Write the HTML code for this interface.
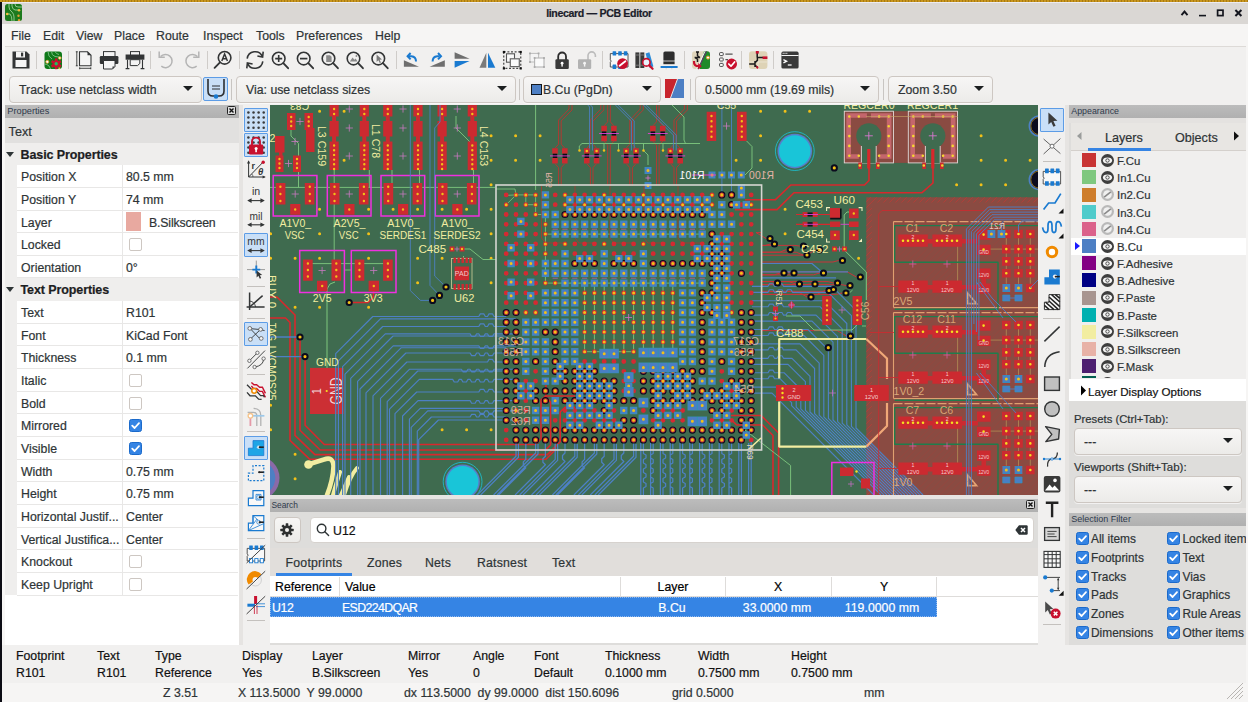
<!DOCTYPE html>
<html lang="en"><head><meta charset="utf-8"><title>linecard — PCB Editor</title>
<style>
*{box-sizing:border-box;margin:0;padding:0}
html,body{width:1248px;height:702px;overflow:hidden;background:#f0efee}
body{position:relative;font-family:"Liberation Sans",sans-serif;font-size:12.3px;color:#2e3436;line-height:1;-webkit-text-stroke:0.2px currentColor}
.a{position:absolute}
.t{position:absolute;white-space:nowrap;line-height:16px;height:16px;margin-top:1px}
.b{font-weight:bold}
.cap{position:absolute;height:12px;background:#b4b4b4;font-size:9.2px;color:#323c4e}
.cap span{position:absolute;left:3px;top:0;line-height:11px;white-space:nowrap}
.combo{position:absolute;height:27px;border:1px solid #cdc7c2;border-radius:4px;background:linear-gradient(#f7f6f5,#ecebe9);box-shadow:0 1px 0 rgba(255,255,255,.6)}
.combo .t{top:5px}
.arr{position:absolute;width:0;height:0;border-left:5px solid transparent;border-right:5px solid transparent;border-top:5px solid #1c1f20}
.sepv{position:absolute;width:1px;background:#c8c5c2}
.seph{position:absolute;height:1px;background:#c8c5c2}
.row{position:absolute;left:17px;width:221px;height:23px;background:#fff;border-bottom:1px solid #e8e7e6}
.row .k{position:absolute;left:4px;top:4px;line-height:16px;white-space:nowrap}
.row .v{position:absolute;left:109px;top:4px;line-height:16px;white-space:nowrap}
.row i{position:absolute;left:105px;top:0;width:1px;height:22px;background:#e8e7e6}
.cb{position:absolute;width:13px;height:13px;border:1px solid #cdc7c2;border-radius:2px;background:#fff}
.cbx{position:absolute;width:13px;height:13px;border-radius:2.5px;background:#3584e4;border:1px solid #1b6acb}
.tog{position:absolute;width:24px;height:24px;border:1px solid #5c9ce6;background:#c9dff7;border-radius:1px}
</style></head>
<body><div class="a" style="left:0px;top:0px;width:1248px;height:24px;background:#dad7d4;"></div>
<div class="a" style="left:0;top:0;width:1248px;height:2px;background:repeating-linear-gradient(90deg,#c8961e 0,#c8961e 2px,#a87a12 2px,#a87a12 3px)"></div>
<div class="a" style="left:0px;top:2px;width:1248px;height:1px;background:#ecebf2;"></div>
<svg class="a" style="left:5px;top:4px" width="17" height="17" viewBox="0 0 17 17"><rect width="17" height="17" rx="2.5" fill="#1d7a1d"/><path d="M4 0 V3 Q4 6 7 8 Q9 10 9 13 V17 M7 0 V2 Q7 5 10 6 H13 M10 0 Q10 3 13 3 H17 M2 10 H5 Q7 12 7 17" fill="none" stroke="#9ad09a" stroke-width="0.9"/><circle cx="14" cy="6.3" r="1.3" fill="#f0c040"/><circle cx="2.2" cy="10" r="1.3" fill="#f0c040"/><circle cx="13.5" cy="11.8" r="1.2" fill="#e0a030"/><circle cx="14" cy="16.3" r="1.2" fill="#e0a030"/></svg>
<div class="t b" style="left:499px;width:200px;text-align:center;top:3.6px;font-size:10.6px;color:#1b1d2a;letter-spacing:-0.35px">linecard — PCB Editor</div>
<svg class="a" style="left:1176px;top:6px" width="70" height="14" viewBox="1176 6 70 14" fill="none" stroke="#14161e" stroke-width="1.9"><path d="M1181.5 15.2 L1184.5 11.6 L1187.5 15.2"/><path d="M1199 15.6 H1206" stroke-width="1.6"/><rect x="1217.6" y="10.2" width="5.4" height="5.4" stroke-width="1.7"/><path d="M1235.4 10 L1241.4 16 M1241.4 10 L1235.4 16" stroke-width="2"/></svg>
<div class="a" style="left:0px;top:24px;width:1248px;height:23px;background:#f6f5f4;"></div>
<div class="a" style="left:4px;top:46px;width:1242px;height:1px;background:#dddad7;"></div>
<div class="t" style="left:11px;top:27px;">File</div>
<div class="t" style="left:43px;top:27px;">Edit</div>
<div class="t" style="left:76px;top:27px;">View</div>
<div class="t" style="left:114px;top:27px;">Place</div>
<div class="t" style="left:156px;top:27px;">Route</div>
<div class="t" style="left:203px;top:27px;">Inspect</div>
<div class="t" style="left:256px;top:27px;">Tools</div>
<div class="t" style="left:296px;top:27px;">Preferences</div>
<div class="t" style="left:375px;top:27px;">Help</div>
<div class="a" style="left:4px;top:47px;width:1242px;height:58px;background:#f1f0ef;"></div>
<svg class="a" style="left:8.5px;top:48px" width="24" height="24" viewBox="0 0 24 24"><path d="M3.5 3.5 H17.5 L20.5 6.5 V20.5 H3.5 Z" fill="#333536"/><rect x="7" y="3.5" width="9" height="6" fill="#f4f4f4"/><rect x="12" y="4.6" width="2.2" height="3.8" fill="#333536"/><rect x="6.5" y="12" width="11" height="7" fill="#f6f6f6"/></svg><div class="sepv" style="left:36px;top:51px;height:18px;background:#cfccc9"></div><svg class="a" style="left:40.5px;top:48px" width="24" height="24" viewBox="0 0 24 24"><rect x="3.5" y="3.5" width="17.5" height="17.5" rx="3" fill="#0f7a1a"/><path d="M7 3.5 Q7 9 11 11 M10.5 3.5 Q10.5 7.5 14 8.5 L18 9 M14 3.5 Q15 6 18 6.5 M3.5 16 Q6 16 8 18 L9.5 21" fill="none" stroke="#7fc088" stroke-width="0.9"/><circle cx="6.3" cy="13.8" r="1.5" fill="#fff" stroke="#f0a030" stroke-width="0.8"/><circle cx="18.8" cy="10" r="1.3" fill="#fff" stroke="#f0a030" stroke-width="0.8"/><circle cx="18.3" cy="20.3" r="1" fill="#f0c040"/><rect x="13.9" y="10.4" width="2.6" height="3" fill="#c8102e" transform="rotate(0 15.2 15.8)"/><rect x="13.9" y="10.4" width="2.6" height="3" fill="#c8102e" transform="rotate(60 15.2 15.8)"/><rect x="13.9" y="10.4" width="2.6" height="3" fill="#c8102e" transform="rotate(120 15.2 15.8)"/><rect x="13.9" y="10.4" width="2.6" height="3" fill="#c8102e" transform="rotate(180 15.2 15.8)"/><rect x="13.9" y="10.4" width="2.6" height="3" fill="#c8102e" transform="rotate(240 15.2 15.8)"/><rect x="13.9" y="10.4" width="2.6" height="3" fill="#c8102e" transform="rotate(300 15.2 15.8)"/><circle cx="15.2" cy="15.8" r="3.6" fill="#c8102e"/><circle cx="15.2" cy="15.8" r="1.7" fill="#20c060"/></svg><div class="sepv" style="left:68px;top:51px;height:18px;background:#cfccc9"></div><svg class="a" style="left:71.5px;top:48px" width="24" height="24" viewBox="0 0 24 24"><path d="M7.5 3.8 H15.5 L19 7.3 V17.8 H7.5 Z" fill="#f4f4f4" stroke="#333536" stroke-width="1.1"/><path d="M15.5 3.8 V7.3 H19 Z" fill="#333536"/><path d="M4.8 3.5 V18 M3.8 3.8 H5.8 M3.8 17.8 H5.8" stroke="#333536" stroke-width="0.9"/><path d="M7.5 20.3 H19 M7.7 19.3 V21.3 M18.8 19.3 V21.3" stroke="#333536" stroke-width="0.9"/></svg><svg class="a" style="left:97px;top:48px" width="24" height="24" viewBox="0 0 24 24"><rect x="6.5" y="3.6" width="11.5" height="5" fill="#f4f4f4" stroke="#333536" stroke-width="1"/><rect x="2.8" y="8" width="18.6" height="8" rx="1.2" fill="#333536"/><path d="M6.5 12.5 H18 V18.5 L15.5 21 H6.5 Z" fill="#f6f6f6" stroke="#333536" stroke-width="1"/><path d="M18 18.5 L15.5 21 V18.5 Z" fill="#333536"/></svg><svg class="a" style="left:122.5px;top:48px" width="24" height="24" viewBox="0 0 24 24"><rect x="7.5" y="3.6" width="9" height="4" fill="#f4f4f4" stroke="#333536" stroke-width="1"/><rect x="2.6" y="6.5" width="18.8" height="5.2" fill="#333536"/><path d="M7.2 11.7 H16.8 V15.5 L14.5 17.6 H7.2 Z" fill="#f4f4f4" stroke="#333536" stroke-width="1"/><path d="M4.5 11.7 V20.6 M19.5 11.7 V20.6 M2.6 20.6 H6.4 M17.6 20.6 H21.4" stroke="#333536" stroke-width="1.1"/></svg><div class="sepv" style="left:150px;top:51px;height:18px;background:#cfccc9"></div><svg class="a" style="left:153.5px;top:48px" width="24" height="24" viewBox="0 0 24 24"><path d="M6.6 8.6 A6.6 6.6 0 1 1 7.3 18.2" fill="none" stroke="#b4b4b4" stroke-width="1.5"/><path d="M5.2 3.6 V9.2 H10.8" fill="none" stroke="#b4b4b4" stroke-width="1.5"/></svg><svg class="a" style="left:180px;top:48px" width="24" height="24" viewBox="0 0 24 24"><path d="M17.4 8.6 A6.6 6.6 0 1 0 16.7 18.2" fill="none" stroke="#b4b4b4" stroke-width="1.5"/><path d="M18.8 3.6 V9.2 H13.2" fill="none" stroke="#b4b4b4" stroke-width="1.5"/></svg><div class="sepv" style="left:207px;top:51px;height:18px;background:#cfccc9"></div><svg class="a" style="left:211px;top:48px" width="24" height="24" viewBox="0 0 24 24"><circle cx="13.6" cy="9.8" r="6.3" fill="none" stroke="#333536" stroke-width="1.6"/><path d="M9 14.4 L3.6 19.8" stroke="#333536" stroke-width="1.9" stroke-linecap="round"/><path d="M10.8 13 L13.6 6 L16.4 13 M11.8 10.8 H15.4" fill="none" stroke="#333536" stroke-width="1.5"/></svg><div class="sepv" style="left:239px;top:51px;height:18px;background:#cfccc9"></div><svg class="a" style="left:243px;top:48px" width="24" height="24" viewBox="0 0 24 24"><path d="M4.2 10.6 A8 8 0 0 1 19.4 8.4" fill="none" stroke="#333536" stroke-width="1.6"/><path d="M20.2 3.6 L19.6 9 L14.4 8" fill="none" stroke="#333536" stroke-width="1.6"/><path d="M19.8 13.4 A8 8 0 0 1 4.6 15.6" fill="none" stroke="#333536" stroke-width="1.6"/><path d="M3.8 20.4 L4.4 15 L9.6 16" fill="none" stroke="#333536" stroke-width="1.6"/></svg><svg class="a" style="left:268px;top:48px" width="24" height="24" viewBox="0 0 24 24"><circle cx="10.7" cy="10.6" r="6.3" fill="none" stroke="#333536" stroke-width="1.6"/><path d="M15.299999999999999 15.2 L20.1 20.2" stroke="#333536" stroke-width="1.9" stroke-linecap="round"/><path d="M7.2 10.6 H14.2 M10.7 7.1 V14.1" stroke="#333536" stroke-width="1.6"/></svg><svg class="a" style="left:293px;top:48px" width="24" height="24" viewBox="0 0 24 24"><circle cx="10.7" cy="10.6" r="6.3" fill="none" stroke="#333536" stroke-width="1.6"/><path d="M15.299999999999999 15.2 L20.1 20.2" stroke="#333536" stroke-width="1.9" stroke-linecap="round"/><path d="M7 10.6 H14.4" stroke="#333536" stroke-width="1.7"/></svg><svg class="a" style="left:317.5px;top:48px" width="24" height="24" viewBox="0 0 24 24"><circle cx="10.5" cy="10.6" r="6.3" fill="none" stroke="#333536" stroke-width="1.6"/><path d="M15.1 15.2 L19.9 20.2" stroke="#333536" stroke-width="1.9" stroke-linecap="round"/><path d="M8.2 7.2 H12 L13.6 8.8 V14 H8.2 Z" fill="#8a8a8a"/></svg><svg class="a" style="left:342.5px;top:48px" width="24" height="24" viewBox="0 0 24 24"><circle cx="10.5" cy="10.6" r="6.3" fill="none" stroke="#333536" stroke-width="1.6"/><path d="M15.1 15.2 L19.9 20.2" stroke="#333536" stroke-width="1.9" stroke-linecap="round"/><path d="M6.8 13.6 L9.6 9.4 L11.4 11.8 L12.6 10.6 L14.6 13.6 Z" fill="#8a8a8a"/><circle cx="13.4" cy="8" r="0.9" fill="#8a8a8a"/></svg><svg class="a" style="left:367.5px;top:48px" width="24" height="24" viewBox="0 0 24 24"><circle cx="10.3" cy="10.6" r="6.3" fill="none" stroke="#333536" stroke-width="1.6"/><path d="M14.9 15.2 L19.700000000000003 20.2" stroke="#333536" stroke-width="1.9" stroke-linecap="round"/><path d="M8.6 6.6 L8.6 14 L10.4 12.2 L11.8 15 L13 14.4 L11.6 11.8 L14 11.6 Z" fill="#7a7a7a"/></svg><div class="sepv" style="left:396px;top:51px;height:18px;background:#cfccc9"></div><svg class="a" style="left:399px;top:48px" width="24" height="24" viewBox="0 0 24 24"><path d="M4.9 12.2 V18.8 H20 Z" fill="#6e6e6e"/><path d="M17 13.4 Q17 8.6 12.4 8.2 H10" fill="none" stroke="#1a7ad0" stroke-width="2"/><path d="M11.6 5 L8.6 8.2 L11.6 11.4" fill="none" stroke="#1a7ad0" stroke-width="2"/></svg><svg class="a" style="left:425px;top:48px" width="24" height="24" viewBox="0 0 24 24"><path d="M19.8 12.2 V18.8 H4.6 Z" fill="#6e6e6e"/><path d="M7.6 13.4 Q7.6 8.6 12.2 8.2 H14.6" fill="none" stroke="#1a7ad0" stroke-width="2"/><path d="M13 5 L16 8.2 L13 11.4" fill="none" stroke="#1a7ad0" stroke-width="2"/></svg><svg class="a" style="left:449.5px;top:48px" width="24" height="24" viewBox="0 0 24 24"><path d="M4.6 4.3 V10.8 H19.6 Z" fill="#6e6e6e"/><path d="M4.6 13 H19.6 L4.6 19.8 Z" fill="#1a7ad0"/></svg><svg class="a" style="left:474.5px;top:48px" width="24" height="24" viewBox="0 0 24 24"><path d="M11.3 4.7 V19.7 H4.5 Z" fill="#7a7a7a"/><path d="M13 4.7 V19.7 H20.3 Z" fill="#1a7ad0"/></svg><svg class="a" style="left:499.5px;top:48px" width="24" height="24" viewBox="0 0 24 24"><rect x="3.8" y="3.9" width="17" height="16.4" fill="none" stroke="#222" stroke-width="1" stroke-dasharray="2 1.6"/><rect x="6.5" y="5.8" width="8" height="8.4" fill="#fafafa" stroke="#555" stroke-width="1.1"/><rect x="10.3" y="10.8" width="9" height="7.8" fill="#fafafa" stroke="#666" stroke-width="1.2"/><rect x="2.8" y="2.9" width="2.2" height="2.2" fill="#111"/><rect x="19.6" y="2.9" width="2.2" height="2.2" fill="#111"/><rect x="2.8" y="19.3" width="2.2" height="2.2" fill="#111"/><rect x="19.6" y="19.3" width="2.2" height="2.2" fill="#111"/></svg><svg class="a" style="left:525px;top:48px" width="24" height="24" viewBox="0 0 24 24"><rect x="5" y="5.4" width="8.6" height="8.6" fill="#f4f4f4" stroke="#bdbdbd" stroke-width="1"/><rect x="9.6" y="10" width="9.4" height="9" fill="#fafafa" stroke="#b4b4b4" stroke-width="1.1"/><rect x="4.1" y="4.5" width="1.8" height="1.8" fill="#aaa"/><rect x="12.7" y="4.5" width="1.8" height="1.8" fill="#aaa"/><rect x="4.1" y="13.1" width="1.8" height="1.8" fill="#aaa"/><rect x="8.7" y="9.1" width="1.8" height="1.8" fill="#aaa"/><rect x="18.1" y="9.1" width="1.8" height="1.8" fill="#aaa"/><rect x="8.7" y="18.1" width="1.8" height="1.8" fill="#aaa"/><rect x="18.1" y="18.1" width="1.8" height="1.8" fill="#aaa"/></svg><svg class="a" style="left:549.5px;top:48px" width="24" height="24" viewBox="0 0 24 24"><path d="M8.2 12 V8.4 A3.9 3.9 0 0 1 16 8.4 V12" fill="none" stroke="#2c2c2c" stroke-width="1.8"/><rect x="5.4" y="11.2" width="13.4" height="9.8" rx="1.2" fill="#3a3a3a"/><circle cx="12.1" cy="15.2" r="1.4" fill="#fff"/><rect x="11.4" y="15.4" width="1.4" height="3.2" fill="#fff"/></svg><svg class="a" style="left:574.5px;top:48px" width="24" height="24" viewBox="0 0 24 24"><path d="M13 12 V7.6 A3.7 3.7 0 0 1 20.4 7.6 V9" fill="none" stroke="#bcbcbc" stroke-width="1.6"/><rect x="3" y="11.2" width="13.2" height="9.8" rx="1.2" fill="#b2b2b2"/><circle cx="9.6" cy="15.2" r="1.4" fill="#f4f4f4"/><rect x="8.9" y="15.4" width="1.4" height="3.2" fill="#f4f4f4"/></svg><div class="sepv" style="left:602px;top:51px;height:18px;background:#cfccc9"></div><svg class="a" style="left:606.5px;top:48px" width="24" height="24" viewBox="0 0 24 24"><path d="M3.3 5.6 H21 V19 H3.3 V14.2 Q5.2 13.2 3.3 11.8 Z" fill="#f8f8f8" stroke="#444" stroke-width="0.9"/><rect x="5.6" y="3.2" width="3.6" height="4.4" rx="0.6" fill="#1a7ad0"/><rect x="11.2" y="3.2" width="3.6" height="4.4" rx="0.6" fill="#1a7ad0"/><rect x="16.8" y="3.2" width="3.6" height="4.4" rx="0.6" fill="#1a7ad0"/><rect x="5.6" y="16.6" width="3.6" height="4.4" rx="0.6" fill="#1a7ad0"/><rect x="11.2" y="16.6" width="3.6" height="4.4" rx="0.6" fill="#1a7ad0"/><circle cx="15.6" cy="15.6" r="5.4" fill="#c8102e"/><path d="M12.6 17.8 L18.4 13.2" stroke="#fff" stroke-width="1.8" stroke-linecap="round"/></svg><svg class="a" style="left:631.5px;top:48px" width="24" height="24" viewBox="0 0 24 24"><rect x="3.4" y="4.4" width="4" height="15.6" fill="#3a3a3a"/><rect x="8.3" y="4.4" width="4" height="15.6" fill="#3a3a3a"/><path d="M13.6 5.6 L17.4 4.2 L21.4 18.4 L17.6 19.8 Z" fill="#2a8ad8"/><path d="M3.4 7 H7.4 M8.3 7 H12.3 M3.4 17.2 H7.4 M8.3 17.2 H12.3" stroke="#888" stroke-width="0.8"/><circle cx="14.4" cy="14.4" r="3.7" fill="#e8f2fb" stroke="#c8102e" stroke-width="1.7"/><path d="M17.2 17.4 L20.6 20.8" stroke="#c8102e" stroke-width="2.2" stroke-linecap="round"/></svg><svg class="a" style="left:656.5px;top:48px" width="24" height="24" viewBox="0 0 24 24"><path d="M6.4 5 Q6.4 3.4 8 3.4 H16 Q17.6 3.4 17.6 5 V12 H6.4 Z" fill="#2e2e2e"/><rect x="6.4" y="12" width="11.2" height="1.8" fill="#777"/><rect x="6.4" y="13.8" width="11.2" height="2.4" fill="#2e2e2e"/><path d="M9.2 18 V21.4 M14.8 18 V21.4" stroke="#d8d8d8" stroke-width="1"/><rect x="3.6" y="18" width="17" height="2" fill="#1a7ad0"/></svg><div class="sepv" style="left:684px;top:51px;height:18px;background:#cfccc9"></div><svg class="a" style="left:688.5px;top:48px" width="24" height="24" viewBox="0 0 24 24"><rect x="3" y="3.2" width="18" height="17.8" rx="3" fill="#e0d6bc"/><path d="M15 3.2 H18 Q21 3.2 21 6.2 V18 Q21 21 18 21 H10.5 Z" fill="#1f8a2a"/><path d="M17.4 3.2 L9 21" stroke="#5a3a6a" stroke-width="1.2"/><path d="M16 3.2 L7.6 21" stroke="#f4f4f4" stroke-width="1"/><path d="M7 4 H10 M8.5 4 V8 M8.5 11 V14 M5.6 9.6 H11 M8.5 8 L11 9.6 M8.5 11 L6 9.6" stroke="#1c1c1c" stroke-width="1.5" fill="none"/><circle cx="19" cy="9.6" r="1.5" fill="#fff" stroke="#f0a030" stroke-width="1"/><path d="M5 13 Q4.6 18.4 10 18.2" fill="none" stroke="#c8102e" stroke-width="2.2"/><path d="M9.2 15 L12.8 18.2 L9.2 21.4 Z" fill="#c8102e"/></svg><svg class="a" style="left:715.5px;top:48px" width="24" height="24" viewBox="0 0 24 24"><rect x="3.6" y="4.6" width="3.6" height="3" rx="0.6" fill="#fff" stroke="#4a4a4a" stroke-width="1"/><rect x="3.6" y="10" width="3.6" height="3" rx="0.6" fill="#fff" stroke="#4a4a4a" stroke-width="1"/><rect x="3.6" y="15.4" width="3.6" height="3" rx="0.6" fill="#fff" stroke="#4a4a4a" stroke-width="1"/><path d="M9.4 6.2 H16.6 M9.4 11.6 H12" stroke="#555" stroke-width="1.3"/><circle cx="15.6" cy="16" r="5.4" fill="#c8102e"/><path d="M12.8 16 L15 18.2 L18.6 14" fill="none" stroke="#fff" stroke-width="1.7" stroke-linecap="round" stroke-linejoin="round"/></svg><div class="sepv" style="left:741px;top:51px;height:18px;background:#cfccc9"></div><svg class="a" style="left:745.5px;top:48px" width="24" height="24" viewBox="0 0 24 24"><rect x="3" y="3.2" width="18.4" height="17.8" rx="3" fill="#ded3b6"/><path d="M3 14 H21.4 M12 3.2 V21" stroke="#efe8d6" stroke-width="0.8"/><path d="M11.2 5 V9.6 M11.2 9.6 H17 M3.2 16 H9 M9 13 V19 M9 14.6 L11.4 12.4 V9.6 M9 17.2 L11.6 19.4" stroke="#1c1c1c" stroke-width="1.5" fill="none"/><rect x="9.8" y="3" width="3" height="2.6" fill="#c8102e"/><rect x="16.6" y="8.4" width="4.8" height="2.6" fill="#c8102e"/><path d="M10.4 17.6 L12.6 19 L11.8 21 L10.4 20 Z" fill="#c8102e"/></svg><div class="sepv" style="left:773px;top:51px;height:18px;background:#cfccc9"></div><svg class="a" style="left:777.5px;top:48px" width="24" height="24" viewBox="0 0 24 24"><rect x="3.4" y="3.6" width="17.2" height="17" rx="1.6" fill="#3a3a3a"/><rect x="3.4" y="7" width="17.2" height="1" fill="#f4f4f4"/><path d="M4.6 5.3 H9.8" stroke="#e8e8e8" stroke-width="1" stroke-dasharray="1.2 0.6"/><path d="M5.4 11.6 L8.6 13.2 L5.4 14.8" fill="none" stroke="#fff" stroke-width="1.3"/><path d="M9.8 17 H13.6" stroke="#fff" stroke-width="1.3"/></svg>
<div class="combo" style="left:9px;top:75.6px;width:193px;height:27px"><div class="t" style="left:9px;top:4.2px">Track: use netclass width</div><div class="arr" style="right:8.5px;top:9.5px"></div></div>
<div class="tog" style="left:203px;top:77px;width:25px;height:24px;border-radius:2px"></div>
<svg class="a" style="left:204px;top:78px" width="24" height="22" viewBox="0 0 24 22"><path d="M4 1 V13 Q4 18 9 18 H15 Q20 18 20 13 V1" fill="none" stroke="#2b2d30" stroke-width="1.6"/><path d="M8 8 H16 M8 11 H16" stroke="#2b2d30" stroke-width="1"/><circle cx="12" cy="18.5" r="2.3" fill="#1a7ad0"/></svg>
<div class="sepv" style="left:231px;top:79px;height:21px"></div>
<div class="combo" style="left:236px;top:75.6px;width:280px;height:27px"><div class="t" style="left:9px;top:4.2px">Via: use netclass sizes</div><div class="arr" style="right:8.5px;top:9.5px"></div></div>
<div class="sepv" style="left:519px;top:79px;height:21px"></div>
<div class="combo" style="left:523px;top:75.6px;width:138px;height:27px"><div class="t" style="left:7px;top:4.2px"><span style="display:inline-block;width:11px;height:11px;background:#4d7fc4;border:1px solid #14171a;vertical-align:-1px;margin-right:1px"></span>B.Cu (PgDn)</div><div class="arr" style="right:8.5px;top:9.5px"></div></div>
<svg class="a" style="left:665px;top:79px" width="19" height="19" viewBox="0 0 19 19"><rect width="19" height="19" fill="#c8252d"/><path d="M12.5 0 H19 V19 H5.5 Z" fill="#4d7fc4"/><path d="M12.5 0 L5.5 19" stroke="#e8e8e8" stroke-width="1"/></svg>
<div class="sepv" style="left:690px;top:79px;height:21px"></div>
<div class="combo" style="left:695px;top:75.6px;width:184px;height:27px"><div class="t" style="left:9px;top:4.2px">0.5000 mm (19.69 mils)</div><div class="arr" style="right:8.5px;top:9.5px"></div></div>
<div class="sepv" style="left:883px;top:79px;height:21px"></div>
<div class="combo" style="left:888px;top:75.6px;width:105px;height:27px"><div class="t" style="left:9px;top:4.2px">Zoom 3.50</div><div class="arr" style="right:8.5px;top:9.5px"></div></div>
<div class="a" style="left:0px;top:2px;width:1.5px;height:700px;background:#0c0c14;"></div>
<div class="a" style="left:1.5px;top:24px;width:3.5px;height:621px;background:#f8f7f6;"></div>
<div class="a" style="left:5px;top:105px;width:234px;height:540px;background:#ffffff;"></div>
<div class="cap" style="left:5px;top:105px;width:234px;height:13px;background:linear-gradient(#bcbcbc,#b0b0b0)"><svg class="a" style="left:0;top:0" width="234" height="13"><text x="2.3" y="8.7" font-family="Liberation Sans, sans-serif" font-size="9.3" fill="#2f3a4c" textLength="42" lengthAdjust="spacingAndGlyphs">Properties</text></svg></div>
<svg class="a" style="left:227px;top:106px" width="9" height="9" viewBox="0 0 9 9"><rect x="0.5" y="0.5" width="8" height="8" rx="1" fill="#dcdcdc" stroke="#222" stroke-width="1"/><path d="M2.5 2.5 L6.5 6.5 M6.5 2.5 L2.5 6.5" stroke="#111" stroke-width="1.4"/></svg>
<div class="a" style="left:5px;top:118px;width:234px;height:25px;background:#e1e0df;"></div>
<div class="t" style="left:8.6px;top:122.7px;font-size:12.6px">Text</div>
<div class="a" style="left:5px;top:143px;width:12px;height:452px;background:#efeeed;"></div>
<div class="a" style="left:5px;top:143px;width:234px;height:22px;background:#efeeed;"></div>
<div class="arr" style="left:6px;top:152px;border-top-color:#2e3436;border-left-width:4.8px;border-right-width:4.8px"></div>
<div class="t b" style="left:20.5px;top:146px;font-size:12.5px;color:#1c2022;letter-spacing:-0.1px">Basic Properties</div>
<div class="row" style="top:165px;height:23px"><i style="height:22px"></i><div class="k">Position X</div><div class="v">80.5 mm</div></div>
<div class="row" style="top:188px;height:23px"><i style="height:22px"></i><div class="k">Position Y</div><div class="v">74 mm</div></div>
<div class="row" style="top:211px;height:22px"><i style="height:21px"></i><div class="k">Layer</div></div>
<div class="a" style="left:126px;top:212px;width:15px;height:19px;background:#e8a9a0;"></div>
<div class="t" style="left:149px;top:214px;letter-spacing:-0.15px">B.Silkscreen</div>
<div class="row" style="top:233px;height:23px"><i style="height:22px"></i><div class="k">Locked</div></div>
<div class="cb" style="left:128.5px;top:238px"></div>
<div class="row" style="top:256px;height:22px"><i style="height:21px"></i><div class="k">Orientation</div><div class="v">0°</div></div>
<div class="a" style="left:5px;top:278px;width:234px;height:23px;background:#efeeed;"></div>
<div class="arr" style="left:6px;top:287px;border-top-color:#2e3436;border-left-width:4.8px;border-right-width:4.8px"></div>
<div class="t b" style="left:20.5px;top:281px;font-size:12.5px;color:#1c2022;letter-spacing:-0.1px">Text Properties</div>
<div class="row" style="top:301px;height:23px"><i style="height:22px"></i><div class="k">Text</div><div class="v">R101</div></div>
<div class="row" style="top:324px;height:22px"><i style="height:21px"></i><div class="k">Font</div><div class="v">KiCad Font</div></div>
<div class="row" style="top:346px;height:23px"><i style="height:22px"></i><div class="k">Thickness</div><div class="v">0.1 mm</div></div>
<div class="row" style="top:369px;height:23px"><i style="height:22px"></i><div class="k">Italic</div></div>
<div class="cb" style="left:128.5px;top:374px"></div>
<div class="row" style="top:392px;height:22px"><i style="height:21px"></i><div class="k">Bold</div></div>
<div class="cb" style="left:128.5px;top:397px"></div>
<div class="row" style="top:414px;height:23px"><i style="height:22px"></i><div class="k">Mirrored</div></div>
<div class="cbx" style="left:128.5px;top:419px"><svg class="a" style="left:0;top:0" width="11" height="11" viewBox="0 0 11 11"><path d="M2.2 5.6 L4.6 8 L9 3.2" fill="none" stroke="#fff" stroke-width="1.8" stroke-linecap="round" stroke-linejoin="round"/></svg></div>
<div class="row" style="top:437px;height:23px"><i style="height:22px"></i><div class="k">Visible</div></div>
<div class="cbx" style="left:128.5px;top:442px"><svg class="a" style="left:0;top:0" width="11" height="11" viewBox="0 0 11 11"><path d="M2.2 5.6 L4.6 8 L9 3.2" fill="none" stroke="#fff" stroke-width="1.8" stroke-linecap="round" stroke-linejoin="round"/></svg></div>
<div class="row" style="top:460px;height:22px"><i style="height:21px"></i><div class="k">Width</div><div class="v">0.75 mm</div></div>
<div class="row" style="top:482px;height:23px"><i style="height:22px"></i><div class="k">Height</div><div class="v">0.75 mm</div></div>
<div class="row" style="top:505px;height:23px"><i style="height:22px"></i><div class="k">Horizontal Justif...</div><div class="v">Center</div></div>
<div class="row" style="top:528px;height:22px"><i style="height:21px"></i><div class="k">Vertical Justifica...</div><div class="v">Center</div></div>
<div class="row" style="top:550px;height:23px"><i style="height:22px"></i><div class="k">Knockout</div></div>
<div class="cb" style="left:128.5px;top:555px"></div>
<div class="row" style="top:573px;height:23px"><i style="height:22px"></i><div class="k">Keep Upright</div></div>
<div class="cb" style="left:128.5px;top:578px"></div>
<div class="a" style="left:239px;top:105px;width:4px;height:540px;background:#e6e4e2;"></div>
<div class="a" style="left:243px;top:105px;width:27px;height:540px;background:#f1f0ef;"></div>
<div class="tog" style="left:244px;top:108px"></div><svg class="a" style="left:244px;top:108.0px" width="24" height="24" viewBox="0 0 24 24"><circle cx="4.4" cy="4.4" r="1.25" fill="#3a3a3a"/><circle cx="4.4" cy="9.5" r="1.25" fill="#3a3a3a"/><circle cx="4.4" cy="14.6" r="1.25" fill="#3a3a3a"/><circle cx="4.4" cy="19.7" r="1.25" fill="#3a3a3a"/><circle cx="9.5" cy="4.4" r="1.25" fill="#3a3a3a"/><circle cx="9.5" cy="9.5" r="1.25" fill="#3a3a3a"/><circle cx="9.5" cy="14.6" r="1.25" fill="#3a3a3a"/><circle cx="9.5" cy="19.7" r="1.25" fill="#3a3a3a"/><circle cx="14.6" cy="4.4" r="1.25" fill="#3a3a3a"/><circle cx="14.6" cy="9.5" r="1.25" fill="#3a3a3a"/><circle cx="14.6" cy="14.6" r="1.25" fill="#3a3a3a"/><circle cx="14.6" cy="19.7" r="1.25" fill="#3a3a3a"/><circle cx="19.7" cy="4.4" r="1.25" fill="#3a3a3a"/><circle cx="19.7" cy="9.5" r="1.25" fill="#3a3a3a"/><circle cx="19.7" cy="14.6" r="1.25" fill="#3a3a3a"/><circle cx="19.7" cy="19.7" r="1.25" fill="#3a3a3a"/></svg><div class="tog" style="left:244px;top:133px"></div><svg class="a" style="left:244px;top:133.2px" width="24" height="24" viewBox="0 0 24 24"><circle cx="4.4" cy="4.4" r="1.25" fill="#3a3a3a"/><circle cx="4.4" cy="9.5" r="1.25" fill="#3a3a3a"/><circle cx="4.4" cy="14.6" r="1.25" fill="#3a3a3a"/><circle cx="4.4" cy="19.7" r="1.25" fill="#3a3a3a"/><circle cx="9.5" cy="4.4" r="1.25" fill="#3a3a3a"/><circle cx="9.5" cy="9.5" r="1.25" fill="#3a3a3a"/><circle cx="9.5" cy="14.6" r="1.25" fill="#3a3a3a"/><circle cx="9.5" cy="19.7" r="1.25" fill="#3a3a3a"/><circle cx="14.6" cy="4.4" r="1.25" fill="#3a3a3a"/><circle cx="14.6" cy="9.5" r="1.25" fill="#3a3a3a"/><circle cx="14.6" cy="14.6" r="1.25" fill="#3a3a3a"/><circle cx="14.6" cy="19.7" r="1.25" fill="#3a3a3a"/><circle cx="19.7" cy="4.4" r="1.25" fill="#3a3a3a"/><circle cx="19.7" cy="9.5" r="1.25" fill="#3a3a3a"/><circle cx="19.7" cy="14.6" r="1.25" fill="#3a3a3a"/><circle cx="19.7" cy="19.7" r="1.25" fill="#3a3a3a"/><path d="M8 12.4 V8.6 A4 4 0 0 1 16 8.6 V12.4" fill="none" stroke="#c8102e" stroke-width="1.9"/><rect x="5" y="11.6" width="14.2" height="9.8" rx="1.2" fill="#c8102e"/><circle cx="12.1" cy="15.6" r="1.5" fill="#fff"/><rect x="11.3" y="15.8" width="1.6" height="3.4" fill="#fff"/></svg><svg class="a" style="left:244px;top:158.0px" width="24" height="24" viewBox="0 0 24 24"><path d="M4.6 3.4 V19 H20.6" fill="none" stroke="#333536" stroke-width="1"/><path d="M4.6 2.2 L3 5.4 H6.2 Z M21.8 19 L18.6 17.4 V20.6 Z" fill="#333536"/><path d="M4.6 19 L18.6 4.6" stroke="#333536" stroke-width="1"/><circle cx="19.2" cy="4.2" r="1.7" fill="#c8102e"/><path d="M9 19 A4.4 4.4 0 0 0 7.8 16" fill="none" stroke="#333536" stroke-width="0.7"/><text x="9.3" y="11" font-family="Liberation Sans, sans-serif" font-size="9" fill="#333536" text-anchor="middle" font-weight="bold">r</text><text x="16.6" y="17" font-family="Liberation Sans, sans-serif" font-size="9.5" fill="#333536" text-anchor="middle" font-style="italic" font-weight="bold">θ</text></svg><svg class="a" style="left:244px;top:182.5px" width="24" height="24" viewBox="0 0 24 24"><text x="12" y="12.2" font-family="Liberation Sans, sans-serif" font-size="10.6" fill="#333536" text-anchor="middle" >in</text><path d="M4.6 17.6 H19.4" stroke="#333536" stroke-width="1.1"/><path d="M7.6 15.3 L3.2 17.6 L7.6 19.900000000000002 Z M16.4 15.3 L20.8 17.6 L16.4 19.900000000000002 Z" fill="#333536"/></svg><svg class="a" style="left:244px;top:207.5px" width="24" height="24" viewBox="0 0 24 24"><text x="12" y="11.6" font-family="Liberation Sans, sans-serif" font-size="10.2" fill="#333536" text-anchor="middle" >mil</text><path d="M4.6 16.8 H19.4" stroke="#333536" stroke-width="1.1"/><path d="M7.6 14.5 L3.2 16.8 L7.6 19.1 Z M16.4 14.5 L20.8 16.8 L16.4 19.1 Z" fill="#333536"/></svg><div class="tog" style="left:244px;top:233px"></div><svg class="a" style="left:244px;top:233.0px" width="24" height="24" viewBox="0 0 24 24"><text x="12" y="12.2" font-family="Liberation Sans, sans-serif" font-size="10.4" fill="#333536" text-anchor="middle" >mm</text><path d="M4.6 17.6 H19.4" stroke="#333536" stroke-width="1.1"/><path d="M7.6 15.3 L3.2 17.6 L7.6 19.900000000000002 Z M16.4 15.3 L20.8 17.6 L16.4 19.900000000000002 Z" fill="#333536"/></svg><svg class="a" style="left:244px;top:258.0px" width="24" height="24" viewBox="0 0 24 24"><path d="M12.3 2.6 V11 M3 11.6 H21" stroke="#777" stroke-width="0.7"/><path d="M8.4 11.6 H16.2 M12.3 7.6 V15.4" stroke="#1a7ad0" stroke-width="1.9"/><path d="M12.6 12.6 L12.6 19.6 L14.4 17.8 L15.8 20.8 L17.2 20.1 L15.8 17.2 L18.2 17 Z" fill="#333536"/></svg><div class="seph" style="left:247px;top:286px;width:18px;background:#c4c1be"></div><svg class="a" style="left:244px;top:289.5px" width="24" height="24" viewBox="0 0 24 24"><path d="M5.6 2.6 V20 M2.6 17 H20.6" stroke="#333536" stroke-width="1.5" fill="none"/><path d="M5.6 17 L18.6 5.6" stroke="#333536" stroke-width="1.5"/><path d="M5.6 11 Q10.6 11.6 11.6 17" fill="none" stroke="#333536" stroke-width="0.9"/></svg><div class="seph" style="left:247px;top:318px;width:18px;background:#c4c1be"></div><div class="tog" style="left:244px;top:322px"></div><svg class="a" style="left:244px;top:322.0px" width="24" height="24" viewBox="0 0 24 24"><path d="M6.2 6.6 L16.2 17 M5.8 17.6 L16.4 7.6 M6.2 6.6 L16.4 7.6 M16.4 7.6 L20.6 8.6" stroke="#333536" stroke-width="0.9" fill="none"/><circle cx="5.8" cy="6.4" r="1.9" fill="#f4f4f4" stroke="#555" stroke-width="0.8"/><circle cx="16.6" cy="7.4" r="1.9" fill="#f4f4f4" stroke="#555" stroke-width="0.8"/><circle cx="6.4" cy="17.4" r="1.9" fill="#f4f4f4" stroke="#555" stroke-width="0.8"/><circle cx="17.2" cy="16.4" r="1.9" fill="#f4f4f4" stroke="#555" stroke-width="0.8"/></svg><svg class="a" style="left:244px;top:347.5px" width="24" height="24" viewBox="0 0 24 24"><path d="M3.4 20.4 L21 2.6" stroke="#333536" stroke-width="0.9"/><path d="M5.6 12.6 L13.4 4.8 M10.8 19 Q19.4 17.6 19.6 11" stroke="#333536" stroke-width="0.9" fill="none"/><circle cx="13.4" cy="4.8" r="1.7" fill="#f4f4f4" stroke="#555" stroke-width="0.8"/><circle cx="5.4" cy="12.8" r="1.7" fill="#f4f4f4" stroke="#555" stroke-width="0.8"/><circle cx="19.6" cy="10.6" r="1.7" fill="#f4f4f4" stroke="#555" stroke-width="0.8"/><circle cx="10.6" cy="19" r="1.7" fill="#f4f4f4" stroke="#555" stroke-width="0.8"/></svg><div class="seph" style="left:247px;top:374px;width:18px;background:#c4c1be"></div><svg class="a" style="left:244px;top:378.5px" width="24" height="24" viewBox="0 0 24 24"><path d="M7.4 3.4 L10 5.8 L12.6 5.8 L15.6 8.2 L18.4 8.2 L21.4 14.4" fill="none" stroke="#c8102e" stroke-width="1.4"/><path d="M7.4 7 L9.4 9.4 L12.6 9.4 L15.6 12.4 L18.4 12.4 L21.4 18.4" fill="none" stroke="#c8102e" stroke-width="1.4"/><path d="M3 5.8 L8.6 11.4 L11.8 11.4 L16.6 16.6 L19.4 16.6 L20.4 18.2 M3 13.4 L6 16.8 L11.4 16.8 L14.6 20.2 L17.6 20.4" fill="none" stroke="#333536" stroke-width="1.3"/><circle cx="10.2" cy="11.8" r="2.4" fill="#fff" stroke="#f08a00" stroke-width="1.5"/></svg><svg class="a" style="left:244px;top:405.0px" width="24" height="24" viewBox="0 0 24 24"><path d="M3.6 7.4 H9.4 Q12.8 7.4 12.8 10.8 V21 M9.6 3.4 Q16.8 3.6 16.8 10.6 V21" fill="none" stroke="#b2b2b2" stroke-width="1.3"/><path d="M7 10.8 H20.4" stroke="#9cc8ea" stroke-width="1.7"/><path d="M6.4 12.8 V21" stroke="#e49aa8" stroke-width="1.8"/><circle cx="6.4" cy="10.8" r="2.3" fill="#fff" stroke="#f6c48c" stroke-width="1.3"/></svg><div class="seph" style="left:247px;top:431px;width:18px;background:#c4c1be"></div><div class="tog" style="left:244px;top:436px"></div><svg class="a" style="left:244px;top:435.5px" width="24" height="24" viewBox="0 0 24 24"><path d="M4.4 19.6 V12.2 H9 V4.6 H19.8 V19.6 Z" fill="#1ea5e6" stroke="#1a7ad0" stroke-width="0.8"/><circle cx="14.6" cy="11.2" r="1.9" fill="#f4f4f4" stroke="#1ea5e6" stroke-width="0.7"/><path d="M15.6 11.2 H19.8" stroke="#222" stroke-width="1.6"/><circle cx="15.6" cy="11.2" r="0.9" fill="#222"/></svg><svg class="a" style="left:244px;top:460.5px" width="24" height="24" viewBox="0 0 24 24"><path d="M4.4 19.6 V12.2 H9 V4.6 H19.8 V19.6 Z" fill="none" stroke="#1a7ad0" stroke-width="1.2" stroke-dasharray="2 1.6"/><path d="M14.6 11.2 H19.8" stroke="#222" stroke-width="1.6"/><circle cx="15.2" cy="11.2" r="1" fill="#222"/></svg><svg class="a" style="left:244px;top:485.5px" width="24" height="24" viewBox="0 0 24 24"><path d="M4.4 19.6 V12.2 H9 V4.6 H19.8 V19.6 Z" fill="#f8f8f8" stroke="#1a7ad0" stroke-width="1.2"/><path d="M12 8.4 H17 V14 H12 Z" fill="none" stroke="#1a7ad0" stroke-width="0.8"/><circle cx="14.6" cy="11.2" r="1.9" fill="#f4f4f4" stroke="#1a7ad0" stroke-width="0.7"/><path d="M15.6 11.2 H19.8" stroke="#222" stroke-width="1.6"/><circle cx="15.6" cy="11.2" r="0.9" fill="#222"/></svg><svg class="a" style="left:244px;top:510.5px" width="24" height="24" viewBox="0 0 24 24"><path d="M4.4 19.6 V12.2 H9 V4.6 H19.8 V19.6 Z" fill="#f8f8f8" stroke="#1a7ad0" stroke-width="1.2"/><path d="M4.4 19.6 L19.8 12.6 M4.4 19.6 L13 8 M9 12.2 L9 4.6 L14 9" fill="none" stroke="#1a7ad0" stroke-width="0.8"/><circle cx="14.6" cy="11.2" r="1.9" fill="#f4f4f4" stroke="#1a7ad0" stroke-width="0.7"/><path d="M15.6 11.2 H19.8" stroke="#222" stroke-width="1.6"/><circle cx="15.6" cy="11.2" r="0.9" fill="#222"/></svg><div class="seph" style="left:247px;top:538px;width:18px;background:#c4c1be"></div><svg class="a" style="left:244px;top:542.0px" width="24" height="24" viewBox="0 0 24 24"><path d="M3.2 6.4 H20.6 V19 H3.2 V14.4 Q5.2 13.2 3.2 11.8 Z" fill="#f8f8f8" stroke="#444" stroke-width="0.9"/><rect x="5.2" y="3.4" width="3.6" height="4.6" rx="0.4" fill="#1a7ad0"/><rect x="10.6" y="3.4" width="3.6" height="4.6" rx="0.4" fill="#1a7ad0"/><rect x="16" y="3.4" width="3.6" height="4.6" rx="0.4" fill="#1a7ad0"/><rect x="5.4" y="16.6" width="3.2" height="4.2" fill="#fff" stroke="#1a7ad0" stroke-width="0.9"/><rect x="10.8" y="16.6" width="3.2" height="4.2" fill="#fff" stroke="#1a7ad0" stroke-width="0.9"/><rect x="16.2" y="16.6" width="3.2" height="4.2" fill="#fff" stroke="#1a7ad0" stroke-width="0.9"/><path d="M2.6 21 L21.2 3.2" stroke="#444" stroke-width="1"/></svg><svg class="a" style="left:244px;top:567.5px" width="24" height="24" viewBox="0 0 24 24"><circle cx="11.4" cy="12" r="6" fill="none" stroke="#d0d0d0" stroke-width="1"/><circle cx="11.4" cy="12" r="2.4" fill="none" stroke="#d0d0d0" stroke-width="1"/><path d="M4.6 16.4 A8 8 0 0 1 17.4 6.2 L11.4 12 Z" fill="#f08a00"/><circle cx="11.4" cy="12" r="2.9" fill="#f4f4f4"/><path d="M2.6 21 L21.2 3.2" stroke="#444" stroke-width="1"/></svg><svg class="a" style="left:244px;top:592.5px" width="24" height="24" viewBox="0 0 24 24"><path d="M11.6 3 V11" stroke="#c8102e" stroke-width="3"/><path d="M3.4 12.2 H11" stroke="#1a7ad0" stroke-width="3"/><path d="M12 10.8 H21 M12 13.6 H21" stroke="#1a7ad0" stroke-width="0.8"/><path d="M10.4 12.4 V21 M13 12.4 V21" stroke="#c8102e" stroke-width="0.8"/><path d="M2.6 21 L21.2 3.2" stroke="#444" stroke-width="1"/></svg><div class="seph" style="left:247px;top:620px;width:18px;background:#c4c1be"></div>
<svg width="768" height="390" viewBox="270 105 768 390" style="position:absolute;left:270px;top:105px;overflow:hidden"><rect x="270" y="105" width="768" height="390" fill="#3f6b4f" /><path d="M866.3 197.2 H1038 V495 H866.3 Z" fill="#8a4b42"/><path d="M893.6 111.2 H908.3 V162.9 H893.6 Z" fill="#8a4b42"/><defs><pattern id="hz" width="6" height="6" patternUnits="userSpaceOnUse"><path d="M-1 7 L7 -1 M-4 4 L4 -4 M2 10 L10 2" stroke="#c03a34" stroke-width="0.9"/></pattern></defs><path d="M866.3 197.2 H1038 V202.6 H871.8 V495 H866.3 Z" fill="url(#hz)" opacity="0.75"/><path d="M319.6 111.2h0M344.1 111.2h0M760.6 111.2h0M785.1 111.2h0M809.6 111.2h0M491.1 135.7h0M515.6 135.7h0M540.1 135.7h0M760.6 135.7h0M981.1 135.7h0M344.1 160.2h0M491.1 160.2h0M515.6 160.2h0M540.1 160.2h0M736.1 160.2h0M760.6 160.2h0M981.1 160.2h0M1005.6 160.2h0M1030.1 160.2h0M491.1 184.7h0M956.6 184.7h0M981.1 184.7h0M1005.6 184.7h0M319.6 209.2h0M368.6 209.2h0M393.1 209.2h0M417.6 209.2h0M442.1 209.2h0M466.6 209.2h0M491.1 209.2h0M785.1 209.2h0M270.6 233.7h0M319.6 233.7h0M368.6 233.7h0M491.1 233.7h0M785.1 233.7h0M270.6 258.2h0M295.1 258.2h0M319.6 258.2h0M368.6 258.2h0M417.6 258.2h0M442.1 258.2h0M491.1 258.2h0M858.6 258.2h0M417.6 282.7h0M491.1 282.7h0M295.1 307.2h0M319.6 307.2h0M368.6 307.2h0M270.6 405.2h0M270.6 429.7h0M442.1 429.7h0M466.6 429.7h0M491.1 429.7h0M295.1 454.2h0M295.1 478.7h0" stroke="#f2c118" stroke-width="3" stroke-linecap="round" fill="none"/><circle cx="794.8" cy="151.1" r="19.4" fill="none" stroke="#19c5d8" stroke-width="0.8"/><circle cx="794.8" cy="151.1" r="17.3" fill="#5a7cc8" /><circle cx="794.8" cy="151.1" r="15.8" fill="#19c5d8" /><circle cx="462.6" cy="481.7" r="19.4" fill="none" stroke="#19c5d8" stroke-width="0.8"/><circle cx="462.6" cy="481.7" r="17.3" fill="#5a7cc8" /><circle cx="462.6" cy="481.7" r="15.8" fill="#19c5d8" /><circle cx="257.5" cy="478" r="22" fill="#8a6aa8" /><circle cx="257.5" cy="478" r="17.8" fill="#4d80c4" /><circle cx="1039.4" cy="126" r="10" fill="#0b0b1e" stroke="#4d80c4" stroke-width="1.7"/><circle cx="1039.4" cy="126" r="8.6" fill="none" stroke="#e0b020" stroke-width="0.6"/><circle cx="1039.4" cy="179.6" r="10" fill="#0b0b1e" stroke="#4d80c4" stroke-width="1.7"/><circle cx="1039.4" cy="179.6" r="8.6" fill="none" stroke="#e0b020" stroke-width="0.6"/><rect x="844.3" y="111.2" width="49.2" height="51.7" fill="#8a4b42" stroke="#e4d8d8" stroke-width="0.9"/><path d="M846.3 113.2 h45.2 v45.5 h-12.5 v-4.5 h7.8 v-36.5 h-35.8 v36.5 h7.8 v4.5 h-12.5 z" fill="#c4666c"/><rect x="866.9" y="113.2" width="4" height="4.5" fill="#8a4b42"/><circle cx="868.8" cy="135.8" r="12.6" fill="#3f6b4f" /><rect x="861.6" y="146" width="14.4" height="17" fill="#3f6b4f" /><path d="M861.4 146 V162.9 M876.2 146 V162.9" stroke="#e4d8d8" stroke-width="0.9"/><rect x="867.2" y="149" width="3.2" height="19.5" fill="#d8282c" /><path d="M858.3 162.5h3.6v6.5h-3.6zM876 162.5h3.6v6.5h-3.6z" fill="#cc2a30" /><path d="M849.3 116.5h0M858.8 116.5h0M879.1 116.5h0M888.7 116.5h0M849.3 126.3h0M849.3 136.1h0M849.3 145.9h0M849.3 155.7h0M888.7 126.3h0M888.7 136.1h0M888.7 145.9h0M888.7 155.7h0M858.8 155.8h0M879.1 155.8h0M859.8 165.5h0M878.3 165.5h0" stroke="#f6d830" stroke-width="2.6" stroke-linecap="round" fill="none"/><path d="M864.8 135.8h8M868.8 131.8v8" stroke="#d878d0" stroke-width="0.9" fill="none"/><rect x="908.3" y="111.2" width="49.2" height="51.7" fill="#8a4b42" stroke="#e4d8d8" stroke-width="0.9"/><path d="M910.3 113.2 h45.2 v45.5 h-12.5 v-4.5 h7.8 v-36.5 h-35.8 v36.5 h7.8 v4.5 h-12.5 z" fill="#c4666c"/><rect x="930.9" y="113.2" width="4" height="4.5" fill="#8a4b42"/><circle cx="932.8" cy="135.8" r="12.6" fill="#3f6b4f" /><rect x="925.6" y="146" width="14.4" height="17" fill="#3f6b4f" /><path d="M925.4 146 V162.9 M940.2 146 V162.9" stroke="#e4d8d8" stroke-width="0.9"/><rect x="931.2" y="149" width="3.2" height="19.5" fill="#d8282c" /><path d="M922.3 162.5h3.6v6.5h-3.6zM940 162.5h3.6v6.5h-3.6z" fill="#cc2a30" /><path d="M913.3 116.5h0M922.8 116.5h0M943.1 116.5h0M952.7 116.5h0M913.3 126.3h0M913.3 136.1h0M913.3 145.9h0M913.3 155.7h0M952.7 126.3h0M952.7 136.1h0M952.7 145.9h0M952.7 155.7h0M922.8 155.8h0M943.1 155.8h0M923.8 165.5h0M942.3 165.5h0" stroke="#f6d830" stroke-width="2.6" stroke-linecap="round" fill="none"/><path d="M928.8 135.8h8M932.8 131.8v8" stroke="#d878d0" stroke-width="0.9" fill="none"/><path d="M866 116.5 H958" stroke="#c8a868" stroke-width="0.6"/><path d="M270 318L285.5 318L290 322.5L290 440.4L309.8 459.3L546 459.3L555.4 449.7L555.4 447M270 297L277 297L295 315L295 435.4L314.9 454.6L547.4 454.6L560.2 441.7L560.2 412L565 407.4L575 407.4M300 337L300 430.3L320.2 450L545.8 450L550.6 444.8L550.6 402L546 397L546 385M305.1 356.6L305.1 425.3L324.3 444.5L535.4 444.5L541 439L541 400L545.5 396L575 396M349.2 302.5L368 302.5L373.5 297L373.5 291M745 199.7L775.5 199.7L790.8 185L864.5 185L869 180.5L869 150M735 209.6L777 209.6L794 192.7L922 192.7L933 183L933 150" stroke="#d8282c" stroke-width="1.6" fill="none" stroke-linejoin="round" /><path d="M731 415.5L761 415.5L778.6 433L778.6 495M731 419.5L736.7 425L762.7 425L773 435.5L773 495" stroke="#d8282c" stroke-width="1.6" fill="none" stroke-linejoin="round" /><path d="M270 187.4 L495 187.4" stroke="#7fc87f" stroke-width="0.9" fill="none" /><path d="M291 130 L291 136 L298.5 143.5 L298.5 187.4" stroke="#7fc87f" stroke-width="0.9" fill="none" /><path d="M334.2 170 L334.2 187.4" stroke="#7fc87f" stroke-width="0.9" fill="none" /><path d="M369.3 170 L369.3 187.4" stroke="#7fc87f" stroke-width="0.9" fill="none" /><path d="M392 170 L392 187.4" stroke="#7fc87f" stroke-width="0.9" fill="none" /><path d="M419.5 170 L419.5 187.4" stroke="#7fc87f" stroke-width="0.9" fill="none" /><path d="M473.5 170 L473.5 187.4" stroke="#7fc87f" stroke-width="0.9" fill="none" /><path d="M334.2 204 L334.2 263.6" stroke="#7fc87f" stroke-width="0.9" fill="none" /><path d="M311 263.6 L384 263.6" stroke="#7fc87f" stroke-width="0.9" fill="none" /><path d="M344.7 270 L351.3 270" stroke="#7fc87f" stroke-width="0.9" fill="none" /><path d="M335 282 L330 284 L327 289 L327 368" stroke="#7fc87f" stroke-width="1" fill="none" /><path d="M456 116 L456 128 L471 143" stroke="#7fc87f" stroke-width="0.9" fill="none" /><path d="M463 249 L470 249 L483 259.5 L496 259.5" stroke="#7fc87f" stroke-width="0.9" fill="none" /><path d="M463.5 256 L463.5 262" stroke="#7fc87f" stroke-width="0.9" fill="none" /><rect x="451.5" y="258.5" width="20.5" height="30" fill="none" stroke="#cfcf9a" stroke-width="0.8"/><path d="M275.8 183h9.6v21.5h-9.6zM304.8 183h9.6v21.5h-9.6zM290.2 204h10.2v10.8h-10.2zM329.5 105h9.2v11.5h-9.2zM359.7 105h9.2v11.5h-9.2zM329.5 121h9.2v15.5h-9.2zM359.7 121h9.2v15.5h-9.2zM332.1 116h4v6h-4zM362.3 116h4v6h-4zM332.1 136h4v6h-4zM362.3 136h4v6h-4zM329.5 141.5h9.2v28.5h-9.2zM359.7 141.5h9.2v28.5h-9.2zM329.9 183h9.6v21.5h-9.6zM358.9 183h9.6v21.5h-9.6zM344.3 204h10.2v10.8h-10.2zM383.2 105h9.2v11.5h-9.2zM413.4 105h9.2v11.5h-9.2zM383.2 121h9.2v15.5h-9.2zM413.4 121h9.2v15.5h-9.2zM385.8 116h4v6h-4zM416 116h4v6h-4zM385.8 136h4v6h-4zM416 136h4v6h-4zM383.2 141.5h9.2v28.5h-9.2zM413.4 141.5h9.2v28.5h-9.2zM383.6 183h9.6v21.5h-9.6zM412.6 183h9.6v21.5h-9.6zM398 204h10.2v10.8h-10.2zM437.5 105h9.2v11.5h-9.2zM467.7 105h9.2v11.5h-9.2zM437.5 121h9.2v15.5h-9.2zM467.7 121h9.2v15.5h-9.2zM440.1 116h4v6h-4zM470.3 116h4v6h-4zM440.1 136h4v6h-4zM470.3 136h4v6h-4zM437.5 141.5h9.2v28.5h-9.2zM467.7 141.5h9.2v28.5h-9.2zM437.9 183h9.6v21.5h-9.6zM466.9 183h9.6v21.5h-9.6zM452.3 204h10.2v10.8h-10.2zM287 113h8.5v17h-8.5zM304.5 113h8.5v17h-8.5zM275 136h9.5v16.5h-9.5zM306 128h8.5v24h-8.5zM275.5 155.5h8v16.5h-8zM293 155.5h8v16.5h-8zM279 152h3.5v4h-3.5zM303.1 259.4h9.6v21.4h-9.6zM331.5 259.4h9.6v21.4h-9.6zM317 280.8h10.4v10.4h-10.4zM354.7 259.4h9.6v21.4h-9.6zM383.1 259.4h9.6v21.4h-9.6zM368.6 280.8h10.4v10.4h-10.4z" fill="#cc2a30" /><path d="M454.6 266.6h14.4v13.6h-14.4zM453.5 257.5h2.4v5.5h-2.4zM457.5 257.5h2.4v5.5h-2.4zM461.5 257.5h2.4v5.5h-2.4zM465.5 257.5h2.4v5.5h-2.4zM469.2 257.5h2.4v5.5h-2.4zM453.5 284h2.4v6h-2.4zM457.5 284h2.4v6h-2.4zM461.5 284h2.4v6h-2.4zM465.5 284h2.4v6h-2.4zM469.2 284h2.4v6h-2.4zM449.5 246.5h5v5h-5zM459.5 246.5h5v5h-5z" fill="#cc2a30" /><text x="461.8" y="276" font-size="7" fill="#f0c8c8" text-anchor="middle" font-family="Liberation Sans, sans-serif" >PAD</text><path d="M280.4 186.8h0M280.4 194h0M280.4 201h0M309.8 186.8h0M309.8 194h0M309.8 201h0M295.2 209.5h0M334.1 109h0M334.1 114h0M334.1 145.5h0M334.1 150.2h0M334.1 154.9h0M334.1 159.6h0M334.1 164.3h0M334.1 169h0M364.3 109h0M364.3 114h0M364.3 145.5h0M364.3 150.2h0M364.3 154.9h0M364.3 159.6h0M364.3 164.3h0M364.3 169h0M334.5 186.8h0M334.5 194h0M334.5 201h0M363.9 186.8h0M363.9 194h0M363.9 201h0M349.3 209.5h0M387.8 109h0M387.8 114h0M387.8 145.5h0M387.8 150.2h0M387.8 154.9h0M387.8 159.6h0M387.8 164.3h0M387.8 169h0M418 109h0M418 114h0M418 145.5h0M418 150.2h0M418 154.9h0M418 159.6h0M418 164.3h0M418 169h0M388.2 186.8h0M388.2 194h0M388.2 201h0M417.6 186.8h0M417.6 194h0M417.6 201h0M403 209.5h0M442.1 109h0M442.1 114h0M442.1 145.5h0M442.1 150.2h0M442.1 154.9h0M442.1 159.6h0M442.1 164.3h0M442.1 169h0M472.3 109h0M472.3 114h0M472.3 145.5h0M472.3 150.2h0M472.3 154.9h0M472.3 159.6h0M472.3 164.3h0M472.3 169h0M442.5 186.8h0M442.5 194h0M442.5 201h0M471.9 186.8h0M471.9 194h0M471.9 201h0M457.3 209.5h0M291.2 117h0M291.2 121.5h0M291.2 126h0M308.7 117h0M308.7 121.5h0M308.7 126h0M279.5 159h0M279.5 163.5h0M279.5 168h0M297 159h0M297 163.5h0M297 168h0M307.9 263.5h0M307.9 270h0M307.9 276.5h0M336.3 263.5h0M336.3 270h0M336.3 276.5h0M322.2 286h0M359.5 263.5h0M359.5 270h0M359.5 276.5h0M387.9 263.5h0M387.9 270h0M387.9 276.5h0M373.8 286h0M452 249h0M462 249h0" stroke="#f2c118" stroke-width="2.4" stroke-linecap="round" fill="none"/><path d="M291.6 194h7.2M295.2 190.4v7.2M345.7 128h7.2M349.3 124.4v7.2M345.7 156h7.2M349.3 152.4v7.2M345.7 109h7.2M349.3 105.4v7.2M345.7 194h7.2M349.3 190.4v7.2M399.4 128h7.2M403 124.4v7.2M399.4 156h7.2M403 152.4v7.2M399.4 109h7.2M403 105.4v7.2M399.4 194h7.2M403 190.4v7.2M453.7 128h7.2M457.3 124.4v7.2M453.7 156h7.2M457.3 152.4v7.2M453.7 109h7.2M457.3 105.4v7.2M453.7 194h7.2M457.3 190.4v7.2M296.4 121.5h7.2M300 117.9v7.2M291.4 141.5h7.2M295 137.9v7.2M284.9 163.5h7.2M288.5 159.9v7.2M318.5 270.5h7.2M322.1 266.9v7.2M370.1 270.5h7.2M373.7 266.9v7.2" stroke="#c878c0" stroke-width="0.8" fill="none"/><path d="M454.5 249h5M457 246.5v5" stroke="#c878c0" stroke-width="0.8" fill="none"/><path d="M273.2 175.4h43.7v40.6h-43.7zM327.3 175.4h43.7v40.6h-43.7zM381 175.4h43.7v40.6h-43.7zM435.3 175.4h43.7v40.6h-43.7zM299.7 250.6h44.7v42h-44.7zM351.3 250.6h44.7v42h-44.7z" fill="none" stroke="#f030e0" stroke-width="1.5"/><path d="M555 148.2L558.6 144.2L558.6 120L569 109L569 105M564.8 148.2L561.2 144.2L561.2 121L572 110L572 105M555 163.6L558.6 167.6L558.6 186M564.8 163.6L561.2 167.6L561.2 186M586.8 148.2L590.4 144.2L590.4 120L600.8 109L600.8 105M596.6 148.2L593 144.2L593 121L603.8 110L603.8 105M586.8 163.6L590.4 167.6L590.4 186M596.6 163.6L593 167.6L593 186M604.1 125.8L607.7 121.8L607.7 105M613.9 125.8L610.3 121.8L610.3 105M604.1 141.2L607.7 145.2L607.7 186M613.9 141.2L610.3 145.2L610.3 186M626.2 148.2L629.8 144.2L629.8 120L640.2 109L640.2 105M636 148.2L632.4 144.2L632.4 121L643.2 110L643.2 105M626.2 163.6L629.8 167.6L629.8 186M636 163.6L632.4 167.6L632.4 186M652.9 125.8L656.5 121.8L656.5 105M662.7 125.8L659.1 121.8L659.1 105M652.9 141.2L656.5 145.2L656.5 186M662.7 141.2L659.1 145.2L659.1 186M670.4 148.2L674 144.2L674 120L684.4 109L684.4 105M680.2 148.2L676.6 144.2L676.6 121L687.4 110L687.4 105M670.4 163.6L674 167.6L674 186M680.2 163.6L676.6 167.6L676.6 186" stroke="#b03a32" stroke-width="1" fill="none" stroke-linejoin="round" /><path d="M535.6 105L535.6 190M579.3 150.5L579.3 146L582 143.5L700 143.5M604 143.5L604 150.5M618.5 143.5L618.5 150.5M643.5 143.5L643.5 150.5M663 143.5L663 150.5M643.5 150.5L648 155L648 165M672 105L684 117L684 140L685.5 143.5M746.6 141L752 146.5L752 168L745 175" stroke="#7fc87f" stroke-width="0.9" fill="none" stroke-linejoin="round" /><path d="M590.6 105L592.4 107L592.4 150.5M587.8 105L589.6 107L589.6 150.5M615.4 105L631.4 121L631.4 150.5M618.2 105L634.2 121L634.2 150.5M643.4 105L673.4 135L673.4 150.5M646.2 105L676.2 135L676.2 150.5M721.9 105L721.9 195M731.5 105L731.5 195M410.3 105L410.3 290.6L420.5 300.4L432.6 300.4M430 105L430 285.4L439.5 295.4M434.7 128L434.7 276L446 287M440 105L440 122L434.7 128" stroke="#4d80c4" stroke-width="0.9" fill="none" stroke-linejoin="round" /><path d="M552.2 148.2h5.6v5.6h-5.6zM552.2 158h5.6v5.6h-5.6zM562 148.2h5.6v5.6h-5.6zM562 158h5.6v5.6h-5.6zM584 148.2h5.6v5.6h-5.6zM584 158h5.6v5.6h-5.6zM593.8 148.2h5.6v5.6h-5.6zM593.8 158h5.6v5.6h-5.6zM601.3 125.8h5.6v5.6h-5.6zM601.3 135.6h5.6v5.6h-5.6zM611.1 125.8h5.6v5.6h-5.6zM611.1 135.6h5.6v5.6h-5.6zM623.4 148.2h5.6v5.6h-5.6zM623.4 158h5.6v5.6h-5.6zM633.2 148.2h5.6v5.6h-5.6zM633.2 158h5.6v5.6h-5.6zM650.1 125.8h5.6v5.6h-5.6zM650.1 135.6h5.6v5.6h-5.6zM659.9 125.8h5.6v5.6h-5.6zM659.9 135.6h5.6v5.6h-5.6zM667.6 148.2h5.6v5.6h-5.6zM667.6 158h5.6v5.6h-5.6zM677.4 148.2h5.6v5.6h-5.6zM677.4 158h5.6v5.6h-5.6z" fill="#cc2a30" /><path d="M552.8 153.8h4.4v4.2h-4.4zM562.6 153.8h4.4v4.2h-4.4zM584.6 153.8h4.4v4.2h-4.4zM594.4 153.8h4.4v4.2h-4.4zM601.9 131.4h4.4v4.2h-4.4zM611.7 131.4h4.4v4.2h-4.4zM624 153.8h4.4v4.2h-4.4zM633.8 153.8h4.4v4.2h-4.4zM650.7 131.4h4.4v4.2h-4.4zM660.5 131.4h4.4v4.2h-4.4zM668.2 153.8h4.4v4.2h-4.4zM678 153.8h4.4v4.2h-4.4z" fill="#0a0a14" /><path d="M550 155.9h19.8M581.8 155.9h19.8M599.1 133.5h19.8M621.2 155.9h19.8M647.9 133.5h19.8M665.4 155.9h19.8" stroke="#e040d0" stroke-width="0.9"/><path d="M579.5 150.5h0M604 150.5h0M618.5 150.5h0M643.5 150.5h0M663 150.5h0M586.8 151h0M596.6 151h0M626.2 151h0M636 151h0M670.4 151h0M680.2 151h0" stroke="#f2c118" stroke-width="2.6" stroke-linecap="round" fill="none"/><path d="M706.7 111.7h9.5v29.3h-9.5zM737 111.7h9.6v29.3h-9.6z" fill="#cc2a30" /><path d="M711.5 116h0M711.5 121.2h0M711.5 126.4h0M711.5 131.6h0M711.5 136.8h0M741.8 116h0M741.8 121.2h0M741.8 126.4h0M741.8 131.6h0M741.8 136.8h0" stroke="#f2c118" stroke-width="2.4" stroke-linecap="round" fill="none"/><path d="M722.9 126h7.2M726.5 122.4v7.2" stroke="#c878c0" stroke-width="0.8" fill="none"/><path d="M712 175h0M721.9 175h0M731.5 175h0M741.3 175h0M648 170.5h0M648 185.5h0" stroke="#3292b8" stroke-width="7.0" stroke-linecap="square" fill="none"/><path d="M712 175h0M721.9 175h0M731.5 175h0M741.3 175h0M648 170.5h0M648 185.5h0" stroke="#4a7ec4" stroke-width="5.8" stroke-linecap="square" fill="none"/><path d="M712 175h0M721.9 175h0M731.5 175h0M741.3 175h0M648 170.5h0M648 185.5h0" stroke="#f2c118" stroke-width="3" stroke-linecap="round" fill="none"/><path d="M692 175 H716" stroke="#e040d0" stroke-width="1"/><path d="M645.4 178h5.2M648 175.4v5.2" stroke="#e070d0" stroke-width="0.8" fill="none"/><rect x="310" y="367.9" width="33.6" height="46.1" fill="#cc2f34" /><text x="316.5" y="391.3" font-size="13" fill="#f0d4d4" text-anchor="middle" textLength="6" lengthAdjust="spacingAndGlyphs" font-family="Liberation Sans, sans-serif" transform="rotate(-90 316.5 391.3) translate(0 4.5)">1</text><text x="336.2" y="391" font-size="17" fill="#f0d4d4" text-anchor="middle" textLength="27" lengthAdjust="spacingAndGlyphs" font-family="Liberation Sans, sans-serif" transform="rotate(-90 336.2 391) translate(0 6.2)">GND</text><path d="M326.7 391h0" stroke="#f6e020" stroke-width="2.2" stroke-linecap="round" fill="none"/><g fill="none" stroke="#f2eda1" stroke-linecap="round" stroke-linejoin="round"><path d="M308 464.5 L324 459.5 Q333 456 333.5 466 Q333 480 327 495" stroke-width="4.6"/><path d="M308.5 464.5 h0" stroke-width="8.6"/><path d="M340 472 Q336 484 333 495 M357 468 Q350 476 344 495 M349 477 L341 495" stroke-width="4"/></g><path d="M844.2 215L847 212L852 212M844.2 215L844.2 250L866.3 272L866.3 300" stroke="#7fc87f" stroke-width="1" fill="none" stroke-linejoin="round" /><path d="M818 214.5L830 214.5M818 224.3L830 224.3M796 214.5L803 214.5M796 224.3L803 224.3" stroke="#d8282c" stroke-width="1.2" fill="none" stroke-linejoin="round" /><path d="M831 208.6h10.6v10h-10.6zM830.2 209.6h10.6v10h-10.6z" fill="#101018" /><path d="M829.8 207.9h10.2v9.8h-10.2zM849 208.6h9.6v9.6h-9.6zM830 221.6h10.2v5.4h-10.2zM849 221.6h9.6v5.4h-9.6zM830.2 230.4h9.6v9.6h-9.6zM849 230.4h9.6v9.6h-9.6zM802.6 212h5v5h-5zM812.6 212h5v5h-5zM802.6 221.8h5v5h-5zM812.6 221.8h5v5h-5zM832 246.5h5v5h-5zM842 246.5h5v5h-5z" fill="#cc2a30" /><path d="M807.6 212.4h5v4.2h-5zM807.6 222.2h5v4.2h-5z" fill="#101018" /><path d="M804 214.5 h14 M804 224.3 h14 M840.6 224.3 h8.4" stroke="#e040d0" stroke-width="0.9"/><path d="M853.8 213.5h0M835 235h0M853.8 235h0M834.5 249h0M844.5 249h0" stroke="#f2c118" stroke-width="2.4" stroke-linecap="round" fill="none"/><path d="M826.6 211 v-3.4 h3.4 M858.6 207.6 h3.4 v3.4 M826.6 238.6 v3.4 h3.4" fill="none" stroke="#f4f0c0" stroke-width="1.1"/><path d="M862 238.6 v3.4 h-3.4 z" fill="#f4f0c0"/><path d="M836.9 249h5.2M839.5 246.4v5.2" stroke="#d070c8" stroke-width="0.8" fill="none"/><path d="M762 232.6L756.1 232.6L766 238.5L770 238.5M762 245.4L765.1 245.4L770.5 244L774.5 244M762 252.2L779.7 252.2L786.3 249.6L790.3 249.6M762 245.4L794.9 245.4L799.5 246L803.5 246M762 252.2L796.2 252.2L803 255L807 255M762 255.2L806.3 255.2L815.5 250L819.5 250M762 262L833 262L838.5 260.5L842.5 260.5M762 274.8L774.2 274.8L780 273L784 273M762 271.8L784.8 271.8L790 273L794 273M762 274.8L813.7 274.8L819.5 273L823.5 273M762 271.8L847.1 271.8L856.3 277L860.3 277M762 284.6L767.9 284.6L773.5 283L777.5 283M762 281.6L789.1 281.6L795.5 284L799.5 284M762 284.6L806.4 284.6L811 284L815 284M762 281.6L828.1 281.6L833.5 283L837.5 283M762 284.6L841.1 284.6L846 285.5L850 285.5M762 291.4L823.6 291.4L829.5 289.5L833.5 289.5M762 294.4L836.6 294.4L842 293L846 293M762 291.4L797.4 291.4L807 297L811 297M762 294.4L817.1 294.4L825 290.5L829 290.5M762 330.6L837.1 330.6L846.5 336L850.5 336" stroke="#c8343a" stroke-width="1" fill="none" stroke-linejoin="round" /><path d="M762 263.5L812 263.5L823.5 273.5M762 271.9L848 271.9M762 277.9L836 277.9M752 286.3L762 286.3L768 286.3L769.5 283.7L773 283.7L774.5 286.3L777 286.3L778.5 283.7L782 283.7L783.5 286.3L832 286.3L856 310.3L856 428L923 495M752 292.3L762 292.3L768 292.3L769.5 289.7L773 289.7L774.5 292.3L777 292.3L778.5 289.7L782 289.7L783.5 292.3L786 292.3L787.5 289.7L791 289.7L792.5 292.3L828 292.3L851.4 315.7L851.4 426.4L920 495M752 300.7L762 300.7L824 300.7L846.8 323.5L846.8 424.8L917 495M752 306.7L762 306.7L768 306.7L769.5 304.1L773 304.1L774.5 306.7L777 306.7L778.5 304.1L782 304.1L783.5 306.7L820 306.7L842.2 328.9L842.2 423.2L914 495M752 315.1L762 315.1L768 315.1L769.5 312.5L773 312.5L774.5 315.1L777 315.1L778.5 312.5L782 312.5L783.5 315.1L786 315.1L787.5 312.5L791 312.5L792.5 315.1L816 315.1L837.6 336.7L837.6 421.6L911 495M752 321.1L762 321.1L812 321.1L833 342.1L833 420L908 495M752 329.5L762 329.5L768 329.5L769.5 326.9L773 326.9L774.5 329.5L777 329.5L778.5 326.9L782 326.9L783.5 329.5L808 329.5L828.4 349.9L828.4 418.4L905 495M752 335.5L762 335.5L768 335.5L769.5 332.9L773 332.9L774.5 335.5L777 335.5L778.5 332.9L782 332.9L783.5 335.5L786 335.5L787.5 332.9L791 332.9L792.5 335.5L804 335.5L823.8 355.3L823.8 416.8L902 495M752 343.9L762 343.9L800 343.9L819.2 363.1L819.2 415.2L899 495M752 349.9L762 349.9L768 349.9L769.5 347.3L773 347.3L774.5 349.9L777 349.9L778.5 347.3L782 347.3L783.5 349.9L796 349.9L814.6 368.5L814.6 413.6L896 495M752 358.3L762 358.3L768 358.3L769.5 355.7L773 355.7L774.5 358.3L777 358.3L778.5 355.7L782 355.7L783.5 358.3L792 358.3L810 376.3L810 412L893 495M752 364.3L762 364.3L788 364.3L805.4 381.7L805.4 410.4L890 495M752 372.7L762 372.7L768 372.7L769.5 370.1L773 370.1L774.5 372.7L784 372.7L800.8 389.5L800.8 408.8L887 495M752 378.7L762 378.7L768 378.7L769.5 376.1L773 376.1L774.5 378.7L780 378.7L796.2 394.9L796.2 407.2L884 495M752 387.1L762 387.1L776 387.1L791.6 402.7L791.6 405.6L881 495M752 393.1L762 393.1L772 393.1L787 408.1L787 408.1L873.9 495" stroke="#4d80c4" stroke-width="1.15" fill="none" stroke-linejoin="round" /><path d="M852.6 290L846 296M862 320L852 330L814 330L800 316L786 316M862 326L866 326M745 430L790.6 465.5L790.6 495" stroke="#7fc87f" stroke-width="0.9" fill="none" stroke-linejoin="round" /><path d="M822.2 296h9.5v29h-9.5zM852.6 296h9.4v29h-9.4z" fill="#cc2a30" /><path d="M827 300.5h0M827 305.4h0M827 310.3h0M827 315.2h0M827 320.1h0M857.3 300.5h0M857.3 305.4h0M857.3 310.3h0M857.3 315.2h0M857.3 320.1h0" stroke="#f2c118" stroke-width="2.4" stroke-linecap="round" fill="none"/><path d="M773 306.5h5v5h-5zM773 316h5v5h-5z" fill="#cc2a30" /><path d="M775.5 318.5h0" stroke="#f2c118" stroke-width="2.2" stroke-linecap="round" fill="none"/><path d="M791.5 301 l3.6 4 l-3.6 4 l-3.6 -4 z" fill="#d03048"/><path d="M838.6 310h6.8M842 306.6v6.8M788.1 305h6.8M791.5 301.6v6.8M772.1 313.5h6.8M775.5 310.1v6.8" stroke="#c070c0" stroke-width="0.8" fill="none"/><path d="M776 385h35.2v16h-35.2zM854.2 385h34.6v16h-34.6z" fill="#cc2a30" /><path d="M782.5 388.5h0M782.5 393h0M782.5 397.5h0" stroke="#f6e020" stroke-width="2.4" stroke-linecap="round" fill="none"/><text x="794" y="391.6" font-size="5.6" fill="#f4d0d0" text-anchor="middle" font-family="Liberation Sans, sans-serif" >2</text><text x="794" y="398.6" font-size="5.8" fill="#f4d0d0" text-anchor="middle" font-family="Liberation Sans, sans-serif" >GND</text><text x="871.5" y="391.6" font-size="5.6" fill="#f4d0d0" text-anchor="middle" font-family="Liberation Sans, sans-serif" >1</text><text x="871.5" y="398.6" font-size="5.8" fill="#f4d0d0" text-anchor="middle" font-family="Liberation Sans, sans-serif" >12V0</text><path d="M779.2 378.5L779.2 339L866.3 339M779.2 401.5L779.2 446.6L866.3 446.6" stroke="#f2eda1" stroke-width="2.2" fill="none" stroke-linejoin="round" /><path d="M866.3 339L887 358.5L887 379M887 403L887 426L866.3 446.6" stroke="#f0a878" stroke-width="2.2" fill="none" stroke-linejoin="round" /><path d="M829.1 393h6.8M832.5 389.6v6.8" stroke="#c070c0" stroke-width="0.8" fill="none"/><path d="M831.8 495 V462.5 H874 V495" fill="none" stroke="#f030e0" stroke-width="1.5"/><path d="M840 467.5h13.5v8.5h-13.5zM861 478.5h9v10h-9z" fill="#cc2a30" /><path d="M856.5 471.5h0" stroke="#f6e020" stroke-width="2.4" stroke-linecap="round" fill="none"/><path d="M848 484h6M851 481v6" stroke="#c070c0" stroke-width="0.8" fill="none"/><path d="M770 238.5h0M774.5 244h0M790.3 249.6h0M803.5 246h0M807 255h0M819.5 250h0M842.5 260.5h0M784 273h0M794 273h0M823.5 273h0M860.3 277h0M777.5 283h0M799.5 284h0M815 284h0M837.5 283h0M850 285.5h0M833.5 289.5h0M846 293h0M811 297h0M829 290.5h0M850.5 336h0M828.3 347.7h0M834.3 167.9h0" stroke="#0b0b1e" stroke-width="7.2" stroke-linecap="round" fill="none"/><path d="M770 238.5h0M774.5 244h0M790.3 249.6h0M803.5 246h0M807 255h0M819.5 250h0M842.5 260.5h0M784 273h0M794 273h0M823.5 273h0M860.3 277h0M777.5 283h0M799.5 284h0M815 284h0M837.5 283h0M850 285.5h0M833.5 289.5h0M846 293h0M811 297h0M829 290.5h0M850.5 336h0M828.3 347.7h0M834.3 167.9h0" stroke="#f2c118" stroke-width="3.2" stroke-linecap="round" fill="none"/><path d="M967.6 293 L976.6 303.6 H967.6 Z" fill="none" stroke="#e4a474" stroke-width="1.7"/><path d="M967.6 384 L976.6 394.6 H967.6 Z" fill="none" stroke="#e4a474" stroke-width="1.7"/><path d="M967.6 475 L976.6 485.6 H967.6 Z" fill="none" stroke="#e4a474" stroke-width="1.7"/><defs><pattern id="hz2" width="7" height="7" patternUnits="userSpaceOnUse"><path d="M-1 8 L8 -1 M-5 5 L5 -5 M2 12 L12 2" stroke="#b03a34" stroke-width="0.7"/></pattern></defs><path d="M893.5 221.6 H1038 V495 H893.5 Z" fill="url(#hz2)" opacity="0.3"/><path d="M957.6 246L957.6 281M1006.3 238L1006.3 284M1018.5 238L1018.5 284M1030.3 238L1030.3 284M990 249.1L1038 249.1M957.6 337L957.6 372M1006.3 329L1006.3 375M1018.5 329L1018.5 375M1030.3 329L1030.3 375M990 340.1L1038 340.1M957.6 428L957.6 463M1006.3 420L1006.3 466M1018.5 420L1018.5 466M1030.3 420L1030.3 466M990 431.1L1038 431.1" stroke="#b89858" stroke-width="0.7" fill="none" stroke-linejoin="round" /><path d="M893.5 221.6 H1038" stroke="#e0a070" stroke-width="1.1" stroke-dasharray="9 2"/><path d="M893.5 312.6 H1038" stroke="#e0a070" stroke-width="1.1" stroke-dasharray="9 2"/><path d="M893.5 403.6 H1038" stroke="#e0a070" stroke-width="1.1" stroke-dasharray="9 2"/><path d="M893.5 307.6L893.5 221.6M893.5 307.6L1038 307.6M893.5 398.6L893.5 312.6M893.5 398.6L1038 398.6M893.5 495L893.5 403.6" stroke="#e0a070" stroke-width="1.1" fill="none" stroke-linejoin="round" /><path d="M998 300L998 262.2L894.7 262.2L894.7 225.6L1038 225.6M894.7 309.2L998 309.2L998 300M998 391L998 353.2L894.7 353.2L894.7 316.6L1038 316.6M894.7 400.2L998 400.2L998 391M998 495L998 444.2L894.7 444.2L894.7 407.6L1038 407.6" stroke="#1f7d4c" stroke-width="1.4" fill="none" stroke-linejoin="round" /><path d="M985 210.5L882 210.5L878.7 214L878.7 495M878.7 286.5L898 286.5M878.7 377.5L898 377.5M870 332.5L894 332.5M878.7 468.5L898 468.5" stroke="#d0282e" stroke-width="0.8" fill="none" stroke-linejoin="round" /><path d="M898.3 234.5h29.5v12.3h-29.5zM932.4 234.5h29.6v12.3h-29.6zM927.8 239.1h4.6v4.4h-4.6zM962 239.1h16v4.4h-16zM898.3 280.5h29.5v12.3h-29.5zM932.4 280.5h29.6v12.3h-29.6zM927.8 285.1h4.6v4.4h-4.6zM962 285.1h16v4.4h-16zM977 229.6h13.6v10.2h-13.6zM977 244.8h13.6v10.2h-13.6zM977 268.4h13.6v10.4h-13.6zM977 283.4h13.6v10.4h-13.6zM981.5 278h4.6v6h-4.6zM1002 229.7h8.6v8.6h-8.6zM1002 244.8h8.6v8.6h-8.6zM1002 257.1h8.6v8.6h-8.6zM1002 268.9h8.6v8.6h-8.6zM1002 283.7h8.6v8.6h-8.6zM1014.2 229.7h8.6v8.6h-8.6zM1014.2 244.8h8.6v8.6h-8.6zM1014.2 257.1h8.6v8.6h-8.6zM1014.2 268.9h8.6v8.6h-8.6zM1014.2 283.7h8.6v8.6h-8.6zM1026 229.7h8.6v8.6h-8.6zM1026 244.8h8.6v8.6h-8.6zM1026 257.1h8.6v8.6h-8.6zM1026 268.9h8.6v8.6h-8.6zM1026 283.7h8.6v8.6h-8.6zM898.3 325.5h29.5v12.3h-29.5zM932.4 325.5h29.6v12.3h-29.6zM927.8 330.1h4.6v4.4h-4.6zM962 330.1h16v4.4h-16zM898.3 371.5h29.5v12.3h-29.5zM932.4 371.5h29.6v12.3h-29.6zM927.8 376.1h4.6v4.4h-4.6zM962 376.1h16v4.4h-16zM977 320.6h13.6v10.2h-13.6zM977 335.8h13.6v10.2h-13.6zM977 359.4h13.6v10.4h-13.6zM977 374.4h13.6v10.4h-13.6zM981.5 369h4.6v6h-4.6zM1002 320.7h8.6v8.6h-8.6zM1002 335.8h8.6v8.6h-8.6zM1002 348.1h8.6v8.6h-8.6zM1002 359.9h8.6v8.6h-8.6zM1002 374.7h8.6v8.6h-8.6zM1014.2 320.7h8.6v8.6h-8.6zM1014.2 335.8h8.6v8.6h-8.6zM1014.2 348.1h8.6v8.6h-8.6zM1014.2 359.9h8.6v8.6h-8.6zM1014.2 374.7h8.6v8.6h-8.6zM1026 320.7h8.6v8.6h-8.6zM1026 335.8h8.6v8.6h-8.6zM1026 348.1h8.6v8.6h-8.6zM1026 359.9h8.6v8.6h-8.6zM1026 374.7h8.6v8.6h-8.6zM898.3 416.5h29.5v12.3h-29.5zM932.4 416.5h29.6v12.3h-29.6zM927.8 421.1h4.6v4.4h-4.6zM962 421.1h16v4.4h-16zM898.3 462.5h29.5v12.3h-29.5zM932.4 462.5h29.6v12.3h-29.6zM927.8 467.1h4.6v4.4h-4.6zM962 467.1h16v4.4h-16zM977 411.6h13.6v10.2h-13.6zM977 426.8h13.6v10.2h-13.6zM977 450.4h13.6v10.4h-13.6zM977 465.4h13.6v10.4h-13.6zM981.5 460h4.6v6h-4.6zM1002 411.7h8.6v8.6h-8.6zM1002 426.8h8.6v8.6h-8.6zM1002 439.1h8.6v8.6h-8.6zM1002 450.9h8.6v8.6h-8.6zM1002 465.7h8.6v8.6h-8.6zM1014.2 411.7h8.6v8.6h-8.6zM1014.2 426.8h8.6v8.6h-8.6zM1014.2 439.1h8.6v8.6h-8.6zM1014.2 450.9h8.6v8.6h-8.6zM1014.2 465.7h8.6v8.6h-8.6zM1026 411.7h8.6v8.6h-8.6zM1026 426.8h8.6v8.6h-8.6zM1026 439.1h8.6v8.6h-8.6zM1026 450.9h8.6v8.6h-8.6zM1026 465.7h8.6v8.6h-8.6z" fill="#cc2a30" /><path d="M1002.7 295h7.2v6h-7.2zM1014.9 295h7.2v6h-7.2zM1002.7 386h7.2v6h-7.2zM1014.9 386h7.2v6h-7.2zM1002.7 477h7.2v6h-7.2zM1014.9 477h7.2v6h-7.2z" fill="#4a7ec4" stroke="#2a9cc0" stroke-width="0.6"/><path d="M1006.3 288h0M1018.5 288h0M1006.3 379h0M1018.5 379h0M1006.3 470h0M1018.5 470h0M991.4 234h0M1001.5 234h0" stroke="#3292b8" stroke-width="7.8" stroke-linecap="square" fill="none"/><path d="M1006.3 288h0M1018.5 288h0M1006.3 379h0M1018.5 379h0M1006.3 470h0M1018.5 470h0M991.4 234h0M1001.5 234h0" stroke="#4a7ec4" stroke-width="6.6" stroke-linecap="square" fill="none"/><path d="M1006.3 288h0M1018.5 288h0M1006.3 379h0M1018.5 379h0M1006.3 470h0M1018.5 470h0M991.4 234h0M1001.5 234h0" stroke="#f2c118" stroke-width="3" stroke-linecap="round" fill="none"/><path d="M903 240.8h0M908 240.8h0M913 240.8h0M918 240.8h0M923 240.8h0M937 240.8h0M942 240.8h0M947 240.8h0M952 240.8h0M957 240.8h0M983.6 234.6h0M983.6 249.6h0M1006.3 234h0M1006.3 249.1h0M1006.3 261.4h0M1006.3 273.2h0M1018.5 234h0M1018.5 249.1h0M1018.5 261.4h0M1018.5 273.2h0M1030.3 234h0M1030.3 249.1h0M1030.3 261.4h0M1030.3 273.2h0M1030.3 288h0M903 331.8h0M908 331.8h0M913 331.8h0M918 331.8h0M923 331.8h0M937 331.8h0M942 331.8h0M947 331.8h0M952 331.8h0M957 331.8h0M983.6 325.6h0M983.6 340.6h0M1006.3 325h0M1006.3 340.1h0M1006.3 352.4h0M1006.3 364.2h0M1018.5 325h0M1018.5 340.1h0M1018.5 352.4h0M1018.5 364.2h0M1030.3 325h0M1030.3 340.1h0M1030.3 352.4h0M1030.3 364.2h0M1030.3 379h0M903 422.8h0M908 422.8h0M913 422.8h0M918 422.8h0M923 422.8h0M937 422.8h0M942 422.8h0M947 422.8h0M952 422.8h0M957 422.8h0M983.6 416.6h0M983.6 431.6h0M1006.3 416h0M1006.3 431.1h0M1006.3 443.4h0M1006.3 455.2h0M1018.5 416h0M1018.5 431.1h0M1018.5 443.4h0M1018.5 455.2h0M1030.3 416h0M1030.3 431.1h0M1030.3 443.4h0M1030.3 455.2h0M1030.3 470h0" stroke="#f6e020" stroke-width="2.6" stroke-linecap="round" fill="none"/><path d="M909.2 264h7.2M912.8 260.4v7.2M943.4 264h7.2M947 260.4v7.2M909.2 355h7.2M912.8 351.4v7.2M943.4 355h7.2M947 351.4v7.2M909.2 446h7.2M912.8 442.4v7.2M943.4 446h7.2M947 442.4v7.2" stroke="#d060a0" stroke-width="0.8" fill="none"/><text x="913" y="239.3" font-size="5.2" fill="#f4d0d0" text-anchor="middle" font-family="Liberation Sans, sans-serif" >2</text><text x="913" y="285.4" font-size="5.2" fill="#f4d0d0" text-anchor="middle" font-family="Liberation Sans, sans-serif" >1</text><text x="913" y="291.6" font-size="5.4" fill="#f4d0d0" text-anchor="middle" font-family="Liberation Sans, sans-serif" >12V0</text><text x="947.2" y="239.3" font-size="5.2" fill="#f4d0d0" text-anchor="middle" font-family="Liberation Sans, sans-serif" >2</text><text x="947.2" y="285.4" font-size="5.2" fill="#f4d0d0" text-anchor="middle" font-family="Liberation Sans, sans-serif" >1</text><text x="947.2" y="291.6" font-size="5.4" fill="#f4d0d0" text-anchor="middle" font-family="Liberation Sans, sans-serif" >12V0</text><text x="983.8" y="276.6" font-size="4.6" fill="#f4d0d0" text-anchor="middle" font-family="Liberation Sans, sans-serif" >12V0</text><text x="983.8" y="292" font-size="4.6" fill="#f4d0d0" text-anchor="middle" font-family="Liberation Sans, sans-serif" >12V0</text><text x="983.8" y="253.6" font-size="4.6" fill="#f4d0d0" text-anchor="middle" font-family="Liberation Sans, sans-serif" >GND</text><text x="913" y="330.3" font-size="5.2" fill="#f4d0d0" text-anchor="middle" font-family="Liberation Sans, sans-serif" >2</text><text x="913" y="376.4" font-size="5.2" fill="#f4d0d0" text-anchor="middle" font-family="Liberation Sans, sans-serif" >1</text><text x="913" y="382.6" font-size="5.4" fill="#f4d0d0" text-anchor="middle" font-family="Liberation Sans, sans-serif" >12V0</text><text x="947.2" y="330.3" font-size="5.2" fill="#f4d0d0" text-anchor="middle" font-family="Liberation Sans, sans-serif" >2</text><text x="947.2" y="376.4" font-size="5.2" fill="#f4d0d0" text-anchor="middle" font-family="Liberation Sans, sans-serif" >1</text><text x="947.2" y="382.6" font-size="5.4" fill="#f4d0d0" text-anchor="middle" font-family="Liberation Sans, sans-serif" >12V0</text><text x="983.8" y="367.6" font-size="4.6" fill="#f4d0d0" text-anchor="middle" font-family="Liberation Sans, sans-serif" >12V0</text><text x="983.8" y="383" font-size="4.6" fill="#f4d0d0" text-anchor="middle" font-family="Liberation Sans, sans-serif" >12V0</text><text x="983.8" y="344.6" font-size="4.6" fill="#f4d0d0" text-anchor="middle" font-family="Liberation Sans, sans-serif" >GND</text><text x="913" y="421.3" font-size="5.2" fill="#f4d0d0" text-anchor="middle" font-family="Liberation Sans, sans-serif" >2</text><text x="913" y="467.4" font-size="5.2" fill="#f4d0d0" text-anchor="middle" font-family="Liberation Sans, sans-serif" >1</text><text x="913" y="473.6" font-size="5.4" fill="#f4d0d0" text-anchor="middle" font-family="Liberation Sans, sans-serif" >12V0</text><text x="947.2" y="421.3" font-size="5.2" fill="#f4d0d0" text-anchor="middle" font-family="Liberation Sans, sans-serif" >2</text><text x="947.2" y="467.4" font-size="5.2" fill="#f4d0d0" text-anchor="middle" font-family="Liberation Sans, sans-serif" >1</text><text x="947.2" y="473.6" font-size="5.4" fill="#f4d0d0" text-anchor="middle" font-family="Liberation Sans, sans-serif" >12V0</text><text x="983.8" y="458.6" font-size="4.6" fill="#f4d0d0" text-anchor="middle" font-family="Liberation Sans, sans-serif" >12V0</text><text x="983.8" y="474" font-size="4.6" fill="#f4d0d0" text-anchor="middle" font-family="Liberation Sans, sans-serif" >12V0</text><text x="983.8" y="435.6" font-size="4.6" fill="#f4d0d0" text-anchor="middle" font-family="Liberation Sans, sans-serif" >GND</text><path d="M1038 207L988.4 207L966.4 229L966.4 495M1038 209.6L989.6 209.6L968.9 230.3L968.9 495M1038 212.1L990.8 212.1L971.4 231.5L971.4 495M1038 214.7L992 214.7L973.9 232.8L973.9 324M1038 217.2L993.2 217.2L976.4 234L976.4 332M1038 219.8L994.4 219.8L978.9 235.2L978.9 340M1038 221L1022 221L1018.5 225L1018.5 232M1003.5 221L1001.5 224L1001.5 232M976.4 282L1003 318M980 282L992 298L1006 312L1016 322M1038 280L1030 288M976.4 373L1003 409M980 373L1016 413M1006.3 298L1018.5 298M1006.3 389L1018.5 389" stroke="#4d80c4" stroke-width="0.9" fill="none" stroke-linejoin="round" /><path d="M506.2 316.5L500 316.5L494 316.5L492.5 313.9L489 313.9L487.5 316.5L485.3 316.5L483.8 313.9L480.3 313.9L478.8 316.5L372.8 316.5L335.7 353.6L335.7 495M516 318.8L500 318.8L380.4 318.8L338.4 360.8L338.4 495M506.2 326.5L500 326.5L494 326.5L492.5 323.9L489 323.9L487.5 326.5L485.3 326.5L483.8 323.9L480.3 323.9L478.8 326.5L382.7 326.5L342.6 366.6L342.6 495M516 333.8L500 333.8L494 333.8L492.5 336.4L489 336.4L487.5 333.8L485.3 333.8L483.8 336.4L480.3 336.4L478.8 333.8L476.6 333.8L475.1 336.4L471.6 336.4L470.1 333.8L385.3 333.8L345 374.1L345 495M506.2 336L500 336L393.1 336L350.7 378.4L350.7 495M516 345.8L500 345.8L494 345.8L492.5 348.4L489 348.4L487.5 345.8L485.3 345.8L483.8 348.4L480.3 348.4L478.8 345.8L393.2 345.8L357.6 381.4L357.6 495M506.2 347.7L500 347.7L401.3 347.7L360 389L360 495M516 353L500 353L494 353L492.5 355.6L489 355.6L487.5 353L485.3 353L483.8 355.6L480.3 355.6L478.8 353L476.6 353L475.1 355.6L471.6 355.6L470.1 353L405.9 353L366 392.9L366 495M506.2 362L500 362L494 362L492.5 359.4L489 359.4L487.5 362L406.9 362L373 395.9L373 495M516 369.2L500 369.2L494 369.2L492.5 371.8L489 371.8L487.5 369.2L485.3 369.2L483.8 371.8L480.3 371.8L478.8 369.2L476.6 369.2L475.1 371.8L471.6 371.8L470.1 369.2L467.9 369.2L466.4 371.8L462.9 371.8L461.4 369.2L409.6 369.2L380.5 398.3L380.5 495M506.2 371L500 371L417.8 371L387.2 401.6L387.2 495M516 379.4L500 379.4L494 379.4L492.5 382L489 382L487.5 379.4L485.3 379.4L483.8 382L480.3 382L478.8 379.4L476.6 379.4L475.1 382L471.6 382L470.1 379.4L467.9 379.4L466.4 382L462.9 382L461.4 379.4L459.2 379.4L457.7 382L454.2 382L452.7 379.4L419.3 379.4L389.5 409.2L389.5 495M506.2 392L500 392L494 392L492.5 389.4L489 389.4L487.5 392L485.3 392L483.8 389.4L480.3 389.4L478.8 392L416.7 392L395 413.7L395 495M516 400.6L500 400.6L494 400.6L492.5 403.2L489 403.2L487.5 400.6L485.3 400.6L483.8 403.2L480.3 403.2L478.8 400.6L476.6 400.6L475.1 403.2L471.6 403.2L470.1 400.6L418 400.6L402.6 416L402.6 495M506.2 408.3L500 408.3L420.2 408.3L409.4 419.1L409.4 495M516 410.8L500 410.8L494 410.8L492.5 413.4L489 413.4L487.5 410.8L485.3 410.8L483.8 413.4L480.3 413.4L478.8 410.8L427.7 410.8L411.2 427.3L411.2 495M506.2 417L500 417L494 417L492.5 414.4L489 414.4L487.5 417L485.3 417L483.8 414.4L480.3 414.4L478.8 417L476.6 417L475.1 414.4L471.6 414.4L470.1 417L431.4 417L417.3 431.1L417.3 495M516 420L500 420L438.4 420L418.7 439.7L418.7 495" stroke="#4d80c4" stroke-width="1.15" fill="none" stroke-linejoin="round" /><path d="M270 337L300 337M270 356.6L305 356.6" stroke="#4d80c4" stroke-width="1.3" fill="none" stroke-linejoin="round" /><path d="M446 287h0M439.5 295.4h0M432.6 300.4h0M349.2 302.5h0M300 337h0M305 356.6h0" stroke="#0b0b1e" stroke-width="7.2" stroke-linecap="round" fill="none"/><path d="M446 287h0M439.5 295.4h0M432.6 300.4h0M349.2 302.5h0M300 337h0M305 356.6h0" stroke="#f2c118" stroke-width="3.2" stroke-linecap="round" fill="none"/><path d="M516 439.9L516 456.2L477.2 495M518.4 443.9L518.4 457.2L480.6 495M525.8 439.9L525.8 459.4L523.3 461.9L523.3 465.4L525.8 467.9L498.7 495M535.6 439.9L535.6 453L493.6 495M538 443.9L538 454L497 495M545.4 439.9L545.4 456.2L542.9 458.7L542.9 462.2L545.4 464.7L515.1 495M555.2 439.9L555.2 459.4L519.6 495M557.6 443.9L557.6 460.4L523 495M565 439.9L565 453L562.5 455.5L562.5 459L565 461.5L531.5 495M574.8 439.9L574.8 456.2L536 495M577.2 443.9L577.2 457.2L539.4 495M584.6 439.9L584.6 459.4L582.1 461.9L582.1 465.4L584.6 467.9L557.5 495M594.4 439.9L594.4 453L552.4 495M596.8 443.9L596.8 454L555.8 495M604.2 439.9L604.2 456.2L601.7 458.7L601.7 462.2L604.2 464.7L573.9 495M614 439.9L614 459.4L578.4 495M616.4 443.9L616.4 460.4L581.8 495M623.8 439.9L623.8 453L621.3 455.5L621.3 459L623.8 461.5L590.3 495M633.6 439.9L633.6 456.2L594.8 495M636 443.9L636 457.2L598.2 495M643.4 439.9L643.4 452L643.4 453.5L646 455L646 458L643.4 459.5L643.4 463L646 464.5L646 467.5L643.4 469L643.4 472.5L646 474L646 477L643.4 478.5L643.4 482L646 483.5L646 486.5L643.4 488L643.4 495M640.8 442.9L640.8 495M653.2 439.9L653.2 452L653.2 453.5L650.6 455L650.6 458L653.2 459.5L653.2 463L650.6 464.5L650.6 467.5L653.2 469L653.2 472.5L650.6 474L650.6 477L653.2 478.5L653.2 482L650.6 483.5L650.6 486.5L653.2 488L653.2 495M650.6 442.9L650.6 495M663 439.9L663 452L663 453.5L665.6 455L665.6 458L663 459.5L663 463L665.6 464.5L665.6 467.5L663 469L663 472.5L665.6 474L665.6 477L663 478.5L663 482L665.6 483.5L665.6 486.5L663 488L663 495M660.4 442.9L660.4 495M672.8 439.9L672.8 452L672.8 453.5L670.2 455L670.2 458L672.8 459.5L672.8 463L670.2 464.5L670.2 467.5L672.8 469L672.8 472.5L670.2 474L670.2 477L672.8 478.5L672.8 482L670.2 483.5L670.2 486.5L672.8 488L672.8 495M670.2 442.9L670.2 495M682.6 439.9L682.6 452L682.6 453.5L685.2 455L685.2 458L682.6 459.5L682.6 463L685.2 464.5L685.2 467.5L682.6 469L682.6 472.5L685.2 474L685.2 477L682.6 478.5L682.6 482L685.2 483.5L685.2 486.5L682.6 488L682.6 495M680 442.9L680 495M692.4 439.9L692.4 452L692.4 453.5L689.8 455L689.8 458L692.4 459.5L692.4 463L689.8 464.5L689.8 467.5L692.4 469L692.4 472.5L689.8 474L689.8 477L692.4 478.5L692.4 482L689.8 483.5L689.8 486.5L692.4 488L692.4 495M689.8 442.9L689.8 495M702.2 439.9L702.2 452L702.2 453.5L704.8 455L704.8 458L702.2 459.5L702.2 463L704.8 464.5L704.8 467.5L702.2 469L702.2 472.5L704.8 474L704.8 477L702.2 478.5L702.2 482L704.8 483.5L704.8 486.5L702.2 488L702.2 495M699.6 442.9L699.6 495M712 439.9L712 452L712 453.5L709.4 455L709.4 458L712 459.5L712 463L709.4 464.5L709.4 467.5L712 469L712 472.5L709.4 474L709.4 477L712 478.5L712 482L709.4 483.5L709.4 486.5L712 488L712 495M709.4 442.9L709.4 495M721.8 439.9L721.8 452L721.8 453.5L724.4 455L724.4 458L721.8 459.5L721.8 463L724.4 464.5L724.4 467.5L721.8 469L721.8 472.5L724.4 474L724.4 477L721.8 478.5L721.8 482L724.4 483.5L724.4 486.5L721.8 488L721.8 495M719.2 442.9L719.2 495M731.6 439.9L731.6 452L731.6 453.5L729 455L729 458L731.6 459.5L731.6 463L729 464.5L729 467.5L731.6 469L731.6 472.5L729 474L729 477L731.6 478.5L731.6 482L729 483.5L729 486.5L731.6 488L731.6 495M729 442.9L729 495M741.4 439.9L741.4 452L741.4 495M738.8 442.9L738.8 495M751.2 439.9L751.2 452L751.2 495M748.6 442.9L748.6 495" stroke="#4d80c4" stroke-width="1.25" fill="none" stroke-linejoin="round" /><path d="M584.6 283.1 L584.6 351.7" stroke="#7fc87f" stroke-width="0.9" fill="none" /><path d="M594.4 283.1 L594.4 351.7" stroke="#7fc87f" stroke-width="0.9" fill="none" /><path d="M604.2 283.1 L604.2 351.7" stroke="#7fc87f" stroke-width="0.9" fill="none" /><path d="M614 283.1 L614 351.7" stroke="#7fc87f" stroke-width="0.9" fill="none" /><path d="M623.8 283.1 L623.8 351.7" stroke="#7fc87f" stroke-width="0.9" fill="none" /><path d="M633.6 283.1 L633.6 351.7" stroke="#7fc87f" stroke-width="0.9" fill="none" /><path d="M643.4 283.1 L643.4 351.7" stroke="#7fc87f" stroke-width="0.9" fill="none" /><path d="M653.2 283.1 L653.2 351.7" stroke="#7fc87f" stroke-width="0.9" fill="none" /><path d="M663 283.1 L663 351.7" stroke="#7fc87f" stroke-width="0.9" fill="none" /><path d="M672.8 283.1 L672.8 351.7" stroke="#7fc87f" stroke-width="0.9" fill="none" /><path d="M545.4 283.1 L702.2 283.1" stroke="#7fc87f" stroke-width="0.8" fill="none" /><path d="M545.4 234.1 L702.2 234.1" stroke="#7fc87f" stroke-width="0.8" fill="none" /><path d="M584.6 351.7 L633.6 351.7" stroke="#7fc87f" stroke-width="0.8" fill="none" /><path d="M545.4 214.5 L545.4 283.1" stroke="#7fc87f" stroke-width="0.9" fill="none" /><path d="M506.2 195.4 L516 194.9" stroke="#7fc87f" stroke-width="0.8" fill="none" /><path d="M496 189 L515 189 L516 194.9 L535.6 194.9 L535.6 214.5 L545.4 214.5" stroke="#7fc87f" stroke-width="0.8" fill="none" /><path d="M516 194.9 L506.2 204.7" stroke="#7fc87f" stroke-width="0.8" fill="none" /><path d="M525.8 194.9 L525.8 204.7 L535.6 204.7" stroke="#7fc87f" stroke-width="0.8" fill="none" /><path d="M541.5 186 L541.5 238 L545.5 243 L563.5 243" stroke="#a83a30" stroke-width="0.8" fill="none" /><path d="M575 186 L575 238 L579 243 L597 243" stroke="#a83a30" stroke-width="0.8" fill="none" /><path d="M610 186 L610 238 L614 243 L632 243" stroke="#a83a30" stroke-width="0.8" fill="none" /><path d="M644 186 L644 238 L648 243 L666 243" stroke="#a83a30" stroke-width="0.8" fill="none" /><path d="M678 186 L678 238 L682 243 L700 243" stroke="#a83a30" stroke-width="0.8" fill="none" /><path d="M506.2 194.9h0M516 194.9h0M525.8 194.9h0M535.6 194.9h0M555.2 194.9h0M565 194.9h0M574.8 194.9h0M584.6 194.9h0M594.4 194.9h0M604.2 194.9h0M614 194.9h0M623.8 194.9h0M633.6 194.9h0M643.4 194.9h0M653.2 194.9h0M663 194.9h0M672.8 194.9h0M682.6 194.9h0M692.4 194.9h0M702.2 194.9h0M712 194.9h0M751.2 194.9h0M506.2 204.7h0M516 204.7h0M525.8 204.7h0M535.6 204.7h0M555.2 204.7h0M565 204.7h0M574.8 204.7h0M584.6 204.7h0M594.4 204.7h0M604.2 204.7h0M614 204.7h0M623.8 204.7h0M633.6 204.7h0M643.4 204.7h0M653.2 204.7h0M663 204.7h0M672.8 204.7h0M682.6 204.7h0M692.4 204.7h0M702.2 204.7h0M712 204.7h0M741.4 204.7h0M751.2 204.7h0M506.2 214.5h0M516 214.5h0M525.8 214.5h0M535.6 214.5h0M731.6 214.5h0M741.4 214.5h0M751.2 214.5h0M506.2 224.3h0M516 224.3h0M525.8 224.3h0M535.6 224.3h0M545.4 224.3h0M741.4 224.3h0M751.2 224.3h0M506.2 234.1h0M516 234.1h0M525.8 234.1h0M535.6 234.1h0M545.4 234.1h0M721.8 234.1h0M731.6 234.1h0M741.4 234.1h0M751.2 234.1h0M506.2 243.9h0M516 243.9h0M525.8 243.9h0M535.6 243.9h0M545.4 243.9h0M555.2 243.9h0M565 243.9h0M574.8 243.9h0M584.6 243.9h0M594.4 243.9h0M604.2 243.9h0M614 243.9h0M623.8 243.9h0M633.6 243.9h0M643.4 243.9h0M653.2 243.9h0M663 243.9h0M672.8 243.9h0M682.6 243.9h0M692.4 243.9h0M702.2 243.9h0M721.8 243.9h0M731.6 243.9h0M741.4 243.9h0M751.2 243.9h0M506.2 253.7h0M516 253.7h0M525.8 253.7h0M535.6 253.7h0M545.4 253.7h0M555.2 253.7h0M574.8 253.7h0M584.6 253.7h0M594.4 253.7h0M614 253.7h0M623.8 253.7h0M633.6 253.7h0M653.2 253.7h0M663 253.7h0M672.8 253.7h0M682.6 253.7h0M692.4 253.7h0M702.2 253.7h0M731.6 253.7h0M741.4 253.7h0M751.2 253.7h0M506.2 263.5h0M516 263.5h0M525.8 263.5h0M535.6 263.5h0M731.6 263.5h0M741.4 263.5h0M751.2 263.5h0M506.2 273.3h0M516 273.3h0M525.8 273.3h0M535.6 273.3h0M731.6 273.3h0M751.2 273.3h0M506.2 283.1h0M516 283.1h0M525.8 283.1h0M535.6 283.1h0M545.4 283.1h0M555.2 283.1h0M731.6 283.1h0M741.4 283.1h0M751.2 283.1h0M506.2 292.9h0M516 292.9h0M525.8 292.9h0M535.6 292.9h0M584.6 292.9h0M594.4 292.9h0M604.2 292.9h0M614 292.9h0M623.8 292.9h0M633.6 292.9h0M643.4 292.9h0M653.2 292.9h0M663 292.9h0M672.8 292.9h0M731.6 292.9h0M741.4 292.9h0M751.2 292.9h0M506.2 302.7h0M516 302.7h0M525.8 302.7h0M535.6 302.7h0M584.6 302.7h0M594.4 302.7h0M604.2 302.7h0M614 302.7h0M623.8 302.7h0M633.6 302.7h0M643.4 302.7h0M653.2 302.7h0M663 302.7h0M672.8 302.7h0M731.6 302.7h0M741.4 302.7h0M751.2 302.7h0M525.8 312.5h0M535.6 312.5h0M584.6 312.5h0M594.4 312.5h0M604.2 312.5h0M614 312.5h0M623.8 312.5h0M633.6 312.5h0M643.4 312.5h0M653.2 312.5h0M663 312.5h0M672.8 312.5h0M731.6 312.5h0M584.6 322.3h0M594.4 322.3h0M604.2 322.3h0M614 322.3h0M623.8 322.3h0M633.6 322.3h0M643.4 322.3h0M653.2 322.3h0M663 322.3h0M672.8 322.3h0M584.6 332.1h0M594.4 332.1h0M604.2 332.1h0M614 332.1h0M623.8 332.1h0M633.6 332.1h0M643.4 332.1h0M653.2 332.1h0M663 332.1h0M672.8 332.1h0M584.6 341.9h0M594.4 341.9h0M604.2 341.9h0M614 341.9h0M623.8 341.9h0M633.6 341.9h0M643.4 341.9h0M653.2 341.9h0M663 341.9h0M672.8 341.9h0M584.6 351.7h0M594.4 351.7h0M623.8 351.7h0M633.6 351.7h0M584.6 361.5h0M594.4 361.5h0M604.2 361.5h0M614 361.5h0M623.8 361.5h0M633.6 361.5h0M535.6 371.3h0M623.8 371.3h0M633.6 371.3h0M721.8 371.3h0M525.8 381.1h0M535.6 381.1h0M623.8 381.1h0M633.6 381.1h0M721.8 381.1h0M525.8 390.9h0M623.8 390.9h0M633.6 390.9h0M731.6 390.9h0M525.8 400.7h0M516 410.5h0M525.8 410.5h0M565 410.5h0M574.8 410.5h0M584.6 410.5h0M594.4 410.5h0M614 410.5h0M643.4 410.5h0M663 410.5h0M672.8 410.5h0M682.6 410.5h0M731.6 410.5h0M525.8 420.3h0M555.2 420.3h0M565 420.3h0M574.8 420.3h0M584.6 420.3h0M594.4 420.3h0M604.2 420.3h0M614 420.3h0M653.2 420.3h0M663 420.3h0M672.8 420.3h0M682.6 420.3h0M712 420.3h0M721.8 420.3h0M731.6 420.3h0M506.2 430.1h0M506.2 439.9h0M751.2 439.9h0" stroke="#d42a32" stroke-width="4.8" stroke-linecap="round" fill="none"/><path d="M516 194.9h0M525.8 194.9h0M535.6 194.9h0M565 194.9h0M604.2 194.9h0M643.4 194.9h0M712 194.9h0M506.2 204.7h0M525.8 204.7h0M535.6 204.7h0M565 204.7h0M584.6 204.7h0M604.2 204.7h0M623.8 204.7h0M643.4 204.7h0M663 204.7h0M682.6 204.7h0M702.2 204.7h0M712 204.7h0M751.2 204.7h0M535.6 214.5h0M545.4 224.3h0M545.4 234.1h0M545.4 243.9h0M565 243.9h0M604.2 243.9h0M643.4 243.9h0M545.4 253.7h0M545.4 283.1h0M555.2 283.1h0M584.6 292.9h0M594.4 292.9h0M604.2 292.9h0M614 292.9h0M623.8 292.9h0M633.6 292.9h0M643.4 292.9h0M653.2 292.9h0M663 292.9h0M672.8 292.9h0M584.6 302.7h0M594.4 302.7h0M604.2 302.7h0M614 302.7h0M623.8 302.7h0M633.6 302.7h0M643.4 302.7h0M653.2 302.7h0M663 302.7h0M672.8 302.7h0M525.8 312.5h0M535.6 312.5h0M584.6 312.5h0M594.4 312.5h0M604.2 312.5h0M614 312.5h0M623.8 312.5h0M633.6 312.5h0M643.4 312.5h0M653.2 312.5h0M663 312.5h0M672.8 312.5h0M731.6 312.5h0M584.6 322.3h0M594.4 322.3h0M604.2 322.3h0M614 322.3h0M623.8 322.3h0M633.6 322.3h0M643.4 322.3h0M653.2 322.3h0M663 322.3h0M672.8 322.3h0M584.6 332.1h0M594.4 332.1h0M604.2 332.1h0M614 332.1h0M623.8 332.1h0M633.6 332.1h0M643.4 332.1h0M653.2 332.1h0M663 332.1h0M672.8 332.1h0M584.6 341.9h0M594.4 341.9h0M604.2 341.9h0M614 341.9h0M623.8 341.9h0M633.6 341.9h0M643.4 341.9h0M653.2 341.9h0M663 341.9h0M672.8 341.9h0M584.6 351.7h0M594.4 351.7h0M623.8 351.7h0M633.6 351.7h0M516 410.5h0" stroke="#f2c118" stroke-width="3" stroke-linecap="round" fill="none"/><path d="M552.6 229.2h5.2M552.6 278.2h5.2M562.4 229.2h5.2M562.4 278.2h5.2M572.2 229.2h5.2M572.2 278.2h5.2M582 229.2h5.2M582 278.2h5.2M591.8 229.2h5.2M591.8 278.2h5.2M601.6 229.2h5.2M601.6 278.2h5.2M611.4 229.2h5.2M611.4 278.2h5.2M621.2 229.2h5.2M621.2 278.2h5.2M631 229.2h5.2M631 278.2h5.2M640.8 229.2h5.2M640.8 278.2h5.2M650.6 229.2h5.2M650.6 278.2h5.2M660.4 229.2h5.2M660.4 278.2h5.2M670.2 229.2h5.2M670.2 278.2h5.2M680 229.2h5.2M680 278.2h5.2M689.8 229.2h5.2M689.8 278.2h5.2M699.6 229.2h5.2M699.6 278.2h5.2" stroke="#c060b0" stroke-width="0.8"/><path d="M721.8 194.9h0M731.6 194.9h0M731.6 204.7h0M565 214.5h0M574.8 214.5h0M584.6 214.5h0M594.4 214.5h0M604.2 214.5h0M614 214.5h0M623.8 214.5h0M633.6 214.5h0M643.4 214.5h0M653.2 214.5h0M663 214.5h0M672.8 214.5h0M682.6 214.5h0M692.4 214.5h0M702.2 214.5h0M712 234.1h0M712 243.9h0M712 253.7h0M721.8 253.7h0M574.8 263.5h0M584.6 263.5h0M594.4 263.5h0M614 263.5h0M623.8 263.5h0M633.6 263.5h0M653.2 263.5h0M663 263.5h0M672.8 263.5h0M682.6 263.5h0M692.4 263.5h0M702.2 263.5h0M712 263.5h0M721.8 263.5h0M712 273.3h0M721.8 273.3h0M741.4 273.3h0M712 283.1h0M702.2 292.9h0M712 292.9h0M702.2 302.7h0M506.2 312.5h0M516 312.5h0M702.2 312.5h0M712 312.5h0M741.4 312.5h0M751.2 312.5h0M506.2 322.3h0M516 322.3h0M702.2 322.3h0M741.4 322.3h0M751.2 322.3h0M506.2 332.1h0M516 332.1h0M545.4 332.1h0M555.2 332.1h0M702.2 332.1h0M741.4 332.1h0M751.2 332.1h0M506.2 341.9h0M516 341.9h0M555.2 341.9h0M702.2 341.9h0M741.4 341.9h0M751.2 341.9h0M506.2 351.7h0M516 351.7h0M555.2 351.7h0M702.2 351.7h0M741.4 351.7h0M751.2 351.7h0M506.2 361.5h0M516 361.5h0M535.6 361.5h0M555.2 361.5h0M702.2 361.5h0M721.8 361.5h0M741.4 361.5h0M751.2 361.5h0M506.2 371.3h0M516 371.3h0M555.2 371.3h0M565 371.3h0M574.8 371.3h0M584.6 371.3h0M594.4 371.3h0M643.4 371.3h0M653.2 371.3h0M663 371.3h0M672.8 371.3h0M682.6 371.3h0M692.4 371.3h0M702.2 371.3h0M741.4 371.3h0M751.2 371.3h0M506.2 381.1h0M516 381.1h0M565 381.1h0M574.8 381.1h0M584.6 381.1h0M594.4 381.1h0M604.2 381.1h0M614 381.1h0M643.4 381.1h0M653.2 381.1h0M663 381.1h0M672.8 381.1h0M682.6 381.1h0M692.4 381.1h0M731.6 381.1h0M741.4 381.1h0M751.2 381.1h0M506.2 390.9h0M516 390.9h0M535.6 390.9h0M545.4 390.9h0M555.2 390.9h0M565 390.9h0M574.8 390.9h0M584.6 390.9h0M594.4 390.9h0M604.2 390.9h0M614 390.9h0M643.4 390.9h0M653.2 390.9h0M663 390.9h0M672.8 390.9h0M682.6 390.9h0M692.4 390.9h0M702.2 390.9h0M712 390.9h0M721.8 390.9h0M741.4 390.9h0M751.2 390.9h0M506.2 400.7h0M516 400.7h0M535.6 400.7h0M545.4 400.7h0M565 400.7h0M574.8 400.7h0M584.6 400.7h0M594.4 400.7h0M604.2 400.7h0M614 400.7h0M623.8 400.7h0M633.6 400.7h0M653.2 400.7h0M663 400.7h0M672.8 400.7h0M682.6 400.7h0M692.4 400.7h0M702.2 400.7h0M712 400.7h0M721.8 400.7h0M731.6 400.7h0M741.4 400.7h0M751.2 400.7h0M506.2 410.5h0M604.2 410.5h0M653.2 410.5h0M712 410.5h0M721.8 410.5h0M741.4 410.5h0M751.2 410.5h0M506.2 420.3h0M516 420.3h0M623.8 420.3h0M633.6 420.3h0M741.4 420.3h0M751.2 420.3h0M516 430.1h0M525.8 430.1h0M535.6 430.1h0M545.4 430.1h0M555.2 430.1h0M565 430.1h0M574.8 430.1h0M584.6 430.1h0M594.4 430.1h0M604.2 430.1h0M614 430.1h0M623.8 430.1h0M633.6 430.1h0M643.4 430.1h0M653.2 430.1h0M663 430.1h0M672.8 430.1h0M682.6 430.1h0M692.4 430.1h0M702.2 430.1h0M712 430.1h0M721.8 430.1h0M731.6 430.1h0M741.4 430.1h0M751.2 430.1h0M516 439.9h0M525.8 439.9h0M535.6 439.9h0M545.4 439.9h0M555.2 439.9h0M565 439.9h0M574.8 439.9h0M584.6 439.9h0M594.4 439.9h0M604.2 439.9h0M614 439.9h0M623.8 439.9h0M633.6 439.9h0M643.4 439.9h0M653.2 439.9h0M663 439.9h0M672.8 439.9h0M682.6 439.9h0M692.4 439.9h0M702.2 439.9h0M712 439.9h0M721.8 439.9h0M731.6 439.9h0M741.4 439.9h0" stroke="#0b0b1e" stroke-width="7.2" stroke-linecap="round" fill="none"/><path d="M721.8 194.9h0M731.6 194.9h0M731.6 204.7h0M565 214.5h0M574.8 214.5h0M584.6 214.5h0M594.4 214.5h0M604.2 214.5h0M614 214.5h0M623.8 214.5h0M633.6 214.5h0M643.4 214.5h0M653.2 214.5h0M663 214.5h0M672.8 214.5h0M682.6 214.5h0M692.4 214.5h0M702.2 214.5h0M712 234.1h0M712 243.9h0M712 253.7h0M721.8 253.7h0M574.8 263.5h0M584.6 263.5h0M594.4 263.5h0M614 263.5h0M623.8 263.5h0M633.6 263.5h0M653.2 263.5h0M663 263.5h0M672.8 263.5h0M682.6 263.5h0M692.4 263.5h0M702.2 263.5h0M712 263.5h0M721.8 263.5h0M712 273.3h0M721.8 273.3h0M741.4 273.3h0M712 283.1h0M702.2 292.9h0M712 292.9h0M702.2 302.7h0M506.2 312.5h0M516 312.5h0M702.2 312.5h0M712 312.5h0M741.4 312.5h0M751.2 312.5h0M506.2 322.3h0M516 322.3h0M702.2 322.3h0M741.4 322.3h0M751.2 322.3h0M506.2 332.1h0M516 332.1h0M545.4 332.1h0M555.2 332.1h0M702.2 332.1h0M741.4 332.1h0M751.2 332.1h0M506.2 341.9h0M516 341.9h0M555.2 341.9h0M702.2 341.9h0M741.4 341.9h0M751.2 341.9h0M506.2 351.7h0M516 351.7h0M555.2 351.7h0M702.2 351.7h0M741.4 351.7h0M751.2 351.7h0M506.2 361.5h0M516 361.5h0M535.6 361.5h0M555.2 361.5h0M702.2 361.5h0M721.8 361.5h0M741.4 361.5h0M751.2 361.5h0M506.2 371.3h0M516 371.3h0M555.2 371.3h0M565 371.3h0M574.8 371.3h0M584.6 371.3h0M594.4 371.3h0M643.4 371.3h0M653.2 371.3h0M663 371.3h0M672.8 371.3h0M682.6 371.3h0M692.4 371.3h0M702.2 371.3h0M741.4 371.3h0M751.2 371.3h0M506.2 381.1h0M516 381.1h0M565 381.1h0M574.8 381.1h0M584.6 381.1h0M594.4 381.1h0M604.2 381.1h0M614 381.1h0M643.4 381.1h0M653.2 381.1h0M663 381.1h0M672.8 381.1h0M682.6 381.1h0M692.4 381.1h0M731.6 381.1h0M741.4 381.1h0M751.2 381.1h0M506.2 390.9h0M516 390.9h0M535.6 390.9h0M545.4 390.9h0M555.2 390.9h0M565 390.9h0M574.8 390.9h0M584.6 390.9h0M594.4 390.9h0M604.2 390.9h0M614 390.9h0M643.4 390.9h0M653.2 390.9h0M663 390.9h0M672.8 390.9h0M682.6 390.9h0M692.4 390.9h0M702.2 390.9h0M712 390.9h0M721.8 390.9h0M741.4 390.9h0M751.2 390.9h0M506.2 400.7h0M516 400.7h0M535.6 400.7h0M545.4 400.7h0M565 400.7h0M574.8 400.7h0M584.6 400.7h0M594.4 400.7h0M604.2 400.7h0M614 400.7h0M623.8 400.7h0M633.6 400.7h0M653.2 400.7h0M663 400.7h0M672.8 400.7h0M682.6 400.7h0M692.4 400.7h0M702.2 400.7h0M712 400.7h0M721.8 400.7h0M731.6 400.7h0M741.4 400.7h0M751.2 400.7h0M506.2 410.5h0M604.2 410.5h0M653.2 410.5h0M712 410.5h0M721.8 410.5h0M741.4 410.5h0M751.2 410.5h0M506.2 420.3h0M516 420.3h0M623.8 420.3h0M633.6 420.3h0M741.4 420.3h0M751.2 420.3h0M516 430.1h0M525.8 430.1h0M535.6 430.1h0M545.4 430.1h0M555.2 430.1h0M565 430.1h0M574.8 430.1h0M584.6 430.1h0M594.4 430.1h0M604.2 430.1h0M614 430.1h0M623.8 430.1h0M633.6 430.1h0M643.4 430.1h0M653.2 430.1h0M663 430.1h0M672.8 430.1h0M682.6 430.1h0M692.4 430.1h0M702.2 430.1h0M712 430.1h0M721.8 430.1h0M731.6 430.1h0M741.4 430.1h0M751.2 430.1h0M516 439.9h0M525.8 439.9h0M535.6 439.9h0M545.4 439.9h0M555.2 439.9h0M565 439.9h0M574.8 439.9h0M584.6 439.9h0M594.4 439.9h0M604.2 439.9h0M614 439.9h0M623.8 439.9h0M633.6 439.9h0M643.4 439.9h0M653.2 439.9h0M663 439.9h0M672.8 439.9h0M682.6 439.9h0M692.4 439.9h0M702.2 439.9h0M712 439.9h0M721.8 439.9h0M731.6 439.9h0M741.4 439.9h0" stroke="#c0303a" stroke-width="5" stroke-linecap="round" fill="none"/><path d="M721.8 194.9h0M731.6 194.9h0M731.6 204.7h0M565 214.5h0M574.8 214.5h0M584.6 214.5h0M594.4 214.5h0M604.2 214.5h0M614 214.5h0M623.8 214.5h0M633.6 214.5h0M643.4 214.5h0M653.2 214.5h0M663 214.5h0M672.8 214.5h0M682.6 214.5h0M692.4 214.5h0M702.2 214.5h0M712 234.1h0M712 243.9h0M712 253.7h0M721.8 253.7h0M574.8 263.5h0M584.6 263.5h0M594.4 263.5h0M614 263.5h0M623.8 263.5h0M633.6 263.5h0M653.2 263.5h0M663 263.5h0M672.8 263.5h0M682.6 263.5h0M692.4 263.5h0M702.2 263.5h0M712 263.5h0M721.8 263.5h0M712 273.3h0M721.8 273.3h0M741.4 273.3h0M712 283.1h0M702.2 292.9h0M712 292.9h0M702.2 302.7h0M506.2 312.5h0M516 312.5h0M702.2 312.5h0M712 312.5h0M741.4 312.5h0M751.2 312.5h0M506.2 322.3h0M516 322.3h0M702.2 322.3h0M741.4 322.3h0M751.2 322.3h0M506.2 332.1h0M516 332.1h0M545.4 332.1h0M555.2 332.1h0M702.2 332.1h0M741.4 332.1h0M751.2 332.1h0M506.2 341.9h0M516 341.9h0M555.2 341.9h0M702.2 341.9h0M741.4 341.9h0M751.2 341.9h0M506.2 351.7h0M516 351.7h0M555.2 351.7h0M702.2 351.7h0M741.4 351.7h0M751.2 351.7h0M506.2 361.5h0M516 361.5h0M535.6 361.5h0M555.2 361.5h0M702.2 361.5h0M721.8 361.5h0M741.4 361.5h0M751.2 361.5h0M506.2 371.3h0M516 371.3h0M555.2 371.3h0M565 371.3h0M574.8 371.3h0M584.6 371.3h0M594.4 371.3h0M643.4 371.3h0M653.2 371.3h0M663 371.3h0M672.8 371.3h0M682.6 371.3h0M692.4 371.3h0M702.2 371.3h0M741.4 371.3h0M751.2 371.3h0M506.2 381.1h0M516 381.1h0M565 381.1h0M574.8 381.1h0M584.6 381.1h0M594.4 381.1h0M604.2 381.1h0M614 381.1h0M643.4 381.1h0M653.2 381.1h0M663 381.1h0M672.8 381.1h0M682.6 381.1h0M692.4 381.1h0M731.6 381.1h0M741.4 381.1h0M751.2 381.1h0M506.2 390.9h0M516 390.9h0M535.6 390.9h0M545.4 390.9h0M555.2 390.9h0M565 390.9h0M574.8 390.9h0M584.6 390.9h0M594.4 390.9h0M604.2 390.9h0M614 390.9h0M643.4 390.9h0M653.2 390.9h0M663 390.9h0M672.8 390.9h0M682.6 390.9h0M692.4 390.9h0M702.2 390.9h0M712 390.9h0M721.8 390.9h0M741.4 390.9h0M751.2 390.9h0M506.2 400.7h0M516 400.7h0M535.6 400.7h0M545.4 400.7h0M565 400.7h0M574.8 400.7h0M584.6 400.7h0M594.4 400.7h0M604.2 400.7h0M614 400.7h0M623.8 400.7h0M633.6 400.7h0M653.2 400.7h0M663 400.7h0M672.8 400.7h0M682.6 400.7h0M692.4 400.7h0M702.2 400.7h0M712 400.7h0M721.8 400.7h0M731.6 400.7h0M741.4 400.7h0M751.2 400.7h0M506.2 410.5h0M604.2 410.5h0M653.2 410.5h0M712 410.5h0M721.8 410.5h0M741.4 410.5h0M751.2 410.5h0M506.2 420.3h0M516 420.3h0M623.8 420.3h0M633.6 420.3h0M741.4 420.3h0M751.2 420.3h0M516 430.1h0M525.8 430.1h0M535.6 430.1h0M545.4 430.1h0M555.2 430.1h0M565 430.1h0M574.8 430.1h0M584.6 430.1h0M594.4 430.1h0M604.2 430.1h0M614 430.1h0M623.8 430.1h0M633.6 430.1h0M643.4 430.1h0M653.2 430.1h0M663 430.1h0M672.8 430.1h0M682.6 430.1h0M692.4 430.1h0M702.2 430.1h0M712 430.1h0M721.8 430.1h0M731.6 430.1h0M741.4 430.1h0M751.2 430.1h0M516 439.9h0M525.8 439.9h0M535.6 439.9h0M545.4 439.9h0M555.2 439.9h0M565 439.9h0M574.8 439.9h0M584.6 439.9h0M594.4 439.9h0M604.2 439.9h0M614 439.9h0M623.8 439.9h0M633.6 439.9h0M643.4 439.9h0M653.2 439.9h0M663 439.9h0M672.8 439.9h0M682.6 439.9h0M692.4 439.9h0M702.2 439.9h0M712 439.9h0M721.8 439.9h0M731.6 439.9h0M741.4 439.9h0" stroke="#f2c118" stroke-width="3.1" stroke-linecap="round" fill="none"/><path d="M545.4 194.9h0M741.4 194.9h0M545.4 204.7h0M721.8 204.7h0M545.4 214.5h0M555.2 214.5h0M712 214.5h0M721.8 214.5h0M555.2 224.3h0M565 224.3h0M574.8 224.3h0M584.6 224.3h0M594.4 224.3h0M604.2 224.3h0M614 224.3h0M623.8 224.3h0M633.6 224.3h0M643.4 224.3h0M653.2 224.3h0M663 224.3h0M672.8 224.3h0M682.6 224.3h0M692.4 224.3h0M702.2 224.3h0M712 224.3h0M721.8 224.3h0M731.6 224.3h0M555.2 234.1h0M565 234.1h0M574.8 234.1h0M584.6 234.1h0M594.4 234.1h0M604.2 234.1h0M614 234.1h0M623.8 234.1h0M633.6 234.1h0M643.4 234.1h0M653.2 234.1h0M663 234.1h0M672.8 234.1h0M682.6 234.1h0M692.4 234.1h0M702.2 234.1h0M565 253.7h0M604.2 253.7h0M643.4 253.7h0M545.4 263.5h0M555.2 263.5h0M565 263.5h0M604.2 263.5h0M643.4 263.5h0M545.4 273.3h0M555.2 273.3h0M565 273.3h0M574.8 273.3h0M584.6 273.3h0M594.4 273.3h0M604.2 273.3h0M614 273.3h0M623.8 273.3h0M633.6 273.3h0M643.4 273.3h0M653.2 273.3h0M663 273.3h0M672.8 273.3h0M682.6 273.3h0M692.4 273.3h0M702.2 273.3h0M565 283.1h0M574.8 283.1h0M584.6 283.1h0M594.4 283.1h0M604.2 283.1h0M614 283.1h0M623.8 283.1h0M633.6 283.1h0M643.4 283.1h0M653.2 283.1h0M663 283.1h0M672.8 283.1h0M682.6 283.1h0M692.4 283.1h0M702.2 283.1h0M545.4 292.9h0M555.2 292.9h0M565 292.9h0M574.8 292.9h0M682.6 292.9h0M692.4 292.9h0M545.4 302.7h0M555.2 302.7h0M565 302.7h0M574.8 302.7h0M682.6 302.7h0M692.4 302.7h0M545.4 312.5h0M555.2 312.5h0M565 312.5h0M574.8 312.5h0M682.6 312.5h0M692.4 312.5h0M525.8 322.3h0M535.6 322.3h0M545.4 322.3h0M555.2 322.3h0M565 322.3h0M574.8 322.3h0M682.6 322.3h0M692.4 322.3h0M712 322.3h0M721.8 322.3h0M731.6 322.3h0M525.8 332.1h0M535.6 332.1h0M565 332.1h0M574.8 332.1h0M682.6 332.1h0M692.4 332.1h0M712 332.1h0M721.8 332.1h0M731.6 332.1h0M525.8 341.9h0M535.6 341.9h0M545.4 341.9h0M565 341.9h0M574.8 341.9h0M682.6 341.9h0M692.4 341.9h0M712 341.9h0M721.8 341.9h0M731.6 341.9h0M525.8 351.7h0M535.6 351.7h0M545.4 351.7h0M565 351.7h0M574.8 351.7h0M682.6 351.7h0M692.4 351.7h0M712 351.7h0M721.8 351.7h0M731.6 351.7h0M525.8 361.5h0M545.4 361.5h0M565 361.5h0M574.8 361.5h0M682.6 361.5h0M692.4 361.5h0M712 361.5h0M731.6 361.5h0M525.8 371.3h0M545.4 371.3h0M712 371.3h0M731.6 371.3h0M545.4 381.1h0M555.2 381.1h0M702.2 381.1h0M712 381.1h0M555.2 400.7h0M535.6 410.5h0M545.4 410.5h0M555.2 410.5h0M623.8 410.5h0M633.6 410.5h0M535.6 420.3h0M545.4 420.3h0M569.9 199.8h0M569.9 209.6h0M579.7 199.8h0M579.7 209.6h0M589.5 199.8h0M589.5 209.6h0M599.3 199.8h0M599.3 209.6h0M609.1 199.8h0M609.1 209.6h0M618.9 199.8h0M618.9 209.6h0M628.7 199.8h0M628.7 209.6h0M638.5 199.8h0M638.5 209.6h0M648.3 199.8h0M648.3 209.6h0M658.1 199.8h0M658.1 209.6h0M667.9 199.8h0M667.9 209.6h0M677.7 199.8h0M677.7 209.6h0M687.5 199.8h0M687.5 209.6h0M697.3 199.8h0M697.3 209.6h0M707.1 199.8h0M707.1 209.6h0M520.9 221.4h0M520.9 234.1h0M511.1 247.8h0M530.7 247.8h0M511.1 263.5h0M530.7 263.5h0M511.1 282.1h0M530.7 282.1h0M511.1 295.8h0M530.7 295.8h0M579.7 258.6h0M589.5 258.6h0M618.9 258.6h0M628.7 258.6h0M716.9 239h0M726.7 239h0M697.3 248.8h0M707.1 248.8h0M716.9 248.8h0M726.7 248.8h0M697.3 258.6h0M707.1 258.6h0M716.9 258.6h0M726.7 258.6h0M716.9 268.4h0M726.7 268.4h0M716.9 278.2h0M726.7 278.2h0M716.9 288h0M726.7 288h0M716.9 297.8h0M726.7 297.8h0M707.1 297.8h0M707.1 307.6h0M716.9 307.6h0M726.7 307.6h0M716.9 315.4h0M726.7 315.4h0M736.5 204.7h0M746.3 204.7h0M741.4 188h0M520.9 386h0M530.7 386h0M520.9 395.8h0M530.7 395.8h0M560.1 366.4h0M560.1 376.2h0M579.7 366.4h0M589.5 366.4h0M579.7 376.2h0M589.5 376.2h0M579.7 386h0M589.5 386h0M599.3 386h0M609.1 386h0M579.7 395.8h0M589.5 395.8h0M599.3 395.8h0M609.1 395.8h0M569.9 405.6h0M579.7 405.6h0M589.5 405.6h0M609.1 405.6h0M569.9 415.4h0M579.7 415.4h0M589.5 415.4h0M599.3 415.4h0M609.1 415.4h0M569.9 425.2h0M579.7 425.2h0M599.3 425.2h0M609.1 425.2h0M618.9 425.2h0M628.7 376.2h0M628.7 386h0M658.1 376.2h0M667.9 376.2h0M677.7 376.2h0M687.5 376.2h0M658.1 386h0M667.9 386h0M677.7 386h0M687.5 386h0M658.1 395.8h0M677.7 395.8h0M687.5 395.8h0M707.1 395.8h0M716.9 395.8h0M726.7 395.8h0M736.5 395.8h0M726.7 386h0M736.5 386h0M658.1 405.6h0M667.9 405.6h0M677.7 405.6h0M726.7 405.6h0M736.5 405.6h0M658.1 415.4h0M667.9 415.4h0M677.7 415.4h0M716.9 415.4h0M726.7 415.4h0M658.1 425.2h0M716.9 425.2h0M726.7 425.2h0M746.3 425.2h0M746.3 435h0" stroke="#3292b8" stroke-width="7.3999999999999995" stroke-linecap="square" fill="none"/><path d="M545.4 194.9h0M741.4 194.9h0M545.4 204.7h0M721.8 204.7h0M545.4 214.5h0M555.2 214.5h0M712 214.5h0M721.8 214.5h0M555.2 224.3h0M565 224.3h0M574.8 224.3h0M584.6 224.3h0M594.4 224.3h0M604.2 224.3h0M614 224.3h0M623.8 224.3h0M633.6 224.3h0M643.4 224.3h0M653.2 224.3h0M663 224.3h0M672.8 224.3h0M682.6 224.3h0M692.4 224.3h0M702.2 224.3h0M712 224.3h0M721.8 224.3h0M731.6 224.3h0M555.2 234.1h0M565 234.1h0M574.8 234.1h0M584.6 234.1h0M594.4 234.1h0M604.2 234.1h0M614 234.1h0M623.8 234.1h0M633.6 234.1h0M643.4 234.1h0M653.2 234.1h0M663 234.1h0M672.8 234.1h0M682.6 234.1h0M692.4 234.1h0M702.2 234.1h0M565 253.7h0M604.2 253.7h0M643.4 253.7h0M545.4 263.5h0M555.2 263.5h0M565 263.5h0M604.2 263.5h0M643.4 263.5h0M545.4 273.3h0M555.2 273.3h0M565 273.3h0M574.8 273.3h0M584.6 273.3h0M594.4 273.3h0M604.2 273.3h0M614 273.3h0M623.8 273.3h0M633.6 273.3h0M643.4 273.3h0M653.2 273.3h0M663 273.3h0M672.8 273.3h0M682.6 273.3h0M692.4 273.3h0M702.2 273.3h0M565 283.1h0M574.8 283.1h0M584.6 283.1h0M594.4 283.1h0M604.2 283.1h0M614 283.1h0M623.8 283.1h0M633.6 283.1h0M643.4 283.1h0M653.2 283.1h0M663 283.1h0M672.8 283.1h0M682.6 283.1h0M692.4 283.1h0M702.2 283.1h0M545.4 292.9h0M555.2 292.9h0M565 292.9h0M574.8 292.9h0M682.6 292.9h0M692.4 292.9h0M545.4 302.7h0M555.2 302.7h0M565 302.7h0M574.8 302.7h0M682.6 302.7h0M692.4 302.7h0M545.4 312.5h0M555.2 312.5h0M565 312.5h0M574.8 312.5h0M682.6 312.5h0M692.4 312.5h0M525.8 322.3h0M535.6 322.3h0M545.4 322.3h0M555.2 322.3h0M565 322.3h0M574.8 322.3h0M682.6 322.3h0M692.4 322.3h0M712 322.3h0M721.8 322.3h0M731.6 322.3h0M525.8 332.1h0M535.6 332.1h0M565 332.1h0M574.8 332.1h0M682.6 332.1h0M692.4 332.1h0M712 332.1h0M721.8 332.1h0M731.6 332.1h0M525.8 341.9h0M535.6 341.9h0M545.4 341.9h0M565 341.9h0M574.8 341.9h0M682.6 341.9h0M692.4 341.9h0M712 341.9h0M721.8 341.9h0M731.6 341.9h0M525.8 351.7h0M535.6 351.7h0M545.4 351.7h0M565 351.7h0M574.8 351.7h0M682.6 351.7h0M692.4 351.7h0M712 351.7h0M721.8 351.7h0M731.6 351.7h0M525.8 361.5h0M545.4 361.5h0M565 361.5h0M574.8 361.5h0M682.6 361.5h0M692.4 361.5h0M712 361.5h0M731.6 361.5h0M525.8 371.3h0M545.4 371.3h0M712 371.3h0M731.6 371.3h0M545.4 381.1h0M555.2 381.1h0M702.2 381.1h0M712 381.1h0M555.2 400.7h0M535.6 410.5h0M545.4 410.5h0M555.2 410.5h0M623.8 410.5h0M633.6 410.5h0M535.6 420.3h0M545.4 420.3h0M569.9 199.8h0M569.9 209.6h0M579.7 199.8h0M579.7 209.6h0M589.5 199.8h0M589.5 209.6h0M599.3 199.8h0M599.3 209.6h0M609.1 199.8h0M609.1 209.6h0M618.9 199.8h0M618.9 209.6h0M628.7 199.8h0M628.7 209.6h0M638.5 199.8h0M638.5 209.6h0M648.3 199.8h0M648.3 209.6h0M658.1 199.8h0M658.1 209.6h0M667.9 199.8h0M667.9 209.6h0M677.7 199.8h0M677.7 209.6h0M687.5 199.8h0M687.5 209.6h0M697.3 199.8h0M697.3 209.6h0M707.1 199.8h0M707.1 209.6h0M520.9 221.4h0M520.9 234.1h0M511.1 247.8h0M530.7 247.8h0M511.1 263.5h0M530.7 263.5h0M511.1 282.1h0M530.7 282.1h0M511.1 295.8h0M530.7 295.8h0M579.7 258.6h0M589.5 258.6h0M618.9 258.6h0M628.7 258.6h0M716.9 239h0M726.7 239h0M697.3 248.8h0M707.1 248.8h0M716.9 248.8h0M726.7 248.8h0M697.3 258.6h0M707.1 258.6h0M716.9 258.6h0M726.7 258.6h0M716.9 268.4h0M726.7 268.4h0M716.9 278.2h0M726.7 278.2h0M716.9 288h0M726.7 288h0M716.9 297.8h0M726.7 297.8h0M707.1 297.8h0M707.1 307.6h0M716.9 307.6h0M726.7 307.6h0M716.9 315.4h0M726.7 315.4h0M736.5 204.7h0M746.3 204.7h0M741.4 188h0M520.9 386h0M530.7 386h0M520.9 395.8h0M530.7 395.8h0M560.1 366.4h0M560.1 376.2h0M579.7 366.4h0M589.5 366.4h0M579.7 376.2h0M589.5 376.2h0M579.7 386h0M589.5 386h0M599.3 386h0M609.1 386h0M579.7 395.8h0M589.5 395.8h0M599.3 395.8h0M609.1 395.8h0M569.9 405.6h0M579.7 405.6h0M589.5 405.6h0M609.1 405.6h0M569.9 415.4h0M579.7 415.4h0M589.5 415.4h0M599.3 415.4h0M609.1 415.4h0M569.9 425.2h0M579.7 425.2h0M599.3 425.2h0M609.1 425.2h0M618.9 425.2h0M628.7 376.2h0M628.7 386h0M658.1 376.2h0M667.9 376.2h0M677.7 376.2h0M687.5 376.2h0M658.1 386h0M667.9 386h0M677.7 386h0M687.5 386h0M658.1 395.8h0M677.7 395.8h0M687.5 395.8h0M707.1 395.8h0M716.9 395.8h0M726.7 395.8h0M736.5 395.8h0M726.7 386h0M736.5 386h0M658.1 405.6h0M667.9 405.6h0M677.7 405.6h0M726.7 405.6h0M736.5 405.6h0M658.1 415.4h0M667.9 415.4h0M677.7 415.4h0M716.9 415.4h0M726.7 415.4h0M658.1 425.2h0M716.9 425.2h0M726.7 425.2h0M746.3 425.2h0M746.3 435h0" stroke="#4a7ec4" stroke-width="6.199999999999999" stroke-linecap="square" fill="none"/><path d="M545.4 194.9h0M741.4 194.9h0M545.4 204.7h0M721.8 204.7h0M545.4 214.5h0M555.2 214.5h0M712 214.5h0M721.8 214.5h0M555.2 224.3h0M565 224.3h0M574.8 224.3h0M584.6 224.3h0M594.4 224.3h0M604.2 224.3h0M614 224.3h0M623.8 224.3h0M633.6 224.3h0M643.4 224.3h0M653.2 224.3h0M663 224.3h0M672.8 224.3h0M682.6 224.3h0M692.4 224.3h0M702.2 224.3h0M712 224.3h0M721.8 224.3h0M731.6 224.3h0M555.2 234.1h0M565 234.1h0M574.8 234.1h0M584.6 234.1h0M594.4 234.1h0M604.2 234.1h0M614 234.1h0M623.8 234.1h0M633.6 234.1h0M643.4 234.1h0M653.2 234.1h0M663 234.1h0M672.8 234.1h0M682.6 234.1h0M692.4 234.1h0M702.2 234.1h0M565 253.7h0M604.2 253.7h0M643.4 253.7h0M545.4 263.5h0M555.2 263.5h0M565 263.5h0M604.2 263.5h0M643.4 263.5h0M545.4 273.3h0M555.2 273.3h0M565 273.3h0M574.8 273.3h0M584.6 273.3h0M594.4 273.3h0M604.2 273.3h0M614 273.3h0M623.8 273.3h0M633.6 273.3h0M643.4 273.3h0M653.2 273.3h0M663 273.3h0M672.8 273.3h0M682.6 273.3h0M692.4 273.3h0M702.2 273.3h0M565 283.1h0M574.8 283.1h0M584.6 283.1h0M594.4 283.1h0M604.2 283.1h0M614 283.1h0M623.8 283.1h0M633.6 283.1h0M643.4 283.1h0M653.2 283.1h0M663 283.1h0M672.8 283.1h0M682.6 283.1h0M692.4 283.1h0M702.2 283.1h0M545.4 292.9h0M555.2 292.9h0M565 292.9h0M574.8 292.9h0M682.6 292.9h0M692.4 292.9h0M545.4 302.7h0M555.2 302.7h0M565 302.7h0M574.8 302.7h0M682.6 302.7h0M692.4 302.7h0M545.4 312.5h0M555.2 312.5h0M565 312.5h0M574.8 312.5h0M682.6 312.5h0M692.4 312.5h0M525.8 322.3h0M535.6 322.3h0M545.4 322.3h0M555.2 322.3h0M565 322.3h0M574.8 322.3h0M682.6 322.3h0M692.4 322.3h0M712 322.3h0M721.8 322.3h0M731.6 322.3h0M525.8 332.1h0M535.6 332.1h0M565 332.1h0M574.8 332.1h0M682.6 332.1h0M692.4 332.1h0M712 332.1h0M721.8 332.1h0M731.6 332.1h0M525.8 341.9h0M535.6 341.9h0M545.4 341.9h0M565 341.9h0M574.8 341.9h0M682.6 341.9h0M692.4 341.9h0M712 341.9h0M721.8 341.9h0M731.6 341.9h0M525.8 351.7h0M535.6 351.7h0M545.4 351.7h0M565 351.7h0M574.8 351.7h0M682.6 351.7h0M692.4 351.7h0M712 351.7h0M721.8 351.7h0M731.6 351.7h0M525.8 361.5h0M545.4 361.5h0M565 361.5h0M574.8 361.5h0M682.6 361.5h0M692.4 361.5h0M712 361.5h0M731.6 361.5h0M525.8 371.3h0M545.4 371.3h0M712 371.3h0M731.6 371.3h0M545.4 381.1h0M555.2 381.1h0M702.2 381.1h0M712 381.1h0M555.2 400.7h0M535.6 410.5h0M545.4 410.5h0M555.2 410.5h0M623.8 410.5h0M633.6 410.5h0M535.6 420.3h0M545.4 420.3h0M569.9 199.8h0M569.9 209.6h0M579.7 199.8h0M579.7 209.6h0M589.5 199.8h0M589.5 209.6h0M599.3 199.8h0M599.3 209.6h0M609.1 199.8h0M609.1 209.6h0M618.9 199.8h0M618.9 209.6h0M628.7 199.8h0M628.7 209.6h0M638.5 199.8h0M638.5 209.6h0M648.3 199.8h0M648.3 209.6h0M658.1 199.8h0M658.1 209.6h0M667.9 199.8h0M667.9 209.6h0M677.7 199.8h0M677.7 209.6h0M687.5 199.8h0M687.5 209.6h0M697.3 199.8h0M697.3 209.6h0M707.1 199.8h0M707.1 209.6h0M520.9 221.4h0M520.9 234.1h0M511.1 247.8h0M530.7 247.8h0M511.1 263.5h0M530.7 263.5h0M511.1 282.1h0M530.7 282.1h0M511.1 295.8h0M530.7 295.8h0M579.7 258.6h0M589.5 258.6h0M618.9 258.6h0M628.7 258.6h0M716.9 239h0M726.7 239h0M697.3 248.8h0M707.1 248.8h0M716.9 248.8h0M726.7 248.8h0M697.3 258.6h0M707.1 258.6h0M716.9 258.6h0M726.7 258.6h0M716.9 268.4h0M726.7 268.4h0M716.9 278.2h0M726.7 278.2h0M716.9 288h0M726.7 288h0M716.9 297.8h0M726.7 297.8h0M707.1 297.8h0M707.1 307.6h0M716.9 307.6h0M726.7 307.6h0M716.9 315.4h0M726.7 315.4h0M736.5 204.7h0M746.3 204.7h0M741.4 188h0M520.9 386h0M530.7 386h0M520.9 395.8h0M530.7 395.8h0M560.1 366.4h0M560.1 376.2h0M579.7 366.4h0M589.5 366.4h0M579.7 376.2h0M589.5 376.2h0M579.7 386h0M589.5 386h0M599.3 386h0M609.1 386h0M579.7 395.8h0M589.5 395.8h0M599.3 395.8h0M609.1 395.8h0M569.9 405.6h0M579.7 405.6h0M589.5 405.6h0M609.1 405.6h0M569.9 415.4h0M579.7 415.4h0M589.5 415.4h0M599.3 415.4h0M609.1 415.4h0M569.9 425.2h0M579.7 425.2h0M599.3 425.2h0M609.1 425.2h0M618.9 425.2h0M628.7 376.2h0M628.7 386h0M658.1 376.2h0M667.9 376.2h0M677.7 376.2h0M687.5 376.2h0M658.1 386h0M667.9 386h0M677.7 386h0M687.5 386h0M658.1 395.8h0M677.7 395.8h0M687.5 395.8h0M707.1 395.8h0M716.9 395.8h0M726.7 395.8h0M736.5 395.8h0M726.7 386h0M736.5 386h0M658.1 405.6h0M667.9 405.6h0M677.7 405.6h0M726.7 405.6h0M736.5 405.6h0M658.1 415.4h0M667.9 415.4h0M677.7 415.4h0M716.9 415.4h0M726.7 415.4h0M658.1 425.2h0M716.9 425.2h0M726.7 425.2h0M746.3 425.2h0M746.3 435h0" stroke="#f2c118" stroke-width="3" stroke-linecap="round" fill="none"/><path d="M604.2 353.7h0M614 353.7h0M643.4 352.7h0M653.2 352.7h0M663 352.7h0M672.8 352.7h0M643.4 367.4h0M653.2 367.4h0M663 367.4h0M672.8 367.4h0M604.2 368.4h0M614 368.4h0M643.4 402.7h0M643.4 419.3h0M692.4 405.6h0M702.2 405.6h0M692.4 421.3h0M702.2 421.3h0M628.7 377.2h0M628.7 391.9h0" stroke="#3292b8" stroke-width="9.8" stroke-linecap="square" fill="none"/><path d="M604.2 353.7h0M614 353.7h0M643.4 352.7h0M653.2 352.7h0M663 352.7h0M672.8 352.7h0M643.4 367.4h0M653.2 367.4h0M663 367.4h0M672.8 367.4h0M604.2 368.4h0M614 368.4h0M643.4 402.7h0M643.4 419.3h0M692.4 405.6h0M702.2 405.6h0M692.4 421.3h0M702.2 421.3h0M628.7 377.2h0M628.7 391.9h0" stroke="#4a7ec4" stroke-width="8.6" stroke-linecap="square" fill="none"/><path d="M604.2 353.7h0M614 353.7h0M643.4 352.7h0M653.2 352.7h0M663 352.7h0M672.8 352.7h0M643.4 367.4h0M653.2 367.4h0M663 367.4h0M672.8 367.4h0M604.2 368.4h0M614 368.4h0M643.4 402.7h0M643.4 419.3h0M692.4 405.6h0M702.2 405.6h0M692.4 421.3h0M702.2 421.3h0M628.7 377.2h0M628.7 391.9h0" stroke="#f2c118" stroke-width="3" stroke-linecap="round" fill="none"/><rect x="496" y="185" width="265.6" height="265" fill="none" stroke="#d6d6d2" stroke-width="1.6"/><path d="M749 449 L761 438" stroke="#f2eda1" stroke-width="1.6" fill="none" /><path d="M625.1 317.5 H632.1 M628.6 314 V321" stroke="#d070c8" stroke-width="0.8"/><text x="279.5" y="227.1" font-size="10.7" fill="#f2eda1" text-anchor="start" textLength="31.6" lengthAdjust="spacingAndGlyphs" font-family="Liberation Sans, sans-serif" >A1V0_</text><text x="333.6" y="227.1" font-size="10.7" fill="#f2eda1" text-anchor="start" textLength="31.9" lengthAdjust="spacingAndGlyphs" font-family="Liberation Sans, sans-serif" >A2V5_</text><text x="387.2" y="227.1" font-size="10.7" fill="#f2eda1" text-anchor="start" textLength="32.3" lengthAdjust="spacingAndGlyphs" font-family="Liberation Sans, sans-serif" >A1V0_</text><text x="441.3" y="227.1" font-size="10.7" fill="#f2eda1" text-anchor="start" textLength="31.9" lengthAdjust="spacingAndGlyphs" font-family="Liberation Sans, sans-serif" >A1V0_</text><text x="284.7" y="238.5" font-size="10.7" fill="#f2eda1" text-anchor="start" textLength="19.8" lengthAdjust="spacingAndGlyphs" font-family="Liberation Sans, sans-serif" >VSC</text><text x="338.8" y="238.5" font-size="10.7" fill="#f2eda1" text-anchor="start" textLength="19.8" lengthAdjust="spacingAndGlyphs" font-family="Liberation Sans, sans-serif" >VSC</text><text x="379.5" y="238.5" font-size="10.7" fill="#f2eda1" text-anchor="start" textLength="46.8" lengthAdjust="spacingAndGlyphs" font-family="Liberation Sans, sans-serif" >SERDES1</text><text x="433.6" y="238.5" font-size="10.7" fill="#f2eda1" text-anchor="start" textLength="46.9" lengthAdjust="spacingAndGlyphs" font-family="Liberation Sans, sans-serif" >SERDES2</text><text x="418.4" y="252.9" font-size="10.7" fill="#f2eda1" text-anchor="start" textLength="27.7" lengthAdjust="spacingAndGlyphs" font-family="Liberation Sans, sans-serif" >C485</text><text x="312.8" y="301.9" font-size="10.7" fill="#f2eda1" text-anchor="start" textLength="18.7" lengthAdjust="spacingAndGlyphs" font-family="Liberation Sans, sans-serif" >2V5</text><text x="363.8" y="301.9" font-size="10.7" fill="#f2eda1" text-anchor="start" textLength="18.8" lengthAdjust="spacingAndGlyphs" font-family="Liberation Sans, sans-serif" >3V3</text><text x="454" y="301.9" font-size="10.7" fill="#f2eda1" text-anchor="start" textLength="20.3" lengthAdjust="spacingAndGlyphs" font-family="Liberation Sans, sans-serif" >U62</text><text x="316" y="365.9" font-size="10.7" fill="#f2eda1" text-anchor="start" textLength="22.5" lengthAdjust="spacingAndGlyphs" font-family="Liberation Sans, sans-serif" >GND</text><text x="795.6" y="207.9" font-size="10.7" fill="#f2eda1" text-anchor="start" textLength="27.4" lengthAdjust="spacingAndGlyphs" font-family="Liberation Sans, sans-serif" >C453</text><text x="833.5" y="203.9" font-size="10.7" fill="#f2eda1" text-anchor="start" textLength="21.5" lengthAdjust="spacingAndGlyphs" font-family="Liberation Sans, sans-serif" >U60</text><text x="796.5" y="237.9" font-size="10.7" fill="#f2eda1" text-anchor="start" textLength="27.5" lengthAdjust="spacingAndGlyphs" font-family="Liberation Sans, sans-serif" >C454</text><text x="801" y="252.5" font-size="10.7" fill="#f2eda1" text-anchor="start" textLength="27.5" lengthAdjust="spacingAndGlyphs" font-family="Liberation Sans, sans-serif" >C452</text><text x="776" y="336.9" font-size="10.7" fill="#f2eda1" text-anchor="start" textLength="27.5" lengthAdjust="spacingAndGlyphs" font-family="Liberation Sans, sans-serif" >C488</text><text x="317.5" y="146" font-size="10.6" fill="#f2eda1" text-anchor="middle" font-family="Liberation Sans, sans-serif" transform="rotate(90 317.5 146)">L3 C159</text><text x="371.5" y="141" font-size="10.6" fill="#f2eda1" text-anchor="middle" font-family="Liberation Sans, sans-serif" transform="rotate(90 371.5 141)">L1 C78</text><text x="479.5" y="146" font-size="10.6" fill="#f2eda1" text-anchor="middle" font-family="Liberation Sans, sans-serif" transform="rotate(90 479.5 146)">L4 C153</text><text x="299.5" y="108.6" font-size="10.6" fill="#f2eda1" text-anchor="middle" font-family="Liberation Sans, sans-serif" transform="rotate(180 299.5 105.5)">C83</text><text x="272.5" y="142" font-size="10.6" fill="#f2eda1" text-anchor="middle" font-family="Liberation Sans, sans-serif" >2</text><text x="267.6" y="275" font-size="10.7" fill="#f2eda1" text-anchor="start" textLength="33.3" lengthAdjust="spacingAndGlyphs" font-family="Liberation Sans, sans-serif" transform="rotate(90 267.6 275)">BUY 0</text><text x="267.6" y="322.7" font-size="10.7" fill="#f2eda1" text-anchor="start" textLength="18.3" lengthAdjust="spacingAndGlyphs" font-family="Liberation Sans, sans-serif" transform="rotate(90 267.6 322.7)">TAG</text><text x="267.6" y="345.8" font-size="10.7" fill="#f2eda1" text-anchor="start" textLength="54.8" lengthAdjust="spacingAndGlyphs" font-family="Liberation Sans, sans-serif" transform="rotate(90 267.6 345.8)">LVCMOS25</text><text x="869" y="109" font-size="10.6" fill="#f2eda1" text-anchor="middle" font-family="Liberation Sans, sans-serif" >REGCER0</text><text x="932.5" y="109" font-size="10.6" fill="#f2eda1" text-anchor="middle" font-family="Liberation Sans, sans-serif" >REGCER1</text><text x="726.5" y="109" font-size="10.6" fill="#f2eda1" text-anchor="middle" font-family="Liberation Sans, sans-serif" >C55</text><text x="-692" y="178.8" font-size="10.4" fill="#ffffff" text-anchor="middle" font-family="Liberation Sans, sans-serif" transform="scale(-1 1)">R101</text><text x="-761.5" y="178.8" font-size="10.4" fill="#e4b4a8" text-anchor="middle" font-family="Liberation Sans, sans-serif" transform="scale(-1 1)">R100</text><text x="-997" y="228.5" font-size="8.6" fill="#e8c8c0" text-anchor="middle" font-family="Liberation Sans, sans-serif" transform="scale(-1 1)">R21</text><text x="-524" y="344.7" font-size="10.4" fill="#e6c2b4" text-anchor="start" textLength="26" lengthAdjust="spacingAndGlyphs" font-family="Liberation Sans, sans-serif" transform="scale(-1 1)" opacity="0.8">C213</text><text x="-523" y="356.1" font-size="10.4" fill="#e6c2b4" text-anchor="start" textLength="20" lengthAdjust="spacingAndGlyphs" font-family="Liberation Sans, sans-serif" transform="scale(-1 1)" opacity="0.8">R58</text><text x="-530.8" y="413.7" font-size="10.4" fill="#e6c2b4" text-anchor="start" textLength="20" lengthAdjust="spacingAndGlyphs" font-family="Liberation Sans, sans-serif" transform="scale(-1 1)" opacity="0.8">R59</text><text x="-530.8" y="424.7" font-size="10.4" fill="#e6c2b4" text-anchor="start" textLength="20" lengthAdjust="spacingAndGlyphs" font-family="Liberation Sans, sans-serif" transform="scale(-1 1)" opacity="0.8">R62</text><text x="-759" y="344.7" font-size="10.4" fill="#e6c2b4" text-anchor="start" textLength="26" lengthAdjust="spacingAndGlyphs" font-family="Liberation Sans, sans-serif" transform="scale(-1 1)" opacity="0.8">C217</text><text x="-754" y="356.1" font-size="10.4" fill="#e6c2b4" text-anchor="start" textLength="20" lengthAdjust="spacingAndGlyphs" font-family="Liberation Sans, sans-serif" transform="scale(-1 1)" opacity="0.8">R56</text><text x="-754" y="392.7" font-size="10.4" fill="#e6c2b4" text-anchor="start" textLength="20" lengthAdjust="spacingAndGlyphs" font-family="Liberation Sans, sans-serif" transform="scale(-1 1)" opacity="0.8">R54</text><text x="545.5" y="180" font-size="8.4" fill="#e4b4a8" text-anchor="middle" font-family="Liberation Sans, sans-serif" transform="rotate(90 545.5 180) scale(1 -1) translate(0 -354)">R55</text><text x="912.5" y="231.8" font-size="10.6" fill="#d8a272" text-anchor="middle" font-family="Liberation Sans, sans-serif" >C1</text><text x="946.5" y="231.8" font-size="10.6" fill="#d8a272" text-anchor="middle" font-family="Liberation Sans, sans-serif" >C2</text><text x="912.5" y="323" font-size="10.6" fill="#d8a272" text-anchor="middle" font-family="Liberation Sans, sans-serif" >C12</text><text x="946.5" y="323" font-size="10.6" fill="#d8a272" text-anchor="middle" font-family="Liberation Sans, sans-serif" >C11</text><text x="912.5" y="414" font-size="10.6" fill="#d8a272" text-anchor="middle" font-family="Liberation Sans, sans-serif" >C7</text><text x="946.5" y="414" font-size="10.6" fill="#d8a272" text-anchor="middle" font-family="Liberation Sans, sans-serif" >C6</text><text x="893.6" y="304.6" font-size="10.6" fill="#dca878" text-anchor="start" font-family="Liberation Sans, sans-serif" >2V5</text><text x="893.6" y="395.4" font-size="10.6" fill="#dca878" text-anchor="start" font-family="Liberation Sans, sans-serif" >1V0_2</text><text x="893.6" y="486.4" font-size="10.6" fill="#dca878" text-anchor="start" font-family="Liberation Sans, sans-serif" >1V0</text><text x="869" y="311" font-size="10.2" fill="#dca878" text-anchor="middle" font-family="Liberation Sans, sans-serif" transform="rotate(-90 869 311)">C56</text><text x="776" y="298" font-size="8.2" fill="#e8d8b0" text-anchor="middle" font-family="Liberation Sans, sans-serif" transform="rotate(90 776 298)">R51</text><text x="747" y="452" font-size="8.2" fill="#e8d8b0" text-anchor="middle" font-family="Liberation Sans, sans-serif" transform="rotate(90 747 452)">R69</text></svg>
<div class="a" style="left:1038px;top:105px;width:27px;height:540px;background:#f1f0ef;"></div>
<div class="tog" style="left:1040px;top:108px;width:24px;height:24px"></div><svg class="a" style="left:1040px;top:108.0px" width="24" height="24" viewBox="0 0 24 24"><path d="M8.4 4.6 L8.4 16.6 L11.2 14 L13.4 18.8 L15.6 17.8 L13.4 13 L17.4 12.8 Z" fill="#3c3c3c"/></svg><svg class="a" style="left:1040px;top:133.5px" width="24" height="24" viewBox="0 0 24 24"><path d="M3.6 5 L20.4 19.6 M20.4 4.6 L3.6 20" stroke="#555" stroke-width="0.9"/><circle cx="12" cy="12.2" r="2" fill="#fff" stroke="#555" stroke-width="0.8"/></svg><div class="seph" style="left:1043px;top:161px;width:18px;background:#c4c1be"></div><svg class="a" style="left:1040px;top:165.0px" width="24" height="24" viewBox="0 0 24 24"><path d="M3.2 6.4 H20.6 V19 H3.2 V14.4 Q5.2 13.2 3.2 11.8 Z" fill="#f8f8f8" stroke="#444" stroke-width="0.9"/><rect x="5" y="3.6" width="3.8" height="4.6" rx="0.4" fill="#1a7ad0"/><rect x="5" y="16.2" width="3.8" height="4.6" rx="0.4" fill="#1a7ad0"/><rect x="10.4" y="3.6" width="3.8" height="4.6" rx="0.4" fill="#1a7ad0"/><rect x="10.4" y="16.2" width="3.8" height="4.6" rx="0.4" fill="#1a7ad0"/><rect x="15.8" y="3.6" width="3.8" height="4.6" rx="0.4" fill="#1a7ad0"/><rect x="15.8" y="16.2" width="3.8" height="4.6" rx="0.4" fill="#1a7ad0"/></svg><svg class="a" style="left:1040px;top:190.0px" width="24" height="24" viewBox="0 0 24 24"><path d="M3.6 19.6 L8.6 13 H15 L20.8 3.6" fill="none" stroke="#1a7ad0" stroke-width="1.7"/><path d="M23.5 18.5 V23.5 H18.5 Z" fill="#111"/></svg><svg class="a" style="left:1040px;top:215.0px" width="24" height="24" viewBox="0 0 24 24"><path d="M2.6 12.4 Q3.4 17.6 6.2 17.6 Q8 17.6 8 13.6 V10.6 Q8 6.6 10 6.6 Q12 6.6 12 10.6 V13.6 Q12 17.6 14 17.6 Q16 17.6 16 13.6 V10.6 Q16 6.6 18 6.6 Q20.6 6.6 21.4 11.6" fill="none" stroke="#1a7ad0" stroke-width="1.7"/><path d="M23.5 18.5 V23.5 H18.5 Z" fill="#111"/></svg><svg class="a" style="left:1040px;top:240.0px" width="24" height="24" viewBox="0 0 24 24"><circle cx="12" cy="12" r="4.7" fill="#fff" stroke="#f08a00" stroke-width="3"/></svg><svg class="a" style="left:1040px;top:265.0px" width="24" height="24" viewBox="0 0 24 24"><path d="M4.4 19.6 V12.2 H9 V4.6 H19.8 V19.6 Z" fill="#1a7ad0"/><circle cx="15" cy="11.6" r="2.1" fill="#f4f4f4"/><path d="M15.6 11.6 H19.8" stroke="#222" stroke-width="1.5"/><circle cx="15.6" cy="11.6" r="0.9" fill="#222"/></svg><svg class="a" style="left:1040px;top:290.0px" width="24" height="24" viewBox="0 0 24 24"><path d="M4.4 19.6 V12.2 H9 V4.6 H19.8 V19.6 Z" fill="#f8f8f8" stroke="#333" stroke-width="1"/><path d="M9 7 L19.8 16.6 M11.6 4.6 L19.8 12 M15.4 4.6 L19.8 8.4 M9 11 L18.4 19.6 M5.6 12.2 L14 19.6 M4.4 15.4 L9.2 19.6" stroke="#222" stroke-width="1.5"/></svg><div class="seph" style="left:1043px;top:318px;width:18px;background:#c4c1be"></div><svg class="a" style="left:1040px;top:322.0px" width="24" height="24" viewBox="0 0 24 24"><path d="M4.4 19.4 L19.6 4.6" stroke="#333536" stroke-width="1.5"/></svg><svg class="a" style="left:1040px;top:347.0px" width="24" height="24" viewBox="0 0 24 24"><path d="M4.8 20 Q5 7 19.6 4.8" fill="none" stroke="#333536" stroke-width="1.5"/></svg><svg class="a" style="left:1040px;top:372.0px" width="24" height="24" viewBox="0 0 24 24"><rect x="4.6" y="5" width="14.8" height="13.4" fill="#c0c0c0" stroke="#333536" stroke-width="1.4"/></svg><svg class="a" style="left:1040px;top:397.0px" width="24" height="24" viewBox="0 0 24 24"><circle cx="12" cy="12" r="7.3" fill="#c0c0c0" stroke="#333536" stroke-width="1.4"/></svg><svg class="a" style="left:1040px;top:422.0px" width="24" height="24" viewBox="0 0 24 24"><path d="M5.6 4.6 L19.4 7.4 L18.6 17 L5.8 19.6 L11.8 12.4 Z" fill="#c0c0c0" stroke="#333536" stroke-width="1.4" stroke-linejoin="round"/></svg><svg class="a" style="left:1040px;top:446.5px" width="24" height="24" viewBox="0 0 24 24"><path d="M17.4 5.4 Q17.4 11.4 12 11.8 Q7 12.4 7.6 19.6" fill="none" stroke="#333536" stroke-width="1.3"/><path d="M4 12 H20" stroke="#1a7ad0" stroke-width="0.9"/><circle cx="4" cy="12" r="1.2" fill="#1a7ad0"/><circle cx="20" cy="12" r="1.2" fill="#1a7ad0"/><circle cx="12" cy="12" r="1.2" fill="#fff" stroke="#1a7ad0" stroke-width="0.8"/></svg><svg class="a" style="left:1040px;top:471.5px" width="24" height="24" viewBox="0 0 24 24"><rect x="3.8" y="4" width="16.6" height="16.4" rx="2" fill="#3a3a3a"/><path d="M5 18.6 L9.6 12.4 L12.4 15.8 L14.6 13.6 L19.2 18.6 Z" fill="#fff"/><circle cx="15" cy="8.4" r="1.8" fill="#fff"/></svg><svg class="a" style="left:1040px;top:496.5px" width="24" height="24" viewBox="0 0 24 24"><path d="M5.8 5.8 H18.4 M12.1 5.8 V20.2" stroke="#222" stroke-width="2.4" fill="none"/></svg><svg class="a" style="left:1040px;top:521.5px" width="24" height="24" viewBox="0 0 24 24"><rect x="4.6" y="5.6" width="14.8" height="12.8" fill="#d6d6d6" stroke="#333536" stroke-width="1.3"/><path d="M7.4 9.4 H16.6 M7.4 12 H14.6 M7.4 14.6 H16.6" stroke="#333536" stroke-width="0.9"/></svg><svg class="a" style="left:1040px;top:546.5px" width="24" height="24" viewBox="0 0 24 24"><rect x="4" y="4.4" width="16.2" height="16" fill="#fafafa" stroke="#333536" stroke-width="1.1"/><path d="M4 7.6 H20.2 M4 11.8 H20.2 M4 16 H20.2 M8 4.4 V20.4 M12.2 4.4 V20.4 M16.2 4.4 V20.4" stroke="#333536" stroke-width="1"/></svg><svg class="a" style="left:1040px;top:571.5px" width="24" height="24" viewBox="0 0 24 24"><path d="M5.4 5.4 H20 M11.8 18.6 H20 M18.2 6.4 V17.6" stroke="#333536" stroke-width="0.9"/><path d="M18.2 6 L17 8.2 H19.4 Z M18.2 18 L17 15.8 H19.4 Z" fill="#333536"/><circle cx="5.2" cy="5.4" r="2.1" fill="#1a7ad0"/><circle cx="11.8" cy="18.6" r="2.1" fill="#1a7ad0"/><path d="M23.6 18.8 V23.8 H18.6 Z" fill="#111"/></svg><svg class="a" style="left:1040px;top:596.5px" width="24" height="24" viewBox="0 0 24 24"><path d="M5.2 4.4 L5.2 15.4 L7.8 13 L9.8 17.4 L11.8 16.4 L9.8 12.2 L13.4 12 Z" fill="#4a4a4a"/><circle cx="15.6" cy="16.6" r="5" fill="#c8102e"/><path d="M13.8 14.8 L17.4 18.4 M17.4 14.8 L13.8 18.4" stroke="#fff" stroke-width="1.5"/></svg><div class="seph" style="left:1043px;top:624px;width:18px;background:#c4c1be"></div>
<div class="a" style="left:1065px;top:105px;width:4px;height:540px;background:#e6e4e2;"></div>
<div class="a" style="left:1069px;top:105px;width:177px;height:408px;background:#dedddb;"></div>
<div class="cap" style="left:1069px;top:105px;width:177px;height:13px;background:linear-gradient(#bcbcbc,#b0b0b0)"><svg class="a" style="left:0;top:0" width="177" height="13"><text x="2.3" y="8.7" font-family="Liberation Sans, sans-serif" font-size="9.3" fill="#2f3a4c" textLength="47.7" lengthAdjust="spacingAndGlyphs">Appearance</text></svg></div>
<div class="a" style="left:1069px;top:118px;width:177px;height:5px;background:#e4e2e0;"></div>
<div class="a" style="left:1071px;top:123px;width:175px;height:28px;background:#e8e6e3;"></div>
<div class="a" style="left:1071px;top:150px;width:175px;height:1px;background:#d4d0cc;"></div>
<div class="t" style="left:1105px;top:129px;font-size:12.6px">Layers</div>
<div class="t" style="left:1175px;top:129px;font-size:12.6px">Objects</div>
<div class="a" style="left:1088px;top:148px;width:63px;height:3px;background:#3584e4;"></div>
<svg class="a" style="left:1075px;top:130px" width="8" height="12" viewBox="0 0 8 12"><path d="M6.5 2 L2 6 L6.5 10 Z" fill="#9a9c9b"/></svg>
<svg class="a" style="left:1232px;top:130px" width="8" height="12" viewBox="0 0 8 12"><path d="M2 1.5 L7 6 L2 10.5 Z" fill="#111"/></svg>
<div class="a" style="left:1071px;top:151px;width:175px;height:229px;background:#f0efee;"></div>
<div class="a" style="left:1071px;top:151px;width:175px;height:227px;overflow:hidden"><div class="a" style="left:11px;top:2.2px;width:14px;height:14px;background:#c83434"></div><svg class="a" style="left:29.5px;top:2.7px" width="13" height="13" viewBox="0 0 13 13"><circle cx="6.5" cy="6.5" r="6.5" fill="#3e3e3e"/><ellipse cx="6.5" cy="6.5" rx="4.6" ry="2.9" fill="#f4f4f4"/><circle cx="6.5" cy="6.5" r="1.7" fill="#f4f4f4" stroke="#3e3e3e" stroke-width="0.9"/></svg><div class="t" style="left:46px;top:1.0px;font-size:11.4px">F.Cu</div><div class="a" style="left:11px;top:19.4px;width:14px;height:14px;background:#7fc87f"></div><svg class="a" style="left:29.5px;top:19.9px" width="13" height="13" viewBox="0 0 13 13"><circle cx="6.5" cy="6.5" r="6.5" fill="#3e3e3e"/><ellipse cx="6.5" cy="6.5" rx="4.6" ry="2.9" fill="#f4f4f4"/><circle cx="6.5" cy="6.5" r="1.7" fill="#f4f4f4" stroke="#3e3e3e" stroke-width="0.9"/></svg><div class="t" style="left:46px;top:18.2px;font-size:11.4px">In1.Cu</div><div class="a" style="left:11px;top:36.5px;width:14px;height:14px;background:#ce7d2c"></div><svg class="a" style="left:29.5px;top:37.0px" width="13" height="13" viewBox="0 0 13 13"><circle cx="6.5" cy="6.5" r="6.5" fill="#b9b9b9"/><circle cx="6.5" cy="6.5" r="4.3" fill="#f0f0f0"/><path d="M3.2 9.2 L9.8 3.8" stroke="#8a8a8a" stroke-width="1.6"/></svg><div class="t" style="left:46px;top:35.3px;font-size:11.4px">In2.Cu</div><div class="a" style="left:11px;top:53.7px;width:14px;height:14px;background:#4fcbcb"></div><svg class="a" style="left:29.5px;top:54.2px" width="13" height="13" viewBox="0 0 13 13"><circle cx="6.5" cy="6.5" r="6.5" fill="#b9b9b9"/><circle cx="6.5" cy="6.5" r="4.3" fill="#f0f0f0"/><path d="M3.2 9.2 L9.8 3.8" stroke="#8a8a8a" stroke-width="1.6"/></svg><div class="t" style="left:46px;top:52.5px;font-size:11.4px">In3.Cu</div><div class="a" style="left:11px;top:70.9px;width:14px;height:14px;background:#db628b"></div><svg class="a" style="left:29.5px;top:71.4px" width="13" height="13" viewBox="0 0 13 13"><circle cx="6.5" cy="6.5" r="6.5" fill="#b9b9b9"/><circle cx="6.5" cy="6.5" r="4.3" fill="#f0f0f0"/><path d="M3.2 9.2 L9.8 3.8" stroke="#8a8a8a" stroke-width="1.6"/></svg><div class="t" style="left:46px;top:69.7px;font-size:11.4px">In4.Cu</div><div class="a" style="left:0;top:86.6px;width:175px;height:17px;background:#fff"></div><svg class="a" style="left:3px;top:90.1px" width="7" height="10" viewBox="0 0 7 10"><path d="M1 1 L6 5 L1 9 Z" fill="#1a1aff"/></svg><div class="a" style="left:11px;top:88.1px;width:14px;height:14px;background:#4d7fc4"></div><svg class="a" style="left:29.5px;top:88.6px" width="13" height="13" viewBox="0 0 13 13"><circle cx="6.5" cy="6.5" r="6.5" fill="#3e3e3e"/><ellipse cx="6.5" cy="6.5" rx="4.6" ry="2.9" fill="#f4f4f4"/><circle cx="6.5" cy="6.5" r="1.7" fill="#f4f4f4" stroke="#3e3e3e" stroke-width="0.9"/></svg><div class="t" style="left:46px;top:86.9px;font-size:11.4px">B.Cu</div><div class="a" style="left:11px;top:105.2px;width:14px;height:14px;background:#840084"></div><svg class="a" style="left:29.5px;top:105.7px" width="13" height="13" viewBox="0 0 13 13"><circle cx="6.5" cy="6.5" r="6.5" fill="#3e3e3e"/><ellipse cx="6.5" cy="6.5" rx="4.6" ry="2.9" fill="#f4f4f4"/><circle cx="6.5" cy="6.5" r="1.7" fill="#f4f4f4" stroke="#3e3e3e" stroke-width="0.9"/></svg><div class="t" style="left:46px;top:104.0px;font-size:11.4px">F.Adhesive</div><div class="a" style="left:11px;top:122.4px;width:14px;height:14px;background:#000084"></div><svg class="a" style="left:29.5px;top:122.9px" width="13" height="13" viewBox="0 0 13 13"><circle cx="6.5" cy="6.5" r="6.5" fill="#3e3e3e"/><ellipse cx="6.5" cy="6.5" rx="4.6" ry="2.9" fill="#f4f4f4"/><circle cx="6.5" cy="6.5" r="1.7" fill="#f4f4f4" stroke="#3e3e3e" stroke-width="0.9"/></svg><div class="t" style="left:46px;top:121.2px;font-size:11.4px">B.Adhesive</div><div class="a" style="left:11px;top:139.6px;width:14px;height:14px;background:#a89590"></div><svg class="a" style="left:29.5px;top:140.1px" width="13" height="13" viewBox="0 0 13 13"><circle cx="6.5" cy="6.5" r="6.5" fill="#3e3e3e"/><ellipse cx="6.5" cy="6.5" rx="4.6" ry="2.9" fill="#f4f4f4"/><circle cx="6.5" cy="6.5" r="1.7" fill="#f4f4f4" stroke="#3e3e3e" stroke-width="0.9"/></svg><div class="t" style="left:46px;top:138.4px;font-size:11.4px">F.Paste</div><div class="a" style="left:11px;top:156.7px;width:14px;height:14px;background:#00b0b0"></div><svg class="a" style="left:29.5px;top:157.2px" width="13" height="13" viewBox="0 0 13 13"><circle cx="6.5" cy="6.5" r="6.5" fill="#3e3e3e"/><ellipse cx="6.5" cy="6.5" rx="4.6" ry="2.9" fill="#f4f4f4"/><circle cx="6.5" cy="6.5" r="1.7" fill="#f4f4f4" stroke="#3e3e3e" stroke-width="0.9"/></svg><div class="t" style="left:46px;top:155.5px;font-size:11.4px">B.Paste</div><div class="a" style="left:11px;top:173.9px;width:14px;height:14px;background:#f2eda1"></div><svg class="a" style="left:29.5px;top:174.4px" width="13" height="13" viewBox="0 0 13 13"><circle cx="6.5" cy="6.5" r="6.5" fill="#3e3e3e"/><ellipse cx="6.5" cy="6.5" rx="4.6" ry="2.9" fill="#f4f4f4"/><circle cx="6.5" cy="6.5" r="1.7" fill="#f4f4f4" stroke="#3e3e3e" stroke-width="0.9"/></svg><div class="t" style="left:46px;top:172.7px;font-size:11.4px">F.Silkscreen</div><div class="a" style="left:11px;top:191.1px;width:14px;height:14px;background:#e8b2a7"></div><svg class="a" style="left:29.5px;top:191.6px" width="13" height="13" viewBox="0 0 13 13"><circle cx="6.5" cy="6.5" r="6.5" fill="#3e3e3e"/><ellipse cx="6.5" cy="6.5" rx="4.6" ry="2.9" fill="#f4f4f4"/><circle cx="6.5" cy="6.5" r="1.7" fill="#f4f4f4" stroke="#3e3e3e" stroke-width="0.9"/></svg><div class="t" style="left:46px;top:189.9px;font-size:11.4px">B.Silkscreen</div><div class="a" style="left:11px;top:208.2px;width:14px;height:14px;background:#4d2070"></div><svg class="a" style="left:29.5px;top:208.7px" width="13" height="13" viewBox="0 0 13 13"><circle cx="6.5" cy="6.5" r="6.5" fill="#3e3e3e"/><ellipse cx="6.5" cy="6.5" rx="4.6" ry="2.9" fill="#f4f4f4"/><circle cx="6.5" cy="6.5" r="1.7" fill="#f4f4f4" stroke="#3e3e3e" stroke-width="0.9"/></svg><div class="t" style="left:46px;top:207.0px;font-size:11.4px">F.Mask</div><div class="a" style="left:11px;top:225.4px;width:14px;height:14px;background:#026050"></div><svg class="a" style="left:29.5px;top:225.9px" width="13" height="13" viewBox="0 0 13 13"><circle cx="6.5" cy="6.5" r="6.5" fill="#3e3e3e"/><ellipse cx="6.5" cy="6.5" rx="4.6" ry="2.9" fill="#f4f4f4"/><circle cx="6.5" cy="6.5" r="1.7" fill="#f4f4f4" stroke="#3e3e3e" stroke-width="0.9"/></svg><div class="t" style="left:46px;top:224.2px;font-size:11.4px">B.Mask</div></div>
<div class="a" style="left:1069px;top:379px;width:177px;height:22px;background:#ffffff;"></div>
<svg class="a" style="left:1080px;top:385px" width="7" height="11" viewBox="0 0 7 11"><path d="M1 0.5 L6 5.5 L1 10.5 Z" fill="#000"/></svg>
<div class="t" style="left:1088px;top:383px;color:#111;font-size:11.6px">Layer Display Options</div>
<div class="t" style="left:1074px;top:410px;font-size:11.3px">Presets (Ctrl+Tab):</div>
<div class="combo" style="left:1074px;top:427.6px;width:168px;height:27px"><div class="t" style="left:9px;top:4.2px">---</div><div class="arr" style="right:8.5px;top:9.5px"></div></div>
<div class="t" style="left:1074px;top:458px;font-size:11.5px">Viewports (Shift+Tab):</div>
<div class="combo" style="left:1074px;top:475.6px;width:168px;height:27px"><div class="t" style="left:9px;top:4.2px">---</div><div class="arr" style="right:8.5px;top:9.5px"></div></div>
<div class="a" style="left:1069px;top:508px;width:177px;height:5px;background:#e6e4e2;"></div>
<div class="a" style="left:1069px;top:513px;width:177px;height:132px;background:#dedddb;"></div>
<div class="cap" style="left:1069px;top:513px;width:177px;height:13px;background:linear-gradient(#bcbcbc,#b0b0b0)"><svg class="a" style="left:0;top:0" width="177" height="13"><text x="2.3" y="8.7" font-family="Liberation Sans, sans-serif" font-size="9.3" fill="#2f3a4c" textLength="59.6" lengthAdjust="spacingAndGlyphs">Selection Filter</text></svg></div>
<div class="a" style="left:1069px;top:526px;width:177px;height:119px;overflow:hidden"><div class="cbx" style="left:7px;top:6px"><svg class="a" style="left:0;top:0" width="11" height="11" viewBox="0 0 11 11"><path d="M2.2 5.6 L4.6 8 L9 3.2" fill="none" stroke="#fff" stroke-width="1.8" stroke-linecap="round" stroke-linejoin="round"/></svg></div><div class="t" style="left:22px;top:4.2px;font-size:11.9px">All items</div><div class="cbx" style="left:98px;top:6px"><svg class="a" style="left:0;top:0" width="11" height="11" viewBox="0 0 11 11"><path d="M2.2 5.6 L4.6 8 L9 3.2" fill="none" stroke="#fff" stroke-width="1.8" stroke-linecap="round" stroke-linejoin="round"/></svg></div><div class="t" style="left:113.5px;top:4.2px;font-size:11.9px">Locked items</div><div class="cbx" style="left:7px;top:25px"><svg class="a" style="left:0;top:0" width="11" height="11" viewBox="0 0 11 11"><path d="M2.2 5.6 L4.6 8 L9 3.2" fill="none" stroke="#fff" stroke-width="1.8" stroke-linecap="round" stroke-linejoin="round"/></svg></div><div class="t" style="left:22px;top:22.9px;font-size:11.9px">Footprints</div><div class="cbx" style="left:98px;top:25px"><svg class="a" style="left:0;top:0" width="11" height="11" viewBox="0 0 11 11"><path d="M2.2 5.6 L4.6 8 L9 3.2" fill="none" stroke="#fff" stroke-width="1.8" stroke-linecap="round" stroke-linejoin="round"/></svg></div><div class="t" style="left:113.5px;top:22.9px;font-size:11.9px">Text</div><div class="cbx" style="left:7px;top:44px"><svg class="a" style="left:0;top:0" width="11" height="11" viewBox="0 0 11 11"><path d="M2.2 5.6 L4.6 8 L9 3.2" fill="none" stroke="#fff" stroke-width="1.8" stroke-linecap="round" stroke-linejoin="round"/></svg></div><div class="t" style="left:22px;top:41.6px;font-size:11.9px">Tracks</div><div class="cbx" style="left:98px;top:44px"><svg class="a" style="left:0;top:0" width="11" height="11" viewBox="0 0 11 11"><path d="M2.2 5.6 L4.6 8 L9 3.2" fill="none" stroke="#fff" stroke-width="1.8" stroke-linecap="round" stroke-linejoin="round"/></svg></div><div class="t" style="left:113.5px;top:41.6px;font-size:11.9px">Vias</div><div class="cbx" style="left:7px;top:62px"><svg class="a" style="left:0;top:0" width="11" height="11" viewBox="0 0 11 11"><path d="M2.2 5.6 L4.6 8 L9 3.2" fill="none" stroke="#fff" stroke-width="1.8" stroke-linecap="round" stroke-linejoin="round"/></svg></div><div class="t" style="left:22px;top:60.3px;font-size:11.9px">Pads</div><div class="cbx" style="left:98px;top:62px"><svg class="a" style="left:0;top:0" width="11" height="11" viewBox="0 0 11 11"><path d="M2.2 5.6 L4.6 8 L9 3.2" fill="none" stroke="#fff" stroke-width="1.8" stroke-linecap="round" stroke-linejoin="round"/></svg></div><div class="t" style="left:113.5px;top:60.3px;font-size:11.9px">Graphics</div><div class="cbx" style="left:7px;top:81px"><svg class="a" style="left:0;top:0" width="11" height="11" viewBox="0 0 11 11"><path d="M2.2 5.6 L4.6 8 L9 3.2" fill="none" stroke="#fff" stroke-width="1.8" stroke-linecap="round" stroke-linejoin="round"/></svg></div><div class="t" style="left:22px;top:79.0px;font-size:11.9px">Zones</div><div class="cbx" style="left:98px;top:81px"><svg class="a" style="left:0;top:0" width="11" height="11" viewBox="0 0 11 11"><path d="M2.2 5.6 L4.6 8 L9 3.2" fill="none" stroke="#fff" stroke-width="1.8" stroke-linecap="round" stroke-linejoin="round"/></svg></div><div class="t" style="left:113.5px;top:79.0px;font-size:11.9px">Rule Areas</div><div class="cbx" style="left:7px;top:100px"><svg class="a" style="left:0;top:0" width="11" height="11" viewBox="0 0 11 11"><path d="M2.2 5.6 L4.6 8 L9 3.2" fill="none" stroke="#fff" stroke-width="1.8" stroke-linecap="round" stroke-linejoin="round"/></svg></div><div class="t" style="left:22px;top:97.7px;font-size:11.9px">Dimensions</div><div class="cbx" style="left:98px;top:100px"><svg class="a" style="left:0;top:0" width="11" height="11" viewBox="0 0 11 11"><path d="M2.2 5.6 L4.6 8 L9 3.2" fill="none" stroke="#fff" stroke-width="1.8" stroke-linecap="round" stroke-linejoin="round"/></svg></div><div class="t" style="left:113.5px;top:97.7px;font-size:11.9px">Other items</div></div>
<div class="a" style="left:1246px;top:24px;width:2px;height:678px;background:#f6f5f4;"></div>
<div class="a" style="left:270px;top:495px;width:768px;height:4px;background:#e6e4e2;"></div>
<div class="a" style="left:270px;top:499px;width:768px;height:146px;background:#dedddb;"></div>
<div class="cap" style="left:270px;top:499.3px;width:768px;height:13px;background:linear-gradient(#bcbcbc,#b0b0b0)"><svg class="a" style="left:0;top:0" width="768" height="13"><text x="1.4" y="8.7" font-family="Liberation Sans, sans-serif" font-size="9.3" fill="#2f3a4c" textLength="26.6" lengthAdjust="spacingAndGlyphs">Search</text></svg></div>
<svg class="a" style="left:1026px;top:500px" width="9" height="9" viewBox="0 0 9 9"><rect x="0.5" y="0.5" width="8" height="8" rx="1" fill="#dcdcdc" stroke="#222" stroke-width="1"/><path d="M2.5 2.5 L6.5 6.5 M6.5 2.5 L2.5 6.5" stroke="#111" stroke-width="1.4"/></svg>
<div class="a" style="left:274px;top:517px;width:27px;height:26px;border:1px solid #cdc7c2;border-radius:4px;background:linear-gradient(#f7f6f5,#ecebe9)"></div>
<svg class="a" style="left:280.2px;top:522.8px" width="14" height="14" viewBox="0 0 14 14"><g fill="#2e3030"><rect x="5.7" y="0.3" width="2.6" height="3.4" rx="0.5" transform="rotate(0 7 7)"/><rect x="5.7" y="0.3" width="2.6" height="3.4" rx="0.5" transform="rotate(45 7 7)"/><rect x="5.7" y="0.3" width="2.6" height="3.4" rx="0.5" transform="rotate(90 7 7)"/><rect x="5.7" y="0.3" width="2.6" height="3.4" rx="0.5" transform="rotate(135 7 7)"/><rect x="5.7" y="0.3" width="2.6" height="3.4" rx="0.5" transform="rotate(180 7 7)"/><rect x="5.7" y="0.3" width="2.6" height="3.4" rx="0.5" transform="rotate(225 7 7)"/><rect x="5.7" y="0.3" width="2.6" height="3.4" rx="0.5" transform="rotate(270 7 7)"/><rect x="5.7" y="0.3" width="2.6" height="3.4" rx="0.5" transform="rotate(315 7 7)"/><circle cx="7" cy="7" r="4.6"/></g><circle cx="7" cy="7" r="2" fill="#f1f0ee"/></svg>
<div class="a" style="left:310px;top:517px;width:724px;height:26px;border:1px solid #d6d2ce;border-radius:4px;background:#fff"></div>
<svg class="a" style="left:316px;top:523px" width="14" height="14" viewBox="0 0 14 14" fill="none" stroke="#2e3436" stroke-width="1.4"><circle cx="5.6" cy="5.6" r="4.3"/><path d="M8.8 8.8 L12.6 12.6" stroke-linecap="round"/></svg>
<div class="t" style="left:333px;top:522px;color:#111">U12</div>
<svg class="a" style="left:1015px;top:525px" width="13" height="10" viewBox="0 0 13 10"><path d="M4 0.3 H11.5 Q12.7 0.3 12.7 1.5 V8.5 Q12.7 9.7 11.5 9.7 H4 L0.3 5 Z" fill="#2e3436"/><path d="M6 3 L10 7 M10 3 L6 7" stroke="#fff" stroke-width="1.5"/></svg>
<div class="a" style="left:270px;top:548px;width:768px;height:28px;background:#e1dedb;"></div>
<div class="t" style="left:285.6px;top:554px;letter-spacing:0.2px">Footprints</div>
<div class="t" style="left:367px;top:554px;letter-spacing:0.2px">Zones</div>
<div class="t" style="left:425px;top:554px;letter-spacing:0.2px">Nets</div>
<div class="t" style="left:477px;top:554px;letter-spacing:0.2px">Ratsnest</div>
<div class="t" style="left:552px;top:554px;letter-spacing:0.2px">Text</div>
<div class="a" style="left:276px;top:573px;width:76px;height:3px;background:#3584e4;"></div>
<div class="a" style="left:270px;top:576px;width:768px;height:67px;background:#ffffff;"></div>
<div class="a" style="left:270px;top:596px;width:768px;height:1px;background:#dedcda;"></div>
<div class="a" style="left:339px;top:577px;width:1px;height:19px;background:#dedcda;"></div>
<div class="a" style="left:620px;top:577px;width:1px;height:19px;background:#dedcda;"></div>
<div class="a" style="left:725px;top:577px;width:1px;height:19px;background:#dedcda;"></div>
<div class="a" style="left:831px;top:577px;width:1px;height:19px;background:#dedcda;"></div>
<div class="a" style="left:936px;top:577px;width:1px;height:19px;background:#dedcda;"></div>
<div class="t" style="left:275px;top:578px;color:#000">Reference</div>
<div class="t" style="left:345px;top:578px;color:#000">Value</div>
<div class="t" style="left:623px;width:100px;text-align:center;top:578px;color:#000">Layer</div>
<div class="t" style="left:728px;width:100px;text-align:center;top:578px;color:#000">X</div>
<div class="t" style="left:834px;width:100px;text-align:center;top:578px;color:#000">Y</div>
<div class="a" style="left:270px;top:597px;width:667px;height:20px;background:#3584e4;outline:1px dotted #8fb8ee;outline-offset:-1px"></div>
<div class="t" style="left:272px;top:599px;color:#fff;letter-spacing:-0.4px">U12</div>
<div class="t" style="left:342px;top:599px;color:#fff;letter-spacing:-0.6px">ESD224DQAR</div>
<div class="t" style="left:622px;width:100px;text-align:center;top:599px;color:#fff">B.Cu</div>
<div class="t" style="left:727px;width:100px;text-align:center;top:599px;color:#fff">33.0000 mm</div>
<div class="t" style="left:832px;width:100px;text-align:center;top:599px;color:#fff">119.0000 mm</div>
<div class="a" style="left:2px;top:645px;width:1244px;height:38px;background:#f1f0ef;"></div>
<div class="t" style="left:16px;top:647px;color:#111">Footprint</div>
<div class="t" style="left:16px;top:664px;color:#111">R101</div>
<div class="t" style="left:97px;top:647px;color:#111">Text</div>
<div class="t" style="left:97px;top:664px;color:#111">R101</div>
<div class="t" style="left:155px;top:647px;color:#111">Type</div>
<div class="t" style="left:155px;top:664px;color:#111">Reference</div>
<div class="t" style="left:242px;top:647px;color:#111">Display</div>
<div class="t" style="left:242px;top:664px;color:#111">Yes</div>
<div class="t" style="left:312px;top:647px;color:#111">Layer</div>
<div class="t" style="left:312px;top:664px;color:#111">B.Silkscreen</div>
<div class="t" style="left:408px;top:647px;color:#111">Mirror</div>
<div class="t" style="left:408px;top:664px;color:#111">Yes</div>
<div class="t" style="left:473px;top:647px;color:#111">Angle</div>
<div class="t" style="left:473px;top:664px;color:#111">0</div>
<div class="t" style="left:534px;top:647px;color:#111">Font</div>
<div class="t" style="left:534px;top:664px;color:#111">Default</div>
<div class="t" style="left:605px;top:647px;color:#111">Thickness</div>
<div class="t" style="left:605px;top:664px;color:#111">0.1000 mm</div>
<div class="t" style="left:698px;top:647px;color:#111">Width</div>
<div class="t" style="left:698px;top:664px;color:#111">0.7500 mm</div>
<div class="t" style="left:791px;top:647px;color:#111">Height</div>
<div class="t" style="left:791px;top:664px;color:#111">0.7500 mm</div>
<div class="a" style="left:2px;top:683px;width:1244px;height:19px;background:#f6f5f4;"></div>
<div class="t" style="left:163px;top:684px;white-space:pre">Z 3.51</div>
<div class="t" style="left:238px;top:684px;white-space:pre">X 113.5000  Y 99.0000</div>
<div class="t" style="left:404px;top:684px;white-space:pre">dx 113.5000  dy 99.0000  dist 150.6096</div>
<div class="t" style="left:672px;top:684px;white-space:pre">grid 0.5000</div>
<div class="t" style="left:864px;top:684px;white-space:pre">mm</div>
<svg class="a" style="left:1226px;top:682px" width="18" height="18" viewBox="0 0 18 18"><path d="M17 1 L1 17 M17 5 L5 17 M17 9 L9 17 M17 13 L13 17" stroke="#b8b5b2" stroke-width="1"/></svg></body></html>
